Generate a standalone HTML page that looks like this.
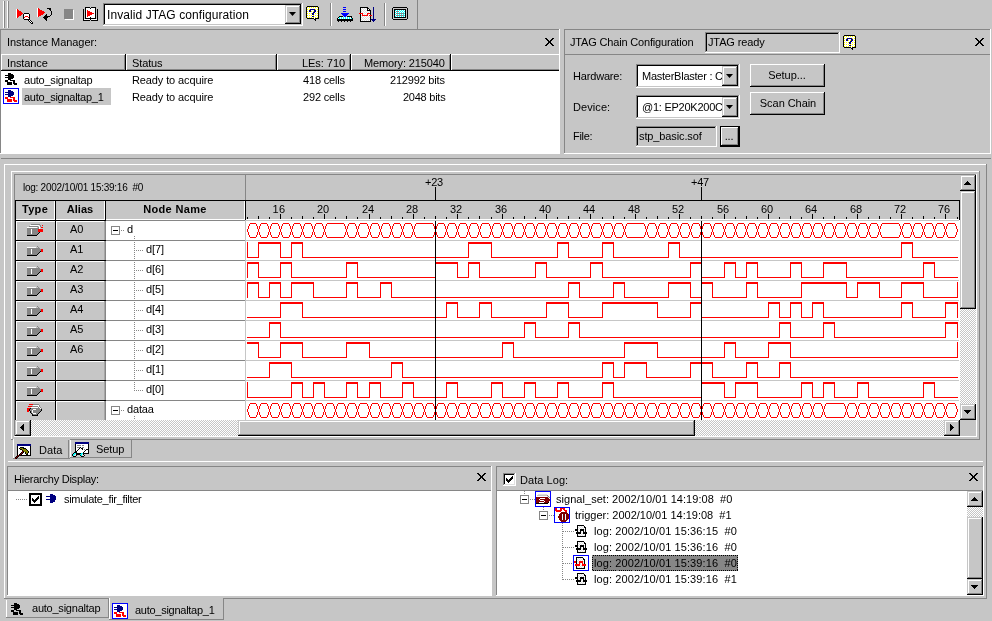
<!DOCTYPE html>
<html><head><meta charset="utf-8"><style>
html,body{margin:0;padding:0}
body{width:992px;height:621px;overflow:hidden;background:#c6c6c6;position:relative;font-family:"Liberation Sans",sans-serif}
div,span,svg{position:absolute}
.t{white-space:pre;line-height:normal;will-change:transform}
</style></head><body>
<div style="left:3px;top:1px;width:1px;height:27px;background:#fff;"></div>
<div style="left:4px;top:1px;width:1px;height:27px;background:#868686;"></div>
<div style="left:7px;top:1px;width:1px;height:27px;background:#fff;"></div>
<div style="left:8px;top:1px;width:1px;height:27px;background:#868686;"></div>
<div style="left:417px;top:0px;width:1px;height:29px;background:#868686;"></div>
<div style="left:103px;top:3px;width:200px;height:23px;background:#fff;"></div>
<div style="left:103px;top:3px;width:200px;height:1px;background:#868686;"></div>
<div style="left:103px;top:3px;width:1px;height:23px;background:#868686;"></div>
<div style="left:103px;top:25px;width:200px;height:1px;background:#fff;"></div>
<div style="left:302px;top:3px;width:1px;height:23px;background:#fff;"></div>
<div style="left:104px;top:4px;width:198px;height:1px;background:#000;"></div>
<div style="left:104px;top:4px;width:1px;height:21px;background:#000;"></div>
<div style="left:104px;top:24px;width:198px;height:1px;background:#c6c6c6;"></div>
<div style="left:301px;top:4px;width:1px;height:21px;background:#c6c6c6;"></div>
<div style="left:285px;top:5px;width:16px;height:19px;background:#c6c6c6;"></div>
<div style="left:285px;top:23px;width:16px;height:1px;background:#000;"></div>
<div style="left:300px;top:5px;width:1px;height:19px;background:#000;"></div>
<div style="left:286px;top:6px;width:14px;height:1px;background:#fff;"></div>
<div style="left:286px;top:6px;width:1px;height:17px;background:#fff;"></div>
<div style="left:286px;top:22px;width:14px;height:1px;background:#868686;"></div>
<div style="left:299px;top:6px;width:1px;height:17px;background:#868686;"></div>
<svg style="left:289px;top:12px" width="7" height="4" viewBox="0 0 7 4" shape-rendering="crispEdges"><polygon points="0,0 7,0 3.5,4" fill="#000" shape-rendering="auto"/></svg>
<span class="t" style="left:107px;top:8px;font-size:12px;font-weight:normal;color:#000;letter-spacing:0.08px;">Invalid JTAG configuration</span>
<div style="left:330px;top:3px;width:1px;height:23px;background:#868686;"></div>
<div style="left:331px;top:3px;width:1px;height:23px;background:#fff;"></div>
<div style="left:384px;top:3px;width:1px;height:23px;background:#868686;"></div>
<div style="left:385px;top:3px;width:1px;height:23px;background:#fff;"></div>
<div style="left:0px;top:29px;width:560px;height:1px;background:#868686;"></div>
<div style="left:0px;top:29px;width:1px;height:125px;background:#868686;"></div>
<div style="left:559px;top:29px;width:1px;height:125px;background:#fff;"></div>
<div style="left:0px;top:153px;width:560px;height:1px;background:#fff;"></div>
<span class="t" style="left:7px;top:36px;font-size:11px;font-weight:normal;color:#000;letter-spacing:-0.062px;">Instance Manager:</span>
<svg style="left:545px;top:38px" width="9" height="8" viewBox="0 0 9 8" shape-rendering="crispEdges"><rect x="0" y="0" width="2" height="1" fill="#000"/><rect x="7" y="0" width="2" height="1" fill="#000"/><rect x="1" y="1" width="2" height="1" fill="#000"/><rect x="6" y="1" width="2" height="1" fill="#000"/><rect x="2" y="2" width="2" height="1" fill="#000"/><rect x="5" y="2" width="2" height="1" fill="#000"/><rect x="3" y="3" width="2" height="1" fill="#000"/><rect x="4" y="3" width="2" height="1" fill="#000"/><rect x="4" y="4" width="2" height="1" fill="#000"/><rect x="3" y="4" width="2" height="1" fill="#000"/><rect x="5" y="5" width="2" height="1" fill="#000"/><rect x="2" y="5" width="2" height="1" fill="#000"/><rect x="6" y="6" width="2" height="1" fill="#000"/><rect x="1" y="6" width="2" height="1" fill="#000"/><rect x="7" y="7" width="2" height="1" fill="#000"/><rect x="0" y="7" width="2" height="1" fill="#000"/></svg>
<div style="left:1px;top:54px;width:558px;height:17px;background:#c6c6c6;"></div>
<div style="left:1px;top:54px;width:558px;height:1px;background:#fff;"></div>
<div style="left:1px;top:69px;width:558px;height:1px;background:#868686;"></div>
<div style="left:1px;top:70px;width:558px;height:1px;background:#000;"></div>
<div style="left:124px;top:55px;width:1px;height:15px;background:#868686;"></div>
<div style="left:125px;top:54px;width:1px;height:17px;background:#000;"></div>
<div style="left:126px;top:55px;width:1px;height:15px;background:#fff;"></div>
<div style="left:275px;top:55px;width:1px;height:15px;background:#868686;"></div>
<div style="left:276px;top:54px;width:1px;height:17px;background:#000;"></div>
<div style="left:277px;top:55px;width:1px;height:15px;background:#fff;"></div>
<div style="left:349px;top:55px;width:1px;height:15px;background:#868686;"></div>
<div style="left:350px;top:54px;width:1px;height:17px;background:#000;"></div>
<div style="left:351px;top:55px;width:1px;height:15px;background:#fff;"></div>
<div style="left:449px;top:55px;width:1px;height:15px;background:#868686;"></div>
<div style="left:450px;top:54px;width:1px;height:17px;background:#000;"></div>
<div style="left:451px;top:55px;width:1px;height:15px;background:#fff;"></div>
<div style="left:1px;top:54px;width:1px;height:16px;background:#fff;"></div>
<span class="t" style="left:7px;top:57px;font-size:11px;font-weight:normal;color:#000;letter-spacing:-0.1px;">Instance</span>
<span class="t" style="left:132px;top:57px;font-size:11px;font-weight:normal;color:#000;letter-spacing:-0.12px;">Status</span>
<span class="t" style="right:647px;top:57px;font-size:11px;font-weight:normal;color:#000;letter-spacing:-0.043px;">LEs: 710</span>
<span class="t" style="right:547px;top:57px;font-size:11px;font-weight:normal;color:#000;letter-spacing:-0.123px;">Memory: 215040</span>
<div style="left:1px;top:71px;width:558px;height:82px;background:#fff;"></div>
<div style="left:22px;top:88px;width:89px;height:17px;background:#c6c6c6;"></div>
<span class="t" style="left:24px;top:74px;font-size:11px;font-weight:normal;color:#000;letter-spacing:-0.231px;">auto_signaltap</span>
<span class="t" style="left:132px;top:74px;font-size:11px;font-weight:normal;color:#000;letter-spacing:-0.12px;">Ready to acquire</span>
<span class="t" style="right:647px;top:74px;font-size:11px;font-weight:normal;color:#000;letter-spacing:-0.162px;">418 cells</span>
<span class="t" style="right:547px;top:74px;font-size:11px;font-weight:normal;color:#000;letter-spacing:-0.2px;">212992 bits</span>
<span class="t" style="left:24px;top:91px;font-size:11px;font-weight:normal;color:#000;letter-spacing:-0.267px;">auto_signaltap_1</span>
<span class="t" style="left:132px;top:91px;font-size:11px;font-weight:normal;color:#000;letter-spacing:-0.12px;">Ready to acquire</span>
<span class="t" style="right:647px;top:91px;font-size:11px;font-weight:normal;color:#000;letter-spacing:-0.16px;">292 cells</span>
<span class="t" style="right:547px;top:91px;font-size:11px;font-weight:normal;color:#000;letter-spacing:-0.25px;">2048 bits</span>
<div style="left:564px;top:29px;width:427px;height:1px;background:#868686;"></div>
<div style="left:564px;top:29px;width:1px;height:125px;background:#868686;"></div>
<div style="left:990px;top:29px;width:1px;height:125px;background:#fff;"></div>
<div style="left:564px;top:153px;width:427px;height:1px;background:#fff;"></div>
<div style="left:565px;top:54px;width:425px;height:1px;background:#868686;"></div>
<span class="t" style="left:570px;top:36px;font-size:11px;font-weight:normal;color:#000;letter-spacing:-0.174px;">JTAG Chain Configuration</span>
<div style="left:705px;top:32px;width:135px;height:21px;background:#c6c6c6;"></div>
<div style="left:705px;top:32px;width:135px;height:1px;background:#868686;"></div>
<div style="left:705px;top:32px;width:1px;height:21px;background:#868686;"></div>
<div style="left:705px;top:52px;width:135px;height:1px;background:#fff;"></div>
<div style="left:839px;top:32px;width:1px;height:21px;background:#fff;"></div>
<div style="left:706px;top:33px;width:133px;height:1px;background:#000;"></div>
<div style="left:706px;top:33px;width:1px;height:19px;background:#000;"></div>
<div style="left:706px;top:51px;width:133px;height:1px;background:#c6c6c6;"></div>
<div style="left:838px;top:33px;width:1px;height:19px;background:#c6c6c6;"></div>
<span class="t" style="left:708px;top:36px;font-size:11px;font-weight:normal;color:#000;letter-spacing:-0.133px;">JTAG ready</span>
<svg style="left:975px;top:38px" width="9" height="8" viewBox="0 0 9 8" shape-rendering="crispEdges"><rect x="0" y="0" width="2" height="1" fill="#000"/><rect x="7" y="0" width="2" height="1" fill="#000"/><rect x="1" y="1" width="2" height="1" fill="#000"/><rect x="6" y="1" width="2" height="1" fill="#000"/><rect x="2" y="2" width="2" height="1" fill="#000"/><rect x="5" y="2" width="2" height="1" fill="#000"/><rect x="3" y="3" width="2" height="1" fill="#000"/><rect x="4" y="3" width="2" height="1" fill="#000"/><rect x="4" y="4" width="2" height="1" fill="#000"/><rect x="3" y="4" width="2" height="1" fill="#000"/><rect x="5" y="5" width="2" height="1" fill="#000"/><rect x="2" y="5" width="2" height="1" fill="#000"/><rect x="6" y="6" width="2" height="1" fill="#000"/><rect x="1" y="6" width="2" height="1" fill="#000"/><rect x="7" y="7" width="2" height="1" fill="#000"/><rect x="0" y="7" width="2" height="1" fill="#000"/></svg>
<span class="t" style="left:573px;top:70px;font-size:11px;font-weight:normal;color:#000;letter-spacing:-0.175px;">Hardware:</span>
<span class="t" style="left:573px;top:101px;font-size:11px;font-weight:normal;color:#000;letter-spacing:0.083px;">Device:</span>
<span class="t" style="left:573px;top:130px;font-size:11px;font-weight:normal;color:#000;letter-spacing:-0.325px;">File:</span>
<div style="left:636px;top:64px;width:104px;height:24px;background:#fff;"></div>
<div style="left:636px;top:64px;width:104px;height:1px;background:#868686;"></div>
<div style="left:636px;top:64px;width:1px;height:24px;background:#868686;"></div>
<div style="left:636px;top:87px;width:104px;height:1px;background:#fff;"></div>
<div style="left:739px;top:64px;width:1px;height:24px;background:#fff;"></div>
<div style="left:637px;top:65px;width:102px;height:1px;background:#000;"></div>
<div style="left:637px;top:65px;width:1px;height:22px;background:#000;"></div>
<div style="left:637px;top:86px;width:102px;height:1px;background:#c6c6c6;"></div>
<div style="left:738px;top:65px;width:1px;height:22px;background:#c6c6c6;"></div>
<div style="left:638px;top:66px;width:84px;height:20px;overflow:hidden">
<span class="t" style="left:3.5px;top:4px;font-size:11px;font-weight:normal;color:#000;letter-spacing:-0.25px;">MasterBlaster : C</span>
</div>
<div style="left:722px;top:66px;width:16px;height:20px;background:#c6c6c6;"></div>
<div style="left:722px;top:85px;width:16px;height:1px;background:#000;"></div>
<div style="left:737px;top:66px;width:1px;height:20px;background:#000;"></div>
<div style="left:723px;top:67px;width:14px;height:1px;background:#fff;"></div>
<div style="left:723px;top:67px;width:1px;height:18px;background:#fff;"></div>
<div style="left:723px;top:84px;width:14px;height:1px;background:#868686;"></div>
<div style="left:736px;top:67px;width:1px;height:18px;background:#868686;"></div>
<svg style="left:726px;top:74px" width="7" height="4" viewBox="0 0 7 4" shape-rendering="crispEdges"><polygon points="0,0 7,0 3.5,4" fill="#000" shape-rendering="auto"/></svg>
<div style="left:636px;top:95px;width:104px;height:24px;background:#fff;"></div>
<div style="left:636px;top:95px;width:104px;height:1px;background:#868686;"></div>
<div style="left:636px;top:95px;width:1px;height:24px;background:#868686;"></div>
<div style="left:636px;top:118px;width:104px;height:1px;background:#fff;"></div>
<div style="left:739px;top:95px;width:1px;height:24px;background:#fff;"></div>
<div style="left:637px;top:96px;width:102px;height:1px;background:#000;"></div>
<div style="left:637px;top:96px;width:1px;height:22px;background:#000;"></div>
<div style="left:637px;top:117px;width:102px;height:1px;background:#c6c6c6;"></div>
<div style="left:738px;top:96px;width:1px;height:22px;background:#c6c6c6;"></div>
<div style="left:638px;top:97px;width:84px;height:20px;overflow:hidden">
<span class="t" style="left:3.5px;top:4px;font-size:11px;font-weight:normal;color:#000;letter-spacing:-0.25px;">@1: EP20K200C</span>
</div>
<div style="left:722px;top:97px;width:16px;height:20px;background:#c6c6c6;"></div>
<div style="left:722px;top:116px;width:16px;height:1px;background:#000;"></div>
<div style="left:737px;top:97px;width:1px;height:20px;background:#000;"></div>
<div style="left:723px;top:98px;width:14px;height:1px;background:#fff;"></div>
<div style="left:723px;top:98px;width:1px;height:18px;background:#fff;"></div>
<div style="left:723px;top:115px;width:14px;height:1px;background:#868686;"></div>
<div style="left:736px;top:98px;width:1px;height:18px;background:#868686;"></div>
<svg style="left:726px;top:105px" width="7" height="4" viewBox="0 0 7 4" shape-rendering="crispEdges"><polygon points="0,0 7,0 3.5,4" fill="#000" shape-rendering="auto"/></svg>
<div style="left:636px;top:126px;width:81px;height:21px;background:#c6c6c6;"></div>
<div style="left:636px;top:126px;width:81px;height:1px;background:#868686;"></div>
<div style="left:636px;top:126px;width:1px;height:21px;background:#868686;"></div>
<div style="left:636px;top:146px;width:81px;height:1px;background:#fff;"></div>
<div style="left:716px;top:126px;width:1px;height:21px;background:#fff;"></div>
<div style="left:637px;top:127px;width:79px;height:1px;background:#000;"></div>
<div style="left:637px;top:127px;width:1px;height:19px;background:#000;"></div>
<div style="left:637px;top:145px;width:79px;height:1px;background:#c6c6c6;"></div>
<div style="left:715px;top:127px;width:1px;height:19px;background:#c6c6c6;"></div>
<span class="t" style="left:639px;top:130px;font-size:11px;font-weight:normal;color:#000;letter-spacing:-0.117px;">stp_basic.sof</span>
<div style="left:720px;top:126px;width:20px;height:21px;background:#000;"></div>
<div style="left:721px;top:127px;width:18px;height:19px;background:#c6c6c6;"></div>
<div style="left:721px;top:127px;width:18px;height:1px;background:#fff;"></div>
<div style="left:721px;top:127px;width:1px;height:19px;background:#fff;"></div>
<div style="left:721px;top:145px;width:18px;height:1px;background:#000;"></div>
<div style="left:738px;top:127px;width:1px;height:19px;background:#000;"></div>
<div style="left:722px;top:144px;width:16px;height:1px;background:#868686;"></div>
<div style="left:737px;top:128px;width:1px;height:17px;background:#868686;"></div>
<span class="t" style="left:629px;width:200px;text-align:center;top:130px;font-size:11px;font-weight:normal;color:#000;letter-spacing:-0.15px;">...</span>
<div style="left:750px;top:64px;width:75px;height:23px;background:#c6c6c6;"></div>
<div style="left:750px;top:64px;width:75px;height:1px;background:#fff;"></div>
<div style="left:750px;top:64px;width:1px;height:23px;background:#fff;"></div>
<div style="left:750px;top:86px;width:75px;height:1px;background:#000;"></div>
<div style="left:824px;top:64px;width:1px;height:23px;background:#000;"></div>
<div style="left:751px;top:85px;width:73px;height:1px;background:#868686;"></div>
<div style="left:823px;top:65px;width:1px;height:21px;background:#868686;"></div>
<span class="t" style="left:687px;width:200px;text-align:center;top:69px;font-size:11px;font-weight:normal;color:#000;letter-spacing:-0.057px;">Setup...</span>
<div style="left:750px;top:92px;width:75px;height:23px;background:#c6c6c6;"></div>
<div style="left:750px;top:92px;width:75px;height:1px;background:#fff;"></div>
<div style="left:750px;top:92px;width:1px;height:23px;background:#fff;"></div>
<div style="left:750px;top:114px;width:75px;height:1px;background:#000;"></div>
<div style="left:824px;top:92px;width:1px;height:23px;background:#000;"></div>
<div style="left:751px;top:113px;width:73px;height:1px;background:#868686;"></div>
<div style="left:823px;top:93px;width:1px;height:21px;background:#868686;"></div>
<span class="t" style="left:688px;width:200px;text-align:center;top:97px;font-size:11px;font-weight:normal;color:#000;letter-spacing:-0.056px;">Scan Chain</span>
<div style="left:1px;top:158px;width:990px;height:1px;background:#868686;"></div>
<div style="left:4px;top:164px;width:983px;height:1px;background:#fff;"></div>
<div style="left:4px;top:164px;width:1px;height:435px;background:#fff;"></div>
<div style="left:4px;top:598px;width:983px;height:1px;background:#868686;"></div>
<div style="left:986px;top:164px;width:1px;height:435px;background:#868686;"></div>
<div style="left:11px;top:171px;width:969px;height:1px;background:#fff;"></div>
<div style="left:11px;top:171px;width:1px;height:269px;background:#fff;"></div>
<div style="left:11px;top:439px;width:969px;height:1px;background:#868686;"></div>
<div style="left:979px;top:171px;width:1px;height:269px;background:#868686;"></div>
<div style="left:14px;top:174px;width:963px;height:263px;background:#c6c6c6;"></div>
<div style="left:14px;top:174px;width:963px;height:1px;background:#868686;"></div>
<div style="left:14px;top:174px;width:1px;height:263px;background:#868686;"></div>
<div style="left:976px;top:174px;width:1px;height:263px;background:#fff;"></div>
<div style="left:14px;top:436px;width:963px;height:1px;background:#fff;"></div>
<div style="left:8px;top:461px;width:975px;height:1px;background:#fff;"></div>
<div style="left:7px;top:466px;width:486px;height:131px;background:#c6c6c6;"></div>
<div style="left:7px;top:466px;width:485px;height:1px;background:#868686;"></div>
<div style="left:7px;top:466px;width:1px;height:130px;background:#868686;"></div>
<div style="left:7px;top:595px;width:485px;height:1px;background:#fff;"></div>
<div style="left:491px;top:466px;width:1px;height:130px;background:#fff;"></div>
<span class="t" style="left:14px;top:473px;font-size:11px;font-weight:normal;color:#000;letter-spacing:-0.241px;">Hierarchy Display:</span>
<svg style="left:477px;top:473px" width="9" height="8" viewBox="0 0 9 8" shape-rendering="crispEdges"><rect x="0" y="0" width="2" height="1" fill="#000"/><rect x="7" y="0" width="2" height="1" fill="#000"/><rect x="1" y="1" width="2" height="1" fill="#000"/><rect x="6" y="1" width="2" height="1" fill="#000"/><rect x="2" y="2" width="2" height="1" fill="#000"/><rect x="5" y="2" width="2" height="1" fill="#000"/><rect x="3" y="3" width="2" height="1" fill="#000"/><rect x="4" y="3" width="2" height="1" fill="#000"/><rect x="4" y="4" width="2" height="1" fill="#000"/><rect x="3" y="4" width="2" height="1" fill="#000"/><rect x="5" y="5" width="2" height="1" fill="#000"/><rect x="2" y="5" width="2" height="1" fill="#000"/><rect x="6" y="6" width="2" height="1" fill="#000"/><rect x="1" y="6" width="2" height="1" fill="#000"/><rect x="7" y="7" width="2" height="1" fill="#000"/><rect x="0" y="7" width="2" height="1" fill="#000"/></svg>
<div style="left:8px;top:490px;width:483px;height:105px;background:#fff;"></div>
<div style="left:8px;top:490px;width:483px;height:1px;background:#868686;"></div>
<span class="t" style="left:64px;top:493px;font-size:11px;font-weight:normal;color:#000;letter-spacing:-0.3px;">simulate_fir_filter</span>
<div style="left:496px;top:466px;width:488px;height:1px;background:#868686;"></div>
<div style="left:496px;top:466px;width:1px;height:130px;background:#868686;"></div>
<div style="left:496px;top:595px;width:488px;height:1px;background:#fff;"></div>
<div style="left:983px;top:466px;width:1px;height:130px;background:#fff;"></div>
<div style="left:497px;top:490px;width:486px;height:105px;background:#fff;"></div>
<div style="left:497px;top:490px;width:486px;height:1px;background:#868686;"></div>
<span class="t" style="left:520px;top:474px;font-size:11px;font-weight:normal;color:#000;letter-spacing:0.05px;">Data Log:</span>
<svg style="left:969px;top:473px" width="9" height="8" viewBox="0 0 9 8" shape-rendering="crispEdges"><rect x="0" y="0" width="2" height="1" fill="#000"/><rect x="7" y="0" width="2" height="1" fill="#000"/><rect x="1" y="1" width="2" height="1" fill="#000"/><rect x="6" y="1" width="2" height="1" fill="#000"/><rect x="2" y="2" width="2" height="1" fill="#000"/><rect x="5" y="2" width="2" height="1" fill="#000"/><rect x="3" y="3" width="2" height="1" fill="#000"/><rect x="4" y="3" width="2" height="1" fill="#000"/><rect x="4" y="4" width="2" height="1" fill="#000"/><rect x="3" y="4" width="2" height="1" fill="#000"/><rect x="5" y="5" width="2" height="1" fill="#000"/><rect x="2" y="5" width="2" height="1" fill="#000"/><rect x="6" y="6" width="2" height="1" fill="#000"/><rect x="1" y="6" width="2" height="1" fill="#000"/><rect x="7" y="7" width="2" height="1" fill="#000"/><rect x="0" y="7" width="2" height="1" fill="#000"/></svg>
<span class="t" style="left:556px;top:493px;font-size:11px;font-weight:normal;color:#000;letter-spacing:0.04px;">signal_set: 2002/10/01 14:19:08&nbsp; #0</span>
<span class="t" style="left:575px;top:509px;font-size:11px;font-weight:normal;color:#000;letter-spacing:0.0px;">trigger: 2002/10/01 14:19:08&nbsp; #1</span>
<span class="t" style="left:594px;top:525px;font-size:11px;font-weight:normal;color:#000;letter-spacing:0.1px;">log: 2002/10/01 15:36:15&nbsp; #0</span>
<span class="t" style="left:594px;top:541px;font-size:11px;font-weight:normal;color:#000;letter-spacing:0.1px;">log: 2002/10/01 15:36:16&nbsp; #0</span>
<div style="left:592px;top:555px;width:146px;height:16px;background:#868686;"></div>
<span class="t" style="left:594px;top:557px;font-size:11px;font-weight:normal;color:#000;letter-spacing:0.1px;">log: 2002/10/01 15:39:16&nbsp; #0</span>
<span class="t" style="left:594px;top:573px;font-size:11px;font-weight:normal;color:#000;letter-spacing:0.1px;">log: 2002/10/01 15:39:16&nbsp; #1</span>
<div style="left:15px;top:175px;width:960px;height:25px;background:#c6c6c6;"></div>
<div style="left:245px;top:175px;width:1px;height:25px;background:#868686;"></div>
<span class="t" style="left:23px;top:182px;font-size:10px;font-weight:normal;color:#000;letter-spacing:-0.259px;">log: 2002/10/01 15:39:16&nbsp; #0</span>
<span class="t" style="left:334px;width:200px;text-align:center;top:176px;font-size:11px;font-weight:normal;color:#000;letter-spacing:-0.3px;">+23</span>
<div style="left:435px;top:187px;width:1px;height:13px;background:#000;"></div>
<span class="t" style="left:600px;width:200px;text-align:center;top:176px;font-size:11px;font-weight:normal;color:#000;letter-spacing:-0.3px;">+47</span>
<div style="left:701px;top:187px;width:1px;height:13px;background:#000;"></div>
<div style="left:15px;top:200px;width:945px;height:1px;background:#000;"></div>
<div style="left:15px;top:200px;width:1px;height:221px;background:#000;"></div>
<div style="left:16px;top:201px;width:39px;height:19px;background:#c6c6c6;"></div>
<div style="left:16px;top:219px;width:39px;height:1px;background:#fff;"></div>
<div style="left:54px;top:201px;width:1px;height:19px;background:#fff;"></div>
<div style="left:55px;top:201px;width:1px;height:19px;background:#000;"></div>
<div style="left:56px;top:201px;width:49px;height:19px;background:#c6c6c6;"></div>
<div style="left:56px;top:219px;width:49px;height:1px;background:#fff;"></div>
<div style="left:104px;top:201px;width:1px;height:19px;background:#fff;"></div>
<div style="left:105px;top:201px;width:1px;height:19px;background:#000;"></div>
<div style="left:106px;top:201px;width:139px;height:19px;background:#c6c6c6;"></div>
<div style="left:106px;top:219px;width:139px;height:1px;background:#fff;"></div>
<div style="left:244px;top:201px;width:1px;height:19px;background:#fff;"></div>
<div style="left:245px;top:201px;width:1px;height:19px;background:#000;"></div>
<span class="t" style="left:-65px;width:200px;text-align:center;top:203px;font-size:11px;font-weight:bold;color:#000;letter-spacing:0.333px;">Type</span>
<span class="t" style="left:-20px;width:200px;text-align:center;top:203px;font-size:11px;font-weight:bold;color:#000;letter-spacing:0.0px;">Alias</span>
<span class="t" style="left:75px;width:200px;text-align:center;top:203px;font-size:11px;font-weight:bold;color:#000;letter-spacing:0.338px;">Node Name</span>
<div style="left:246px;top:201px;width:713px;height:19px;background:#c6c6c6;"></div>
<div style="left:246px;top:219px;width:713px;height:1px;background:#fff;"></div>
<div style="left:959px;top:200px;width:1px;height:20px;background:#000;"></div>
<div style="left:247px;top:217px;width:1px;height:2px;background:#000;"></div>
<div style="left:258px;top:216px;width:1px;height:3px;background:#000;"></div>
<div style="left:269px;top:217px;width:1px;height:2px;background:#000;"></div>
<div style="left:280px;top:214px;width:1px;height:5px;background:#000;"></div>
<span class="t" style="left:179px;width:200px;text-align:center;top:203px;font-size:11px;font-weight:normal;color:#000;letter-spacing:0.5px;">16</span>
<div style="left:291px;top:217px;width:1px;height:2px;background:#000;"></div>
<div style="left:302px;top:216px;width:1px;height:3px;background:#000;"></div>
<div style="left:313px;top:217px;width:1px;height:2px;background:#000;"></div>
<div style="left:324px;top:214px;width:1px;height:5px;background:#000;"></div>
<span class="t" style="left:223px;width:200px;text-align:center;top:203px;font-size:11px;font-weight:normal;color:#000;letter-spacing:0px;">20</span>
<div style="left:335px;top:217px;width:1px;height:2px;background:#000;"></div>
<div style="left:346px;top:216px;width:1px;height:3px;background:#000;"></div>
<div style="left:357px;top:217px;width:1px;height:2px;background:#000;"></div>
<div style="left:369px;top:214px;width:1px;height:5px;background:#000;"></div>
<span class="t" style="left:268px;width:200px;text-align:center;top:203px;font-size:11px;font-weight:normal;color:#000;letter-spacing:0px;">24</span>
<div style="left:380px;top:217px;width:1px;height:2px;background:#000;"></div>
<div style="left:391px;top:216px;width:1px;height:3px;background:#000;"></div>
<div style="left:402px;top:217px;width:1px;height:2px;background:#000;"></div>
<div style="left:413px;top:214px;width:1px;height:5px;background:#000;"></div>
<span class="t" style="left:312px;width:200px;text-align:center;top:203px;font-size:11px;font-weight:normal;color:#000;letter-spacing:0px;">28</span>
<div style="left:424px;top:217px;width:1px;height:2px;background:#000;"></div>
<div style="left:435px;top:216px;width:1px;height:3px;background:#000;"></div>
<div style="left:446px;top:217px;width:1px;height:2px;background:#000;"></div>
<div style="left:457px;top:214px;width:1px;height:5px;background:#000;"></div>
<span class="t" style="left:356px;width:200px;text-align:center;top:203px;font-size:11px;font-weight:normal;color:#000;letter-spacing:0px;">32</span>
<div style="left:468px;top:217px;width:1px;height:2px;background:#000;"></div>
<div style="left:479px;top:216px;width:1px;height:3px;background:#000;"></div>
<div style="left:491px;top:217px;width:1px;height:2px;background:#000;"></div>
<div style="left:502px;top:214px;width:1px;height:5px;background:#000;"></div>
<span class="t" style="left:401px;width:200px;text-align:center;top:203px;font-size:11px;font-weight:normal;color:#000;letter-spacing:0px;">36</span>
<div style="left:513px;top:217px;width:1px;height:2px;background:#000;"></div>
<div style="left:524px;top:216px;width:1px;height:3px;background:#000;"></div>
<div style="left:535px;top:217px;width:1px;height:2px;background:#000;"></div>
<div style="left:546px;top:214px;width:1px;height:5px;background:#000;"></div>
<span class="t" style="left:445px;width:200px;text-align:center;top:203px;font-size:11px;font-weight:normal;color:#000;letter-spacing:0px;">40</span>
<div style="left:557px;top:217px;width:1px;height:2px;background:#000;"></div>
<div style="left:568px;top:216px;width:1px;height:3px;background:#000;"></div>
<div style="left:579px;top:217px;width:1px;height:2px;background:#000;"></div>
<div style="left:590px;top:214px;width:1px;height:5px;background:#000;"></div>
<span class="t" style="left:489px;width:200px;text-align:center;top:203px;font-size:11px;font-weight:normal;color:#000;letter-spacing:0px;">44</span>
<div style="left:602px;top:217px;width:1px;height:2px;background:#000;"></div>
<div style="left:613px;top:216px;width:1px;height:3px;background:#000;"></div>
<div style="left:624px;top:217px;width:1px;height:2px;background:#000;"></div>
<div style="left:635px;top:214px;width:1px;height:5px;background:#000;"></div>
<span class="t" style="left:534px;width:200px;text-align:center;top:203px;font-size:11px;font-weight:normal;color:#000;letter-spacing:0px;">48</span>
<div style="left:646px;top:217px;width:1px;height:2px;background:#000;"></div>
<div style="left:657px;top:216px;width:1px;height:3px;background:#000;"></div>
<div style="left:668px;top:217px;width:1px;height:2px;background:#000;"></div>
<div style="left:679px;top:214px;width:1px;height:5px;background:#000;"></div>
<span class="t" style="left:578px;width:200px;text-align:center;top:203px;font-size:11px;font-weight:normal;color:#000;letter-spacing:0px;">52</span>
<div style="left:690px;top:217px;width:1px;height:2px;background:#000;"></div>
<div style="left:701px;top:216px;width:1px;height:3px;background:#000;"></div>
<div style="left:712px;top:217px;width:1px;height:2px;background:#000;"></div>
<div style="left:724px;top:214px;width:1px;height:5px;background:#000;"></div>
<span class="t" style="left:623px;width:200px;text-align:center;top:203px;font-size:11px;font-weight:normal;color:#000;letter-spacing:0px;">56</span>
<div style="left:735px;top:217px;width:1px;height:2px;background:#000;"></div>
<div style="left:746px;top:216px;width:1px;height:3px;background:#000;"></div>
<div style="left:757px;top:217px;width:1px;height:2px;background:#000;"></div>
<div style="left:768px;top:214px;width:1px;height:5px;background:#000;"></div>
<span class="t" style="left:667px;width:200px;text-align:center;top:203px;font-size:11px;font-weight:normal;color:#000;letter-spacing:0px;">60</span>
<div style="left:779px;top:217px;width:1px;height:2px;background:#000;"></div>
<div style="left:790px;top:216px;width:1px;height:3px;background:#000;"></div>
<div style="left:801px;top:217px;width:1px;height:2px;background:#000;"></div>
<div style="left:812px;top:214px;width:1px;height:5px;background:#000;"></div>
<span class="t" style="left:711px;width:200px;text-align:center;top:203px;font-size:11px;font-weight:normal;color:#000;letter-spacing:0px;">64</span>
<div style="left:823px;top:217px;width:1px;height:2px;background:#000;"></div>
<div style="left:834px;top:216px;width:1px;height:3px;background:#000;"></div>
<div style="left:846px;top:217px;width:1px;height:2px;background:#000;"></div>
<div style="left:857px;top:214px;width:1px;height:5px;background:#000;"></div>
<span class="t" style="left:756px;width:200px;text-align:center;top:203px;font-size:11px;font-weight:normal;color:#000;letter-spacing:0px;">68</span>
<div style="left:868px;top:217px;width:1px;height:2px;background:#000;"></div>
<div style="left:879px;top:216px;width:1px;height:3px;background:#000;"></div>
<div style="left:890px;top:217px;width:1px;height:2px;background:#000;"></div>
<div style="left:901px;top:214px;width:1px;height:5px;background:#000;"></div>
<span class="t" style="left:800px;width:200px;text-align:center;top:203px;font-size:11px;font-weight:normal;color:#000;letter-spacing:0px;">72</span>
<div style="left:912px;top:217px;width:1px;height:2px;background:#000;"></div>
<div style="left:923px;top:216px;width:1px;height:3px;background:#000;"></div>
<div style="left:934px;top:217px;width:1px;height:2px;background:#000;"></div>
<div style="left:945px;top:214px;width:1px;height:5px;background:#000;"></div>
<span class="t" style="left:844px;width:200px;text-align:center;top:203px;font-size:11px;font-weight:normal;color:#000;letter-spacing:0px;">76</span>
<div style="left:957px;top:217px;width:1px;height:2px;background:#000;"></div>
<div style="left:15px;top:220px;width:91px;height:1px;background:#000;"></div>
<div style="left:106px;top:221px;width:853px;height:199px;background:#fff;"></div>
<div style="left:106px;top:220px;width:139px;height:1px;background:#868686;"></div>
<div style="left:246px;top:220px;width:713px;height:1px;background:#c6c6c6;"></div>
<div style="left:16px;top:221px;width:39px;height:19px;background:#c6c6c6;"></div>
<div style="left:16px;top:221px;width:39px;height:1px;background:#fff;"></div>
<div style="left:16px;top:221px;width:1px;height:19px;background:#fff;"></div>
<div style="left:55px;top:221px;width:1px;height:19px;background:#000;"></div>
<div style="left:56px;top:221px;width:48px;height:19px;background:#c6c6c6;"></div>
<div style="left:56px;top:221px;width:48px;height:1px;background:#fff;"></div>
<div style="left:56px;top:221px;width:1px;height:19px;background:#fff;"></div>
<div style="left:104px;top:221px;width:1px;height:19px;background:#a6a6a6;"></div>
<div style="left:105px;top:221px;width:1px;height:19px;background:#868686;"></div>
<div style="left:106px;top:240px;width:139px;height:1px;background:#868686;"></div>
<div style="left:246px;top:240px;width:713px;height:1px;background:#c6c6c6;"></div>
<div style="left:15px;top:240px;width:91px;height:1px;background:#000;"></div>
<div style="left:16px;top:241px;width:39px;height:19px;background:#c6c6c6;"></div>
<div style="left:16px;top:241px;width:39px;height:1px;background:#fff;"></div>
<div style="left:16px;top:241px;width:1px;height:19px;background:#fff;"></div>
<div style="left:55px;top:241px;width:1px;height:19px;background:#000;"></div>
<div style="left:56px;top:241px;width:48px;height:19px;background:#c6c6c6;"></div>
<div style="left:56px;top:241px;width:48px;height:1px;background:#fff;"></div>
<div style="left:56px;top:241px;width:1px;height:19px;background:#fff;"></div>
<div style="left:104px;top:241px;width:1px;height:19px;background:#a6a6a6;"></div>
<div style="left:105px;top:241px;width:1px;height:19px;background:#868686;"></div>
<div style="left:106px;top:260px;width:139px;height:1px;background:#868686;"></div>
<div style="left:246px;top:260px;width:713px;height:1px;background:#c6c6c6;"></div>
<div style="left:15px;top:260px;width:91px;height:1px;background:#000;"></div>
<div style="left:16px;top:261px;width:39px;height:19px;background:#c6c6c6;"></div>
<div style="left:16px;top:261px;width:39px;height:1px;background:#fff;"></div>
<div style="left:16px;top:261px;width:1px;height:19px;background:#fff;"></div>
<div style="left:55px;top:261px;width:1px;height:19px;background:#000;"></div>
<div style="left:56px;top:261px;width:48px;height:19px;background:#c6c6c6;"></div>
<div style="left:56px;top:261px;width:48px;height:1px;background:#fff;"></div>
<div style="left:56px;top:261px;width:1px;height:19px;background:#fff;"></div>
<div style="left:104px;top:261px;width:1px;height:19px;background:#a6a6a6;"></div>
<div style="left:105px;top:261px;width:1px;height:19px;background:#868686;"></div>
<div style="left:106px;top:280px;width:139px;height:1px;background:#868686;"></div>
<div style="left:246px;top:280px;width:713px;height:1px;background:#c6c6c6;"></div>
<div style="left:15px;top:280px;width:91px;height:1px;background:#000;"></div>
<div style="left:16px;top:281px;width:39px;height:19px;background:#c6c6c6;"></div>
<div style="left:16px;top:281px;width:39px;height:1px;background:#fff;"></div>
<div style="left:16px;top:281px;width:1px;height:19px;background:#fff;"></div>
<div style="left:55px;top:281px;width:1px;height:19px;background:#000;"></div>
<div style="left:56px;top:281px;width:48px;height:19px;background:#c6c6c6;"></div>
<div style="left:56px;top:281px;width:48px;height:1px;background:#fff;"></div>
<div style="left:56px;top:281px;width:1px;height:19px;background:#fff;"></div>
<div style="left:104px;top:281px;width:1px;height:19px;background:#a6a6a6;"></div>
<div style="left:105px;top:281px;width:1px;height:19px;background:#868686;"></div>
<div style="left:106px;top:300px;width:139px;height:1px;background:#868686;"></div>
<div style="left:246px;top:300px;width:713px;height:1px;background:#c6c6c6;"></div>
<div style="left:15px;top:300px;width:91px;height:1px;background:#000;"></div>
<div style="left:16px;top:301px;width:39px;height:19px;background:#c6c6c6;"></div>
<div style="left:16px;top:301px;width:39px;height:1px;background:#fff;"></div>
<div style="left:16px;top:301px;width:1px;height:19px;background:#fff;"></div>
<div style="left:55px;top:301px;width:1px;height:19px;background:#000;"></div>
<div style="left:56px;top:301px;width:48px;height:19px;background:#c6c6c6;"></div>
<div style="left:56px;top:301px;width:48px;height:1px;background:#fff;"></div>
<div style="left:56px;top:301px;width:1px;height:19px;background:#fff;"></div>
<div style="left:104px;top:301px;width:1px;height:19px;background:#a6a6a6;"></div>
<div style="left:105px;top:301px;width:1px;height:19px;background:#868686;"></div>
<div style="left:106px;top:320px;width:139px;height:1px;background:#868686;"></div>
<div style="left:246px;top:320px;width:713px;height:1px;background:#c6c6c6;"></div>
<div style="left:15px;top:320px;width:91px;height:1px;background:#000;"></div>
<div style="left:16px;top:321px;width:39px;height:19px;background:#c6c6c6;"></div>
<div style="left:16px;top:321px;width:39px;height:1px;background:#fff;"></div>
<div style="left:16px;top:321px;width:1px;height:19px;background:#fff;"></div>
<div style="left:55px;top:321px;width:1px;height:19px;background:#000;"></div>
<div style="left:56px;top:321px;width:48px;height:19px;background:#c6c6c6;"></div>
<div style="left:56px;top:321px;width:48px;height:1px;background:#fff;"></div>
<div style="left:56px;top:321px;width:1px;height:19px;background:#fff;"></div>
<div style="left:104px;top:321px;width:1px;height:19px;background:#a6a6a6;"></div>
<div style="left:105px;top:321px;width:1px;height:19px;background:#868686;"></div>
<div style="left:106px;top:340px;width:139px;height:1px;background:#868686;"></div>
<div style="left:246px;top:340px;width:713px;height:1px;background:#c6c6c6;"></div>
<div style="left:15px;top:340px;width:91px;height:1px;background:#000;"></div>
<div style="left:16px;top:341px;width:39px;height:19px;background:#c6c6c6;"></div>
<div style="left:16px;top:341px;width:39px;height:1px;background:#fff;"></div>
<div style="left:16px;top:341px;width:1px;height:19px;background:#fff;"></div>
<div style="left:55px;top:341px;width:1px;height:19px;background:#000;"></div>
<div style="left:56px;top:341px;width:48px;height:19px;background:#c6c6c6;"></div>
<div style="left:56px;top:341px;width:48px;height:1px;background:#fff;"></div>
<div style="left:56px;top:341px;width:1px;height:19px;background:#fff;"></div>
<div style="left:104px;top:341px;width:1px;height:19px;background:#a6a6a6;"></div>
<div style="left:105px;top:341px;width:1px;height:19px;background:#868686;"></div>
<div style="left:106px;top:360px;width:139px;height:1px;background:#868686;"></div>
<div style="left:246px;top:360px;width:713px;height:1px;background:#c6c6c6;"></div>
<div style="left:15px;top:360px;width:91px;height:1px;background:#000;"></div>
<div style="left:16px;top:361px;width:39px;height:19px;background:#c6c6c6;"></div>
<div style="left:16px;top:361px;width:39px;height:1px;background:#fff;"></div>
<div style="left:16px;top:361px;width:1px;height:19px;background:#fff;"></div>
<div style="left:55px;top:361px;width:1px;height:19px;background:#000;"></div>
<div style="left:56px;top:361px;width:48px;height:19px;background:#c6c6c6;"></div>
<div style="left:56px;top:361px;width:48px;height:1px;background:#fff;"></div>
<div style="left:56px;top:361px;width:1px;height:19px;background:#fff;"></div>
<div style="left:104px;top:361px;width:1px;height:19px;background:#a6a6a6;"></div>
<div style="left:105px;top:361px;width:1px;height:19px;background:#868686;"></div>
<div style="left:106px;top:380px;width:139px;height:1px;background:#868686;"></div>
<div style="left:246px;top:380px;width:713px;height:1px;background:#c6c6c6;"></div>
<div style="left:15px;top:380px;width:91px;height:1px;background:#000;"></div>
<div style="left:16px;top:381px;width:39px;height:19px;background:#c6c6c6;"></div>
<div style="left:16px;top:381px;width:39px;height:1px;background:#fff;"></div>
<div style="left:16px;top:381px;width:1px;height:19px;background:#fff;"></div>
<div style="left:55px;top:381px;width:1px;height:19px;background:#000;"></div>
<div style="left:56px;top:381px;width:48px;height:19px;background:#c6c6c6;"></div>
<div style="left:56px;top:381px;width:48px;height:1px;background:#fff;"></div>
<div style="left:56px;top:381px;width:1px;height:19px;background:#fff;"></div>
<div style="left:104px;top:381px;width:1px;height:19px;background:#a6a6a6;"></div>
<div style="left:105px;top:381px;width:1px;height:19px;background:#868686;"></div>
<div style="left:106px;top:400px;width:139px;height:1px;background:#868686;"></div>
<div style="left:246px;top:400px;width:713px;height:1px;background:#c6c6c6;"></div>
<div style="left:15px;top:400px;width:91px;height:1px;background:#000;"></div>
<div style="left:16px;top:401px;width:39px;height:19px;background:#c6c6c6;"></div>
<div style="left:16px;top:401px;width:39px;height:1px;background:#fff;"></div>
<div style="left:16px;top:401px;width:1px;height:19px;background:#fff;"></div>
<div style="left:55px;top:401px;width:1px;height:19px;background:#000;"></div>
<div style="left:56px;top:401px;width:48px;height:19px;background:#c6c6c6;"></div>
<div style="left:56px;top:401px;width:48px;height:1px;background:#fff;"></div>
<div style="left:56px;top:401px;width:1px;height:19px;background:#fff;"></div>
<div style="left:104px;top:401px;width:1px;height:19px;background:#a6a6a6;"></div>
<div style="left:105px;top:401px;width:1px;height:19px;background:#868686;"></div>
<div style="left:245px;top:220px;width:1px;height:201px;background:#c6c6c6;"></div>
<div style="left:959px;top:220px;width:1px;height:201px;background:#fff;"></div>
<span class="t" style="left:70px;top:223px;font-size:11px;font-weight:normal;color:#000;letter-spacing:0.0px;">A0</span>
<span class="t" style="left:70px;top:243px;font-size:11px;font-weight:normal;color:#000;letter-spacing:0px;">A1</span>
<span class="t" style="left:70px;top:263px;font-size:11px;font-weight:normal;color:#000;letter-spacing:0px;">A2</span>
<span class="t" style="left:70px;top:283px;font-size:11px;font-weight:normal;color:#000;letter-spacing:0px;">A3</span>
<span class="t" style="left:70px;top:303px;font-size:11px;font-weight:normal;color:#000;letter-spacing:0px;">A4</span>
<span class="t" style="left:70px;top:323px;font-size:11px;font-weight:normal;color:#000;letter-spacing:0px;">A5</span>
<span class="t" style="left:70px;top:343px;font-size:11px;font-weight:normal;color:#000;letter-spacing:0px;">A6</span>
<svg style="left:0px;top:0px" width="992" height="621" viewBox="0 0 992 621" shape-rendering="crispEdges"><path d="M247 257h12v1h-12zM258 242h22v2h-22zM280 257h12v1h-12zM291 242h11v2h-11zM302 257h167v1h-167zM468 242h23v2h-23zM491 257h67v1h-67zM557 242h11v2h-11zM568 257h35v1h-35zM602 242h11v2h-11zM613 257h56v1h-56zM668 242h11v2h-11zM679 257h223v1h-223zM901 242h11v2h-11zM912 257h46v1h-46zM247 242h1v16h-1zM258 242h1v16h-1zM280 242h1v16h-1zM291 242h1v16h-1zM302 242h1v16h-1zM468 242h1v16h-1zM491 242h1v16h-1zM557 242h1v16h-1zM568 242h1v16h-1zM602 242h1v16h-1zM613 242h1v16h-1zM668 242h1v16h-1zM679 242h1v16h-1zM901 242h1v16h-1zM912 242h1v16h-1zM247 262h11v2h-11zM258 277h23v1h-23zM280 262h11v2h-11zM291 277h56v1h-56zM346 262h11v2h-11zM357 277h79v1h-79zM435 262h22v2h-22zM457 277h12v1h-12zM468 262h11v2h-11zM479 277h57v1h-57zM535 262h11v2h-11zM546 277h45v1h-45zM590 262h12v2h-12zM602 277h89v1h-89zM690 262h11v2h-11zM701 277h24v1h-24zM724 262h11v2h-11zM735 277h12v1h-12zM746 262h11v2h-11zM757 277h34v1h-34zM790 262h11v2h-11zM801 277h23v1h-23zM823 262h23v2h-23zM846 277h78v1h-78zM923 262h11v2h-11zM934 277h24v1h-24zM247 262h1v16h-1zM258 262h1v16h-1zM280 262h1v16h-1zM291 262h1v16h-1zM346 262h1v16h-1zM357 262h1v16h-1zM435 262h1v16h-1zM457 262h1v16h-1zM468 262h1v16h-1zM479 262h1v16h-1zM535 262h1v16h-1zM546 262h1v16h-1zM590 262h1v16h-1zM602 262h1v16h-1zM690 262h1v16h-1zM701 262h1v16h-1zM724 262h1v16h-1zM735 262h1v16h-1zM746 262h1v16h-1zM757 262h1v16h-1zM790 262h1v16h-1zM801 262h1v16h-1zM823 262h1v16h-1zM846 262h1v16h-1zM923 262h1v16h-1zM934 262h1v16h-1zM247 282h11v2h-11zM258 297h12v1h-12zM269 282h11v2h-11zM280 297h12v1h-12zM291 282h22v2h-22zM313 297h34v1h-34zM346 282h11v2h-11zM357 297h24v1h-24zM380 282h11v2h-11zM391 297h178v1h-178zM568 282h11v2h-11zM579 297h35v1h-35zM613 282h11v2h-11zM624 297h45v1h-45zM668 282h22v2h-22zM690 297h12v1h-12zM701 282h11v2h-11zM712 297h35v1h-35zM746 282h11v2h-11zM757 297h45v1h-45zM801 282h45v2h-45zM846 297h12v1h-12zM857 282h22v2h-22zM879 297h23v1h-23zM901 282h22v2h-22zM923 297h35v1h-35zM247 282h1v16h-1zM258 282h1v16h-1zM269 282h1v16h-1zM280 282h1v16h-1zM291 282h1v16h-1zM313 282h1v16h-1zM346 282h1v16h-1zM357 282h1v16h-1zM380 282h1v16h-1zM391 282h1v16h-1zM568 282h1v16h-1zM579 282h1v16h-1zM613 282h1v16h-1zM624 282h1v16h-1zM668 282h1v16h-1zM690 282h1v16h-1zM701 282h1v16h-1zM712 282h1v16h-1zM746 282h1v16h-1zM757 282h1v16h-1zM801 282h1v16h-1zM846 282h1v16h-1zM857 282h1v16h-1zM879 282h1v16h-1zM901 282h1v16h-1zM923 282h1v16h-1zM957 282h1v16h-1zM247 317h34v1h-34zM280 302h22v2h-22zM302 317h145v1h-145zM446 302h11v2h-11zM457 317h23v1h-23zM479 302h12v2h-12zM491 317h56v1h-56zM546 302h22v2h-22zM568 317h35v1h-35zM602 302h55v2h-55zM657 317h34v1h-34zM690 302h11v2h-11zM701 317h68v1h-68zM768 302h11v2h-11zM779 317h12v1h-12zM790 302h11v2h-11zM801 317h12v1h-12zM812 302h11v2h-11zM823 317h79v1h-79zM901 302h11v2h-11zM912 317h34v1h-34zM945 302h12v2h-12zM280 302h1v16h-1zM302 302h1v16h-1zM446 302h1v16h-1zM457 302h1v16h-1zM479 302h1v16h-1zM491 302h1v16h-1zM546 302h1v16h-1zM568 302h1v16h-1zM602 302h1v16h-1zM657 302h1v16h-1zM690 302h1v16h-1zM701 302h1v16h-1zM768 302h1v16h-1zM779 302h1v16h-1zM790 302h1v16h-1zM801 302h1v16h-1zM812 302h1v16h-1zM823 302h1v16h-1zM901 302h1v16h-1zM912 302h1v16h-1zM945 302h1v16h-1zM957 302h1v16h-1zM247 337h23v1h-23zM269 322h11v2h-11zM280 337h245v1h-245zM524 322h11v2h-11zM535 337h34v1h-34zM568 322h11v2h-11zM579 337h201v1h-201zM779 322h11v2h-11zM790 337h34v1h-34zM823 322h11v2h-11zM834 337h112v1h-112zM945 322h12v2h-12zM269 322h1v16h-1zM280 322h1v16h-1zM524 322h1v16h-1zM535 322h1v16h-1zM568 322h1v16h-1zM579 322h1v16h-1zM779 322h1v16h-1zM790 322h1v16h-1zM823 322h1v16h-1zM834 322h1v16h-1zM945 322h1v16h-1zM957 322h1v16h-1zM247 342h11v2h-11zM258 357h23v1h-23zM280 342h22v2h-22zM302 357h45v1h-45zM346 342h23v2h-23zM369 357h134v1h-134zM502 342h11v2h-11zM513 357h112v1h-112zM624 342h33v2h-33zM657 357h68v1h-68zM724 342h11v2h-11zM735 357h34v1h-34zM768 342h22v2h-22zM790 357h168v1h-168zM258 342h1v16h-1zM280 342h1v16h-1zM302 342h1v16h-1zM346 342h1v16h-1zM369 342h1v16h-1zM502 342h1v16h-1zM513 342h1v16h-1zM624 342h1v16h-1zM657 342h1v16h-1zM724 342h1v16h-1zM735 342h1v16h-1zM768 342h1v16h-1zM790 342h1v16h-1zM957 342h1v16h-1zM247 377h23v1h-23zM269 362h22v2h-22zM291 377h101v1h-101zM391 362h11v2h-11zM402 377h201v1h-201zM602 362h11v2h-11zM613 377h12v1h-12zM624 362h22v2h-22zM646 377h45v1h-45zM690 362h22v2h-22zM712 377h35v1h-35zM746 362h11v2h-11zM757 377h23v1h-23zM779 362h11v2h-11zM790 377h168v1h-168zM269 362h1v16h-1zM291 362h1v16h-1zM391 362h1v16h-1zM402 362h1v16h-1zM602 362h1v16h-1zM613 362h1v16h-1zM624 362h1v16h-1zM646 362h1v16h-1zM690 362h1v16h-1zM712 362h1v16h-1zM746 362h1v16h-1zM757 362h1v16h-1zM779 362h1v16h-1zM790 362h1v16h-1zM247 397h45v1h-45zM291 382h11v2h-11zM302 397h12v1h-12zM313 382h11v2h-11zM324 397h23v1h-23zM346 382h11v2h-11zM357 397h13v1h-13zM369 382h11v2h-11zM380 397h23v1h-23zM402 382h11v2h-11zM413 397h34v1h-34zM446 382h11v2h-11zM457 397h35v1h-35zM491 382h11v2h-11zM502 397h23v1h-23zM524 382h11v2h-11zM535 397h23v1h-23zM557 382h11v2h-11zM568 397h35v1h-35zM602 382h11v2h-11zM613 397h89v1h-89zM701 382h23v2h-23zM724 397h12v1h-12zM735 382h22v2h-22zM757 397h45v1h-45zM801 382h11v2h-11zM812 397h12v1h-12zM823 382h11v2h-11zM834 397h24v1h-24zM857 382h11v2h-11zM868 397h56v1h-56zM923 382h11v2h-11zM934 397h24v1h-24zM247 382h1v16h-1zM291 382h1v16h-1zM302 382h1v16h-1zM313 382h1v16h-1zM324 382h1v16h-1zM346 382h1v16h-1zM357 382h1v16h-1zM369 382h1v16h-1zM380 382h1v16h-1zM402 382h1v16h-1zM413 382h1v16h-1zM446 382h1v16h-1zM457 382h1v16h-1zM491 382h1v16h-1zM502 382h1v16h-1zM524 382h1v16h-1zM535 382h1v16h-1zM557 382h1v16h-1zM568 382h1v16h-1zM602 382h1v16h-1zM613 382h1v16h-1zM701 382h1v16h-1zM724 382h1v16h-1zM735 382h1v16h-1zM757 382h1v16h-1zM801 382h1v16h-1zM812 382h1v16h-1zM823 382h1v16h-1zM834 382h1v16h-1zM857 382h1v16h-1zM868 382h1v16h-1zM923 382h1v16h-1zM934 382h1v16h-1zM250 223h6v1h-6zM250 237h6v1h-6zM261 223h6v1h-6zM261 237h6v1h-6zM272 223h6v1h-6zM272 237h6v1h-6zM283 223h6v1h-6zM283 237h6v1h-6zM294 223h6v1h-6zM294 237h6v1h-6zM305 223h6v1h-6zM305 237h6v1h-6zM316 223h6v1h-6zM316 237h6v1h-6zM327 223h17v1h-17zM327 237h17v1h-17zM349 223h6v1h-6zM349 237h6v1h-6zM360 223h7v1h-7zM360 237h7v1h-7zM372 223h6v1h-6zM372 237h6v1h-6zM383 223h6v1h-6zM383 237h6v1h-6zM394 223h6v1h-6zM394 237h6v1h-6zM405 223h6v1h-6zM405 237h6v1h-6zM416 223h17v1h-17zM416 237h17v1h-17zM438 223h6v1h-6zM438 237h6v1h-6zM449 223h6v1h-6zM449 237h6v1h-6zM460 223h6v1h-6zM460 237h6v1h-6zM471 223h6v1h-6zM471 237h6v1h-6zM482 223h7v1h-7zM482 237h7v1h-7zM494 223h6v1h-6zM494 237h6v1h-6zM505 223h6v1h-6zM505 237h6v1h-6zM516 223h6v1h-6zM516 237h6v1h-6zM527 223h6v1h-6zM527 237h6v1h-6zM538 223h6v1h-6zM538 237h6v1h-6zM549 223h6v1h-6zM549 237h6v1h-6zM560 223h6v1h-6zM560 237h6v1h-6zM571 223h6v1h-6zM571 237h6v1h-6zM582 223h6v1h-6zM582 237h6v1h-6zM593 223h7v1h-7zM593 237h7v1h-7zM605 223h6v1h-6zM605 237h6v1h-6zM616 223h6v1h-6zM616 237h6v1h-6zM627 223h17v1h-17zM627 237h17v1h-17zM649 223h6v1h-6zM649 237h6v1h-6zM660 223h6v1h-6zM660 237h6v1h-6zM671 223h6v1h-6zM671 237h6v1h-6zM682 223h6v1h-6zM682 237h6v1h-6zM693 223h6v1h-6zM693 237h6v1h-6zM704 223h6v1h-6zM704 237h6v1h-6zM715 223h7v1h-7zM715 237h7v1h-7zM727 223h6v1h-6zM727 237h6v1h-6zM738 223h6v1h-6zM738 237h6v1h-6zM749 223h6v1h-6zM749 237h6v1h-6zM760 223h6v1h-6zM760 237h6v1h-6zM771 223h6v1h-6zM771 237h6v1h-6zM782 223h6v1h-6zM782 237h6v1h-6zM793 223h6v1h-6zM793 237h6v1h-6zM804 223h6v1h-6zM804 237h6v1h-6zM815 223h6v1h-6zM815 237h6v1h-6zM826 223h6v1h-6zM826 237h6v1h-6zM837 223h7v1h-7zM837 237h7v1h-7zM849 223h6v1h-6zM849 237h6v1h-6zM860 223h6v1h-6zM860 237h6v1h-6zM871 223h6v1h-6zM871 237h6v1h-6zM882 223h17v1h-17zM882 237h17v1h-17zM904 223h6v1h-6zM904 237h6v1h-6zM915 223h6v1h-6zM915 237h6v1h-6zM926 223h6v1h-6zM926 237h6v1h-6zM937 223h6v1h-6zM937 237h6v1h-6zM948 223h7v1h-7zM948 237h7v1h-7zM247 229h1v3h-1zM248 226h1v3h-1zM248 232h1v3h-1zM249 224h1v2h-1zM249 235h1v2h-1zM258 229h1v3h-1zM259 226h1v3h-1zM259 232h1v3h-1zM257 226h1v3h-1zM257 232h1v3h-1zM260 224h1v2h-1zM260 235h1v2h-1zM256 224h1v2h-1zM256 235h1v2h-1zM269 229h1v3h-1zM270 226h1v3h-1zM270 232h1v3h-1zM268 226h1v3h-1zM268 232h1v3h-1zM271 224h1v2h-1zM271 235h1v2h-1zM267 224h1v2h-1zM267 235h1v2h-1zM280 229h1v3h-1zM281 226h1v3h-1zM281 232h1v3h-1zM279 226h1v3h-1zM279 232h1v3h-1zM282 224h1v2h-1zM282 235h1v2h-1zM278 224h1v2h-1zM278 235h1v2h-1zM291 229h1v3h-1zM292 226h1v3h-1zM292 232h1v3h-1zM290 226h1v3h-1zM290 232h1v3h-1zM293 224h1v2h-1zM293 235h1v2h-1zM289 224h1v2h-1zM289 235h1v2h-1zM302 229h1v3h-1zM303 226h1v3h-1zM303 232h1v3h-1zM301 226h1v3h-1zM301 232h1v3h-1zM304 224h1v2h-1zM304 235h1v2h-1zM300 224h1v2h-1zM300 235h1v2h-1zM313 229h1v3h-1zM314 226h1v3h-1zM314 232h1v3h-1zM312 226h1v3h-1zM312 232h1v3h-1zM315 224h1v2h-1zM315 235h1v2h-1zM311 224h1v2h-1zM311 235h1v2h-1zM324 229h1v3h-1zM325 226h1v3h-1zM325 232h1v3h-1zM323 226h1v3h-1zM323 232h1v3h-1zM326 224h1v2h-1zM326 235h1v2h-1zM322 224h1v2h-1zM322 235h1v2h-1zM346 229h1v3h-1zM347 226h1v3h-1zM347 232h1v3h-1zM345 226h1v3h-1zM345 232h1v3h-1zM348 224h1v2h-1zM348 235h1v2h-1zM344 224h1v2h-1zM344 235h1v2h-1zM357 229h1v3h-1zM358 226h1v3h-1zM358 232h1v3h-1zM356 226h1v3h-1zM356 232h1v3h-1zM359 224h1v2h-1zM359 235h1v2h-1zM355 224h1v2h-1zM355 235h1v2h-1zM369 229h1v3h-1zM370 226h1v3h-1zM370 232h1v3h-1zM368 226h1v3h-1zM368 232h1v3h-1zM371 224h1v2h-1zM371 235h1v2h-1zM367 224h1v2h-1zM367 235h1v2h-1zM380 229h1v3h-1zM381 226h1v3h-1zM381 232h1v3h-1zM379 226h1v3h-1zM379 232h1v3h-1zM382 224h1v2h-1zM382 235h1v2h-1zM378 224h1v2h-1zM378 235h1v2h-1zM391 229h1v3h-1zM392 226h1v3h-1zM392 232h1v3h-1zM390 226h1v3h-1zM390 232h1v3h-1zM393 224h1v2h-1zM393 235h1v2h-1zM389 224h1v2h-1zM389 235h1v2h-1zM402 229h1v3h-1zM403 226h1v3h-1zM403 232h1v3h-1zM401 226h1v3h-1zM401 232h1v3h-1zM404 224h1v2h-1zM404 235h1v2h-1zM400 224h1v2h-1zM400 235h1v2h-1zM413 229h1v3h-1zM414 226h1v3h-1zM414 232h1v3h-1zM412 226h1v3h-1zM412 232h1v3h-1zM415 224h1v2h-1zM415 235h1v2h-1zM411 224h1v2h-1zM411 235h1v2h-1zM435 229h1v3h-1zM436 226h1v3h-1zM436 232h1v3h-1zM434 226h1v3h-1zM434 232h1v3h-1zM437 224h1v2h-1zM437 235h1v2h-1zM433 224h1v2h-1zM433 235h1v2h-1zM446 229h1v3h-1zM447 226h1v3h-1zM447 232h1v3h-1zM445 226h1v3h-1zM445 232h1v3h-1zM448 224h1v2h-1zM448 235h1v2h-1zM444 224h1v2h-1zM444 235h1v2h-1zM457 229h1v3h-1zM458 226h1v3h-1zM458 232h1v3h-1zM456 226h1v3h-1zM456 232h1v3h-1zM459 224h1v2h-1zM459 235h1v2h-1zM455 224h1v2h-1zM455 235h1v2h-1zM468 229h1v3h-1zM469 226h1v3h-1zM469 232h1v3h-1zM467 226h1v3h-1zM467 232h1v3h-1zM470 224h1v2h-1zM470 235h1v2h-1zM466 224h1v2h-1zM466 235h1v2h-1zM479 229h1v3h-1zM480 226h1v3h-1zM480 232h1v3h-1zM478 226h1v3h-1zM478 232h1v3h-1zM481 224h1v2h-1zM481 235h1v2h-1zM477 224h1v2h-1zM477 235h1v2h-1zM491 229h1v3h-1zM492 226h1v3h-1zM492 232h1v3h-1zM490 226h1v3h-1zM490 232h1v3h-1zM493 224h1v2h-1zM493 235h1v2h-1zM489 224h1v2h-1zM489 235h1v2h-1zM502 229h1v3h-1zM503 226h1v3h-1zM503 232h1v3h-1zM501 226h1v3h-1zM501 232h1v3h-1zM504 224h1v2h-1zM504 235h1v2h-1zM500 224h1v2h-1zM500 235h1v2h-1zM513 229h1v3h-1zM514 226h1v3h-1zM514 232h1v3h-1zM512 226h1v3h-1zM512 232h1v3h-1zM515 224h1v2h-1zM515 235h1v2h-1zM511 224h1v2h-1zM511 235h1v2h-1zM524 229h1v3h-1zM525 226h1v3h-1zM525 232h1v3h-1zM523 226h1v3h-1zM523 232h1v3h-1zM526 224h1v2h-1zM526 235h1v2h-1zM522 224h1v2h-1zM522 235h1v2h-1zM535 229h1v3h-1zM536 226h1v3h-1zM536 232h1v3h-1zM534 226h1v3h-1zM534 232h1v3h-1zM537 224h1v2h-1zM537 235h1v2h-1zM533 224h1v2h-1zM533 235h1v2h-1zM546 229h1v3h-1zM547 226h1v3h-1zM547 232h1v3h-1zM545 226h1v3h-1zM545 232h1v3h-1zM548 224h1v2h-1zM548 235h1v2h-1zM544 224h1v2h-1zM544 235h1v2h-1zM557 229h1v3h-1zM558 226h1v3h-1zM558 232h1v3h-1zM556 226h1v3h-1zM556 232h1v3h-1zM559 224h1v2h-1zM559 235h1v2h-1zM555 224h1v2h-1zM555 235h1v2h-1zM568 229h1v3h-1zM569 226h1v3h-1zM569 232h1v3h-1zM567 226h1v3h-1zM567 232h1v3h-1zM570 224h1v2h-1zM570 235h1v2h-1zM566 224h1v2h-1zM566 235h1v2h-1zM579 229h1v3h-1zM580 226h1v3h-1zM580 232h1v3h-1zM578 226h1v3h-1zM578 232h1v3h-1zM581 224h1v2h-1zM581 235h1v2h-1zM577 224h1v2h-1zM577 235h1v2h-1zM590 229h1v3h-1zM591 226h1v3h-1zM591 232h1v3h-1zM589 226h1v3h-1zM589 232h1v3h-1zM592 224h1v2h-1zM592 235h1v2h-1zM588 224h1v2h-1zM588 235h1v2h-1zM602 229h1v3h-1zM603 226h1v3h-1zM603 232h1v3h-1zM601 226h1v3h-1zM601 232h1v3h-1zM604 224h1v2h-1zM604 235h1v2h-1zM600 224h1v2h-1zM600 235h1v2h-1zM613 229h1v3h-1zM614 226h1v3h-1zM614 232h1v3h-1zM612 226h1v3h-1zM612 232h1v3h-1zM615 224h1v2h-1zM615 235h1v2h-1zM611 224h1v2h-1zM611 235h1v2h-1zM624 229h1v3h-1zM625 226h1v3h-1zM625 232h1v3h-1zM623 226h1v3h-1zM623 232h1v3h-1zM626 224h1v2h-1zM626 235h1v2h-1zM622 224h1v2h-1zM622 235h1v2h-1zM646 229h1v3h-1zM647 226h1v3h-1zM647 232h1v3h-1zM645 226h1v3h-1zM645 232h1v3h-1zM648 224h1v2h-1zM648 235h1v2h-1zM644 224h1v2h-1zM644 235h1v2h-1zM657 229h1v3h-1zM658 226h1v3h-1zM658 232h1v3h-1zM656 226h1v3h-1zM656 232h1v3h-1zM659 224h1v2h-1zM659 235h1v2h-1zM655 224h1v2h-1zM655 235h1v2h-1zM668 229h1v3h-1zM669 226h1v3h-1zM669 232h1v3h-1zM667 226h1v3h-1zM667 232h1v3h-1zM670 224h1v2h-1zM670 235h1v2h-1zM666 224h1v2h-1zM666 235h1v2h-1zM679 229h1v3h-1zM680 226h1v3h-1zM680 232h1v3h-1zM678 226h1v3h-1zM678 232h1v3h-1zM681 224h1v2h-1zM681 235h1v2h-1zM677 224h1v2h-1zM677 235h1v2h-1zM690 229h1v3h-1zM691 226h1v3h-1zM691 232h1v3h-1zM689 226h1v3h-1zM689 232h1v3h-1zM692 224h1v2h-1zM692 235h1v2h-1zM688 224h1v2h-1zM688 235h1v2h-1zM701 229h1v3h-1zM702 226h1v3h-1zM702 232h1v3h-1zM700 226h1v3h-1zM700 232h1v3h-1zM703 224h1v2h-1zM703 235h1v2h-1zM699 224h1v2h-1zM699 235h1v2h-1zM712 229h1v3h-1zM713 226h1v3h-1zM713 232h1v3h-1zM711 226h1v3h-1zM711 232h1v3h-1zM714 224h1v2h-1zM714 235h1v2h-1zM710 224h1v2h-1zM710 235h1v2h-1zM724 229h1v3h-1zM725 226h1v3h-1zM725 232h1v3h-1zM723 226h1v3h-1zM723 232h1v3h-1zM726 224h1v2h-1zM726 235h1v2h-1zM722 224h1v2h-1zM722 235h1v2h-1zM735 229h1v3h-1zM736 226h1v3h-1zM736 232h1v3h-1zM734 226h1v3h-1zM734 232h1v3h-1zM737 224h1v2h-1zM737 235h1v2h-1zM733 224h1v2h-1zM733 235h1v2h-1zM746 229h1v3h-1zM747 226h1v3h-1zM747 232h1v3h-1zM745 226h1v3h-1zM745 232h1v3h-1zM748 224h1v2h-1zM748 235h1v2h-1zM744 224h1v2h-1zM744 235h1v2h-1zM757 229h1v3h-1zM758 226h1v3h-1zM758 232h1v3h-1zM756 226h1v3h-1zM756 232h1v3h-1zM759 224h1v2h-1zM759 235h1v2h-1zM755 224h1v2h-1zM755 235h1v2h-1zM768 229h1v3h-1zM769 226h1v3h-1zM769 232h1v3h-1zM767 226h1v3h-1zM767 232h1v3h-1zM770 224h1v2h-1zM770 235h1v2h-1zM766 224h1v2h-1zM766 235h1v2h-1zM779 229h1v3h-1zM780 226h1v3h-1zM780 232h1v3h-1zM778 226h1v3h-1zM778 232h1v3h-1zM781 224h1v2h-1zM781 235h1v2h-1zM777 224h1v2h-1zM777 235h1v2h-1zM790 229h1v3h-1zM791 226h1v3h-1zM791 232h1v3h-1zM789 226h1v3h-1zM789 232h1v3h-1zM792 224h1v2h-1zM792 235h1v2h-1zM788 224h1v2h-1zM788 235h1v2h-1zM801 229h1v3h-1zM802 226h1v3h-1zM802 232h1v3h-1zM800 226h1v3h-1zM800 232h1v3h-1zM803 224h1v2h-1zM803 235h1v2h-1zM799 224h1v2h-1zM799 235h1v2h-1zM812 229h1v3h-1zM813 226h1v3h-1zM813 232h1v3h-1zM811 226h1v3h-1zM811 232h1v3h-1zM814 224h1v2h-1zM814 235h1v2h-1zM810 224h1v2h-1zM810 235h1v2h-1zM823 229h1v3h-1zM824 226h1v3h-1zM824 232h1v3h-1zM822 226h1v3h-1zM822 232h1v3h-1zM825 224h1v2h-1zM825 235h1v2h-1zM821 224h1v2h-1zM821 235h1v2h-1zM834 229h1v3h-1zM835 226h1v3h-1zM835 232h1v3h-1zM833 226h1v3h-1zM833 232h1v3h-1zM836 224h1v2h-1zM836 235h1v2h-1zM832 224h1v2h-1zM832 235h1v2h-1zM846 229h1v3h-1zM847 226h1v3h-1zM847 232h1v3h-1zM845 226h1v3h-1zM845 232h1v3h-1zM848 224h1v2h-1zM848 235h1v2h-1zM844 224h1v2h-1zM844 235h1v2h-1zM857 229h1v3h-1zM858 226h1v3h-1zM858 232h1v3h-1zM856 226h1v3h-1zM856 232h1v3h-1zM859 224h1v2h-1zM859 235h1v2h-1zM855 224h1v2h-1zM855 235h1v2h-1zM868 229h1v3h-1zM869 226h1v3h-1zM869 232h1v3h-1zM867 226h1v3h-1zM867 232h1v3h-1zM870 224h1v2h-1zM870 235h1v2h-1zM866 224h1v2h-1zM866 235h1v2h-1zM879 229h1v3h-1zM880 226h1v3h-1zM880 232h1v3h-1zM878 226h1v3h-1zM878 232h1v3h-1zM881 224h1v2h-1zM881 235h1v2h-1zM877 224h1v2h-1zM877 235h1v2h-1zM901 229h1v3h-1zM902 226h1v3h-1zM902 232h1v3h-1zM900 226h1v3h-1zM900 232h1v3h-1zM903 224h1v2h-1zM903 235h1v2h-1zM899 224h1v2h-1zM899 235h1v2h-1zM912 229h1v3h-1zM913 226h1v3h-1zM913 232h1v3h-1zM911 226h1v3h-1zM911 232h1v3h-1zM914 224h1v2h-1zM914 235h1v2h-1zM910 224h1v2h-1zM910 235h1v2h-1zM923 229h1v3h-1zM924 226h1v3h-1zM924 232h1v3h-1zM922 226h1v3h-1zM922 232h1v3h-1zM925 224h1v2h-1zM925 235h1v2h-1zM921 224h1v2h-1zM921 235h1v2h-1zM934 229h1v3h-1zM935 226h1v3h-1zM935 232h1v3h-1zM933 226h1v3h-1zM933 232h1v3h-1zM936 224h1v2h-1zM936 235h1v2h-1zM932 224h1v2h-1zM932 235h1v2h-1zM945 229h1v3h-1zM946 226h1v3h-1zM946 232h1v3h-1zM944 226h1v3h-1zM944 232h1v3h-1zM947 224h1v2h-1zM947 235h1v2h-1zM943 224h1v2h-1zM943 235h1v2h-1zM957 229h1v3h-1zM956 226h1v3h-1zM956 232h1v3h-1zM955 224h1v2h-1zM955 235h1v2h-1zM250 403h6v1h-6zM250 417h6v1h-6zM261 403h6v1h-6zM261 417h6v1h-6zM272 403h6v1h-6zM272 417h6v1h-6zM283 403h6v1h-6zM283 417h6v1h-6zM294 403h6v1h-6zM294 417h6v1h-6zM305 403h6v1h-6zM305 417h6v1h-6zM316 403h6v1h-6zM316 417h6v1h-6zM327 403h6v1h-6zM327 417h6v1h-6zM338 403h6v1h-6zM338 417h6v1h-6zM349 403h6v1h-6zM349 417h6v1h-6zM360 403h7v1h-7zM360 417h7v1h-7zM372 403h6v1h-6zM372 417h6v1h-6zM383 403h6v1h-6zM383 417h6v1h-6zM394 403h6v1h-6zM394 417h6v1h-6zM405 403h6v1h-6zM405 417h6v1h-6zM416 403h6v1h-6zM416 417h6v1h-6zM427 403h6v1h-6zM427 417h6v1h-6zM438 403h6v1h-6zM438 417h6v1h-6zM449 403h6v1h-6zM449 417h6v1h-6zM460 403h6v1h-6zM460 417h6v1h-6zM471 403h6v1h-6zM471 417h6v1h-6zM482 403h7v1h-7zM482 417h7v1h-7zM494 403h6v1h-6zM494 417h6v1h-6zM505 403h6v1h-6zM505 417h6v1h-6zM516 403h6v1h-6zM516 417h6v1h-6zM527 403h6v1h-6zM527 417h6v1h-6zM538 403h6v1h-6zM538 417h6v1h-6zM549 403h6v1h-6zM549 417h6v1h-6zM560 403h6v1h-6zM560 417h6v1h-6zM571 403h6v1h-6zM571 417h6v1h-6zM582 403h6v1h-6zM582 417h6v1h-6zM593 403h7v1h-7zM593 417h7v1h-7zM605 403h6v1h-6zM605 417h6v1h-6zM616 403h6v1h-6zM616 417h6v1h-6zM627 403h6v1h-6zM627 417h6v1h-6zM638 403h6v1h-6zM638 417h6v1h-6zM649 403h6v1h-6zM649 417h6v1h-6zM660 403h6v1h-6zM660 417h6v1h-6zM671 403h6v1h-6zM671 417h6v1h-6zM682 403h6v1h-6zM682 417h6v1h-6zM693 403h6v1h-6zM693 417h6v1h-6zM704 403h6v1h-6zM704 417h6v1h-6zM715 403h7v1h-7zM715 417h7v1h-7zM727 403h6v1h-6zM727 417h6v1h-6zM738 403h6v1h-6zM738 417h6v1h-6zM749 403h6v1h-6zM749 417h6v1h-6zM760 403h6v1h-6zM760 417h6v1h-6zM771 403h6v1h-6zM771 417h6v1h-6zM782 403h6v1h-6zM782 417h6v1h-6zM793 403h6v1h-6zM793 417h6v1h-6zM804 403h6v1h-6zM804 417h6v1h-6zM815 403h6v1h-6zM815 417h6v1h-6zM826 403h18v1h-18zM826 417h18v1h-18zM849 403h6v1h-6zM849 417h6v1h-6zM860 403h6v1h-6zM860 417h6v1h-6zM871 403h6v1h-6zM871 417h6v1h-6zM882 403h6v1h-6zM882 417h6v1h-6zM893 403h6v1h-6zM893 417h6v1h-6zM904 403h6v1h-6zM904 417h6v1h-6zM915 403h6v1h-6zM915 417h6v1h-6zM926 403h6v1h-6zM926 417h6v1h-6zM937 403h6v1h-6zM937 417h6v1h-6zM948 403h7v1h-7zM948 417h7v1h-7zM247 409h1v3h-1zM248 406h1v3h-1zM248 412h1v3h-1zM249 404h1v2h-1zM249 415h1v2h-1zM258 409h1v3h-1zM259 406h1v3h-1zM259 412h1v3h-1zM257 406h1v3h-1zM257 412h1v3h-1zM260 404h1v2h-1zM260 415h1v2h-1zM256 404h1v2h-1zM256 415h1v2h-1zM269 409h1v3h-1zM270 406h1v3h-1zM270 412h1v3h-1zM268 406h1v3h-1zM268 412h1v3h-1zM271 404h1v2h-1zM271 415h1v2h-1zM267 404h1v2h-1zM267 415h1v2h-1zM280 409h1v3h-1zM281 406h1v3h-1zM281 412h1v3h-1zM279 406h1v3h-1zM279 412h1v3h-1zM282 404h1v2h-1zM282 415h1v2h-1zM278 404h1v2h-1zM278 415h1v2h-1zM291 409h1v3h-1zM292 406h1v3h-1zM292 412h1v3h-1zM290 406h1v3h-1zM290 412h1v3h-1zM293 404h1v2h-1zM293 415h1v2h-1zM289 404h1v2h-1zM289 415h1v2h-1zM302 409h1v3h-1zM303 406h1v3h-1zM303 412h1v3h-1zM301 406h1v3h-1zM301 412h1v3h-1zM304 404h1v2h-1zM304 415h1v2h-1zM300 404h1v2h-1zM300 415h1v2h-1zM313 409h1v3h-1zM314 406h1v3h-1zM314 412h1v3h-1zM312 406h1v3h-1zM312 412h1v3h-1zM315 404h1v2h-1zM315 415h1v2h-1zM311 404h1v2h-1zM311 415h1v2h-1zM324 409h1v3h-1zM325 406h1v3h-1zM325 412h1v3h-1zM323 406h1v3h-1zM323 412h1v3h-1zM326 404h1v2h-1zM326 415h1v2h-1zM322 404h1v2h-1zM322 415h1v2h-1zM335 409h1v3h-1zM336 406h1v3h-1zM336 412h1v3h-1zM334 406h1v3h-1zM334 412h1v3h-1zM337 404h1v2h-1zM337 415h1v2h-1zM333 404h1v2h-1zM333 415h1v2h-1zM346 409h1v3h-1zM347 406h1v3h-1zM347 412h1v3h-1zM345 406h1v3h-1zM345 412h1v3h-1zM348 404h1v2h-1zM348 415h1v2h-1zM344 404h1v2h-1zM344 415h1v2h-1zM357 409h1v3h-1zM358 406h1v3h-1zM358 412h1v3h-1zM356 406h1v3h-1zM356 412h1v3h-1zM359 404h1v2h-1zM359 415h1v2h-1zM355 404h1v2h-1zM355 415h1v2h-1zM369 409h1v3h-1zM370 406h1v3h-1zM370 412h1v3h-1zM368 406h1v3h-1zM368 412h1v3h-1zM371 404h1v2h-1zM371 415h1v2h-1zM367 404h1v2h-1zM367 415h1v2h-1zM380 409h1v3h-1zM381 406h1v3h-1zM381 412h1v3h-1zM379 406h1v3h-1zM379 412h1v3h-1zM382 404h1v2h-1zM382 415h1v2h-1zM378 404h1v2h-1zM378 415h1v2h-1zM391 409h1v3h-1zM392 406h1v3h-1zM392 412h1v3h-1zM390 406h1v3h-1zM390 412h1v3h-1zM393 404h1v2h-1zM393 415h1v2h-1zM389 404h1v2h-1zM389 415h1v2h-1zM402 409h1v3h-1zM403 406h1v3h-1zM403 412h1v3h-1zM401 406h1v3h-1zM401 412h1v3h-1zM404 404h1v2h-1zM404 415h1v2h-1zM400 404h1v2h-1zM400 415h1v2h-1zM413 409h1v3h-1zM414 406h1v3h-1zM414 412h1v3h-1zM412 406h1v3h-1zM412 412h1v3h-1zM415 404h1v2h-1zM415 415h1v2h-1zM411 404h1v2h-1zM411 415h1v2h-1zM424 409h1v3h-1zM425 406h1v3h-1zM425 412h1v3h-1zM423 406h1v3h-1zM423 412h1v3h-1zM426 404h1v2h-1zM426 415h1v2h-1zM422 404h1v2h-1zM422 415h1v2h-1zM435 409h1v3h-1zM436 406h1v3h-1zM436 412h1v3h-1zM434 406h1v3h-1zM434 412h1v3h-1zM437 404h1v2h-1zM437 415h1v2h-1zM433 404h1v2h-1zM433 415h1v2h-1zM446 409h1v3h-1zM447 406h1v3h-1zM447 412h1v3h-1zM445 406h1v3h-1zM445 412h1v3h-1zM448 404h1v2h-1zM448 415h1v2h-1zM444 404h1v2h-1zM444 415h1v2h-1zM457 409h1v3h-1zM458 406h1v3h-1zM458 412h1v3h-1zM456 406h1v3h-1zM456 412h1v3h-1zM459 404h1v2h-1zM459 415h1v2h-1zM455 404h1v2h-1zM455 415h1v2h-1zM468 409h1v3h-1zM469 406h1v3h-1zM469 412h1v3h-1zM467 406h1v3h-1zM467 412h1v3h-1zM470 404h1v2h-1zM470 415h1v2h-1zM466 404h1v2h-1zM466 415h1v2h-1zM479 409h1v3h-1zM480 406h1v3h-1zM480 412h1v3h-1zM478 406h1v3h-1zM478 412h1v3h-1zM481 404h1v2h-1zM481 415h1v2h-1zM477 404h1v2h-1zM477 415h1v2h-1zM491 409h1v3h-1zM492 406h1v3h-1zM492 412h1v3h-1zM490 406h1v3h-1zM490 412h1v3h-1zM493 404h1v2h-1zM493 415h1v2h-1zM489 404h1v2h-1zM489 415h1v2h-1zM502 409h1v3h-1zM503 406h1v3h-1zM503 412h1v3h-1zM501 406h1v3h-1zM501 412h1v3h-1zM504 404h1v2h-1zM504 415h1v2h-1zM500 404h1v2h-1zM500 415h1v2h-1zM513 409h1v3h-1zM514 406h1v3h-1zM514 412h1v3h-1zM512 406h1v3h-1zM512 412h1v3h-1zM515 404h1v2h-1zM515 415h1v2h-1zM511 404h1v2h-1zM511 415h1v2h-1zM524 409h1v3h-1zM525 406h1v3h-1zM525 412h1v3h-1zM523 406h1v3h-1zM523 412h1v3h-1zM526 404h1v2h-1zM526 415h1v2h-1zM522 404h1v2h-1zM522 415h1v2h-1zM535 409h1v3h-1zM536 406h1v3h-1zM536 412h1v3h-1zM534 406h1v3h-1zM534 412h1v3h-1zM537 404h1v2h-1zM537 415h1v2h-1zM533 404h1v2h-1zM533 415h1v2h-1zM546 409h1v3h-1zM547 406h1v3h-1zM547 412h1v3h-1zM545 406h1v3h-1zM545 412h1v3h-1zM548 404h1v2h-1zM548 415h1v2h-1zM544 404h1v2h-1zM544 415h1v2h-1zM557 409h1v3h-1zM558 406h1v3h-1zM558 412h1v3h-1zM556 406h1v3h-1zM556 412h1v3h-1zM559 404h1v2h-1zM559 415h1v2h-1zM555 404h1v2h-1zM555 415h1v2h-1zM568 409h1v3h-1zM569 406h1v3h-1zM569 412h1v3h-1zM567 406h1v3h-1zM567 412h1v3h-1zM570 404h1v2h-1zM570 415h1v2h-1zM566 404h1v2h-1zM566 415h1v2h-1zM579 409h1v3h-1zM580 406h1v3h-1zM580 412h1v3h-1zM578 406h1v3h-1zM578 412h1v3h-1zM581 404h1v2h-1zM581 415h1v2h-1zM577 404h1v2h-1zM577 415h1v2h-1zM590 409h1v3h-1zM591 406h1v3h-1zM591 412h1v3h-1zM589 406h1v3h-1zM589 412h1v3h-1zM592 404h1v2h-1zM592 415h1v2h-1zM588 404h1v2h-1zM588 415h1v2h-1zM602 409h1v3h-1zM603 406h1v3h-1zM603 412h1v3h-1zM601 406h1v3h-1zM601 412h1v3h-1zM604 404h1v2h-1zM604 415h1v2h-1zM600 404h1v2h-1zM600 415h1v2h-1zM613 409h1v3h-1zM614 406h1v3h-1zM614 412h1v3h-1zM612 406h1v3h-1zM612 412h1v3h-1zM615 404h1v2h-1zM615 415h1v2h-1zM611 404h1v2h-1zM611 415h1v2h-1zM624 409h1v3h-1zM625 406h1v3h-1zM625 412h1v3h-1zM623 406h1v3h-1zM623 412h1v3h-1zM626 404h1v2h-1zM626 415h1v2h-1zM622 404h1v2h-1zM622 415h1v2h-1zM635 409h1v3h-1zM636 406h1v3h-1zM636 412h1v3h-1zM634 406h1v3h-1zM634 412h1v3h-1zM637 404h1v2h-1zM637 415h1v2h-1zM633 404h1v2h-1zM633 415h1v2h-1zM646 409h1v3h-1zM647 406h1v3h-1zM647 412h1v3h-1zM645 406h1v3h-1zM645 412h1v3h-1zM648 404h1v2h-1zM648 415h1v2h-1zM644 404h1v2h-1zM644 415h1v2h-1zM657 409h1v3h-1zM658 406h1v3h-1zM658 412h1v3h-1zM656 406h1v3h-1zM656 412h1v3h-1zM659 404h1v2h-1zM659 415h1v2h-1zM655 404h1v2h-1zM655 415h1v2h-1zM668 409h1v3h-1zM669 406h1v3h-1zM669 412h1v3h-1zM667 406h1v3h-1zM667 412h1v3h-1zM670 404h1v2h-1zM670 415h1v2h-1zM666 404h1v2h-1zM666 415h1v2h-1zM679 409h1v3h-1zM680 406h1v3h-1zM680 412h1v3h-1zM678 406h1v3h-1zM678 412h1v3h-1zM681 404h1v2h-1zM681 415h1v2h-1zM677 404h1v2h-1zM677 415h1v2h-1zM690 409h1v3h-1zM691 406h1v3h-1zM691 412h1v3h-1zM689 406h1v3h-1zM689 412h1v3h-1zM692 404h1v2h-1zM692 415h1v2h-1zM688 404h1v2h-1zM688 415h1v2h-1zM701 409h1v3h-1zM702 406h1v3h-1zM702 412h1v3h-1zM700 406h1v3h-1zM700 412h1v3h-1zM703 404h1v2h-1zM703 415h1v2h-1zM699 404h1v2h-1zM699 415h1v2h-1zM712 409h1v3h-1zM713 406h1v3h-1zM713 412h1v3h-1zM711 406h1v3h-1zM711 412h1v3h-1zM714 404h1v2h-1zM714 415h1v2h-1zM710 404h1v2h-1zM710 415h1v2h-1zM724 409h1v3h-1zM725 406h1v3h-1zM725 412h1v3h-1zM723 406h1v3h-1zM723 412h1v3h-1zM726 404h1v2h-1zM726 415h1v2h-1zM722 404h1v2h-1zM722 415h1v2h-1zM735 409h1v3h-1zM736 406h1v3h-1zM736 412h1v3h-1zM734 406h1v3h-1zM734 412h1v3h-1zM737 404h1v2h-1zM737 415h1v2h-1zM733 404h1v2h-1zM733 415h1v2h-1zM746 409h1v3h-1zM747 406h1v3h-1zM747 412h1v3h-1zM745 406h1v3h-1zM745 412h1v3h-1zM748 404h1v2h-1zM748 415h1v2h-1zM744 404h1v2h-1zM744 415h1v2h-1zM757 409h1v3h-1zM758 406h1v3h-1zM758 412h1v3h-1zM756 406h1v3h-1zM756 412h1v3h-1zM759 404h1v2h-1zM759 415h1v2h-1zM755 404h1v2h-1zM755 415h1v2h-1zM768 409h1v3h-1zM769 406h1v3h-1zM769 412h1v3h-1zM767 406h1v3h-1zM767 412h1v3h-1zM770 404h1v2h-1zM770 415h1v2h-1zM766 404h1v2h-1zM766 415h1v2h-1zM779 409h1v3h-1zM780 406h1v3h-1zM780 412h1v3h-1zM778 406h1v3h-1zM778 412h1v3h-1zM781 404h1v2h-1zM781 415h1v2h-1zM777 404h1v2h-1zM777 415h1v2h-1zM790 409h1v3h-1zM791 406h1v3h-1zM791 412h1v3h-1zM789 406h1v3h-1zM789 412h1v3h-1zM792 404h1v2h-1zM792 415h1v2h-1zM788 404h1v2h-1zM788 415h1v2h-1zM801 409h1v3h-1zM802 406h1v3h-1zM802 412h1v3h-1zM800 406h1v3h-1zM800 412h1v3h-1zM803 404h1v2h-1zM803 415h1v2h-1zM799 404h1v2h-1zM799 415h1v2h-1zM812 409h1v3h-1zM813 406h1v3h-1zM813 412h1v3h-1zM811 406h1v3h-1zM811 412h1v3h-1zM814 404h1v2h-1zM814 415h1v2h-1zM810 404h1v2h-1zM810 415h1v2h-1zM823 409h1v3h-1zM824 406h1v3h-1zM824 412h1v3h-1zM822 406h1v3h-1zM822 412h1v3h-1zM825 404h1v2h-1zM825 415h1v2h-1zM821 404h1v2h-1zM821 415h1v2h-1zM846 409h1v3h-1zM847 406h1v3h-1zM847 412h1v3h-1zM845 406h1v3h-1zM845 412h1v3h-1zM848 404h1v2h-1zM848 415h1v2h-1zM844 404h1v2h-1zM844 415h1v2h-1zM857 409h1v3h-1zM858 406h1v3h-1zM858 412h1v3h-1zM856 406h1v3h-1zM856 412h1v3h-1zM859 404h1v2h-1zM859 415h1v2h-1zM855 404h1v2h-1zM855 415h1v2h-1zM868 409h1v3h-1zM869 406h1v3h-1zM869 412h1v3h-1zM867 406h1v3h-1zM867 412h1v3h-1zM870 404h1v2h-1zM870 415h1v2h-1zM866 404h1v2h-1zM866 415h1v2h-1zM879 409h1v3h-1zM880 406h1v3h-1zM880 412h1v3h-1zM878 406h1v3h-1zM878 412h1v3h-1zM881 404h1v2h-1zM881 415h1v2h-1zM877 404h1v2h-1zM877 415h1v2h-1zM890 409h1v3h-1zM891 406h1v3h-1zM891 412h1v3h-1zM889 406h1v3h-1zM889 412h1v3h-1zM892 404h1v2h-1zM892 415h1v2h-1zM888 404h1v2h-1zM888 415h1v2h-1zM901 409h1v3h-1zM902 406h1v3h-1zM902 412h1v3h-1zM900 406h1v3h-1zM900 412h1v3h-1zM903 404h1v2h-1zM903 415h1v2h-1zM899 404h1v2h-1zM899 415h1v2h-1zM912 409h1v3h-1zM913 406h1v3h-1zM913 412h1v3h-1zM911 406h1v3h-1zM911 412h1v3h-1zM914 404h1v2h-1zM914 415h1v2h-1zM910 404h1v2h-1zM910 415h1v2h-1zM923 409h1v3h-1zM924 406h1v3h-1zM924 412h1v3h-1zM922 406h1v3h-1zM922 412h1v3h-1zM925 404h1v2h-1zM925 415h1v2h-1zM921 404h1v2h-1zM921 415h1v2h-1zM934 409h1v3h-1zM935 406h1v3h-1zM935 412h1v3h-1zM933 406h1v3h-1zM933 412h1v3h-1zM936 404h1v2h-1zM936 415h1v2h-1zM932 404h1v2h-1zM932 415h1v2h-1zM945 409h1v3h-1zM946 406h1v3h-1zM946 412h1v3h-1zM944 406h1v3h-1zM944 412h1v3h-1zM947 404h1v2h-1zM947 415h1v2h-1zM943 404h1v2h-1zM943 415h1v2h-1zM957 409h1v3h-1zM956 406h1v3h-1zM956 412h1v3h-1zM955 404h1v2h-1zM955 415h1v2h-1z" fill="#f00"/></svg>
<div style="left:435px;top:221px;width:1px;height:199px;background:#000;"></div>
<div style="left:701px;top:221px;width:1px;height:199px;background:#000;"></div>
<div style="left:960px;top:175px;width:16px;height:16px;background:#c6c6c6;"></div>
<div style="left:960px;top:190px;width:16px;height:1px;background:#000;"></div>
<div style="left:975px;top:175px;width:1px;height:16px;background:#000;"></div>
<div style="left:961px;top:176px;width:14px;height:1px;background:#fff;"></div>
<div style="left:961px;top:176px;width:1px;height:14px;background:#fff;"></div>
<div style="left:961px;top:189px;width:14px;height:1px;background:#868686;"></div>
<div style="left:974px;top:176px;width:1px;height:14px;background:#868686;"></div>
<svg style="left:964px;top:181px" width="7" height="4" viewBox="0 0 7 4" shape-rendering="crispEdges"><g fill="#000"><rect x="3" y="0" width="1" height="1"/><rect x="2" y="1" width="3" height="1"/><rect x="1" y="2" width="5" height="1"/><rect x="0" y="3" width="7" height="1"/></g></svg>
<div style="left:960px;top:191px;width:16px;height:118px;background:#c6c6c6;"></div>
<div style="left:960px;top:308px;width:16px;height:1px;background:#000;"></div>
<div style="left:975px;top:191px;width:1px;height:118px;background:#000;"></div>
<div style="left:961px;top:192px;width:14px;height:1px;background:#fff;"></div>
<div style="left:961px;top:192px;width:1px;height:116px;background:#fff;"></div>
<div style="left:961px;top:307px;width:14px;height:1px;background:#868686;"></div>
<div style="left:974px;top:192px;width:1px;height:116px;background:#868686;"></div>
<svg style="left:960px;top:309px" width="16" height="95" viewBox="0 0 16 95" shape-rendering="crispEdges"><defs><pattern id="p960_309" width="2" height="2" patternUnits="userSpaceOnUse" x="1"><rect width="2" height="2" fill="#c6c6c6"/><rect width="1" height="1" fill="#fff"/><rect x="1" y="1" width="1" height="1" fill="#fff"/></pattern></defs><rect width="16" height="95" fill="url(#p960_309)"/></svg>
<div style="left:960px;top:404px;width:16px;height:16px;background:#c6c6c6;"></div>
<div style="left:960px;top:419px;width:16px;height:1px;background:#000;"></div>
<div style="left:975px;top:404px;width:1px;height:16px;background:#000;"></div>
<div style="left:961px;top:405px;width:14px;height:1px;background:#fff;"></div>
<div style="left:961px;top:405px;width:1px;height:14px;background:#fff;"></div>
<div style="left:961px;top:418px;width:14px;height:1px;background:#868686;"></div>
<div style="left:974px;top:405px;width:1px;height:14px;background:#868686;"></div>
<svg style="left:964px;top:410px" width="7" height="4" viewBox="0 0 7 4" shape-rendering="crispEdges"><g fill="#000"><rect x="0" y="0" width="7" height="1"/><rect x="1" y="1" width="5" height="1"/><rect x="2" y="2" width="3" height="1"/><rect x="3" y="3" width="1" height="1"/></g></svg>
<div style="left:15px;top:420px;width:16px;height:16px;background:#c6c6c6;"></div>
<div style="left:15px;top:435px;width:16px;height:1px;background:#000;"></div>
<div style="left:30px;top:420px;width:1px;height:16px;background:#000;"></div>
<div style="left:16px;top:421px;width:14px;height:1px;background:#fff;"></div>
<div style="left:16px;top:421px;width:1px;height:14px;background:#fff;"></div>
<div style="left:16px;top:434px;width:14px;height:1px;background:#868686;"></div>
<div style="left:29px;top:421px;width:1px;height:14px;background:#868686;"></div>
<svg style="left:20px;top:424px" width="4" height="7" viewBox="0 0 4 7" shape-rendering="crispEdges"><g fill="#000"><rect x="0" y="3" width="1" height="1"/><rect x="1" y="2" width="1" height="3"/><rect x="2" y="1" width="1" height="5"/><rect x="3" y="0" width="1" height="7"/></g></svg>
<svg style="left:31px;top:420px" width="207" height="16" viewBox="0 0 207 16" shape-rendering="crispEdges"><defs><pattern id="p31_420" width="2" height="2" patternUnits="userSpaceOnUse" x="1"><rect width="2" height="2" fill="#c6c6c6"/><rect width="1" height="1" fill="#fff"/><rect x="1" y="1" width="1" height="1" fill="#fff"/></pattern></defs><rect width="207" height="16" fill="url(#p31_420)"/></svg>
<div style="left:238px;top:420px;width:457px;height:16px;background:#c6c6c6;"></div>
<div style="left:238px;top:435px;width:457px;height:1px;background:#000;"></div>
<div style="left:694px;top:420px;width:1px;height:16px;background:#000;"></div>
<div style="left:239px;top:421px;width:455px;height:1px;background:#fff;"></div>
<div style="left:239px;top:421px;width:1px;height:14px;background:#fff;"></div>
<div style="left:239px;top:434px;width:455px;height:1px;background:#868686;"></div>
<div style="left:693px;top:421px;width:1px;height:14px;background:#868686;"></div>
<svg style="left:695px;top:420px" width="249" height="16" viewBox="0 0 249 16" shape-rendering="crispEdges"><defs><pattern id="p695_420" width="2" height="2" patternUnits="userSpaceOnUse" x="1"><rect width="2" height="2" fill="#c6c6c6"/><rect width="1" height="1" fill="#fff"/><rect x="1" y="1" width="1" height="1" fill="#fff"/></pattern></defs><rect width="249" height="16" fill="url(#p695_420)"/></svg>
<div style="left:944px;top:420px;width:16px;height:16px;background:#c6c6c6;"></div>
<div style="left:944px;top:435px;width:16px;height:1px;background:#000;"></div>
<div style="left:959px;top:420px;width:1px;height:16px;background:#000;"></div>
<div style="left:945px;top:421px;width:14px;height:1px;background:#fff;"></div>
<div style="left:945px;top:421px;width:1px;height:14px;background:#fff;"></div>
<div style="left:945px;top:434px;width:14px;height:1px;background:#868686;"></div>
<div style="left:958px;top:421px;width:1px;height:14px;background:#868686;"></div>
<svg style="left:950px;top:424px" width="4" height="7" viewBox="0 0 4 7" shape-rendering="crispEdges"><g fill="#000"><rect x="0" y="0" width="1" height="7"/><rect x="1" y="1" width="1" height="5"/><rect x="2" y="2" width="1" height="3"/><rect x="3" y="3" width="1" height="1"/></g></svg>
<div style="left:960px;top:420px;width:16px;height:16px;background:#c6c6c6;"></div>
<div style="left:111px;top:226px;width:9px;height:9px;background:#fff;"></div>
<div style="left:111px;top:226px;width:9px;height:1px;background:#868686;"></div>
<div style="left:111px;top:226px;width:1px;height:9px;background:#868686;"></div>
<div style="left:111px;top:234px;width:9px;height:1px;background:#868686;"></div>
<div style="left:119px;top:226px;width:1px;height:9px;background:#868686;"></div>
<div style="left:113px;top:230px;width:5px;height:1px;background:#000;"></div>
<div style="left:121px;top:230px;width:1px;height:1px;background:#868686;"></div>
<div style="left:123px;top:230px;width:1px;height:1px;background:#868686;"></div>
<span class="t" style="left:127px;top:223px;font-size:11px;font-weight:normal;color:#000;letter-spacing:-0.12px;">d</span>
<div style="left:134px;top:236px;width:1px;height:1px;background:#868686;"></div>
<div style="left:134px;top:238px;width:1px;height:1px;background:#868686;"></div>
<div style="left:134px;top:240px;width:1px;height:1px;background:#868686;"></div>
<div style="left:134px;top:242px;width:1px;height:1px;background:#868686;"></div>
<div style="left:134px;top:244px;width:1px;height:1px;background:#868686;"></div>
<div style="left:134px;top:246px;width:1px;height:1px;background:#868686;"></div>
<div style="left:134px;top:248px;width:1px;height:1px;background:#868686;"></div>
<div style="left:134px;top:250px;width:1px;height:1px;background:#868686;"></div>
<div style="left:134px;top:252px;width:1px;height:1px;background:#868686;"></div>
<div style="left:134px;top:254px;width:1px;height:1px;background:#868686;"></div>
<div style="left:134px;top:256px;width:1px;height:1px;background:#868686;"></div>
<div style="left:134px;top:258px;width:1px;height:1px;background:#868686;"></div>
<div style="left:134px;top:260px;width:1px;height:1px;background:#868686;"></div>
<div style="left:134px;top:262px;width:1px;height:1px;background:#868686;"></div>
<div style="left:134px;top:264px;width:1px;height:1px;background:#868686;"></div>
<div style="left:134px;top:266px;width:1px;height:1px;background:#868686;"></div>
<div style="left:134px;top:268px;width:1px;height:1px;background:#868686;"></div>
<div style="left:134px;top:270px;width:1px;height:1px;background:#868686;"></div>
<div style="left:134px;top:272px;width:1px;height:1px;background:#868686;"></div>
<div style="left:134px;top:274px;width:1px;height:1px;background:#868686;"></div>
<div style="left:134px;top:276px;width:1px;height:1px;background:#868686;"></div>
<div style="left:134px;top:278px;width:1px;height:1px;background:#868686;"></div>
<div style="left:134px;top:280px;width:1px;height:1px;background:#868686;"></div>
<div style="left:134px;top:282px;width:1px;height:1px;background:#868686;"></div>
<div style="left:134px;top:284px;width:1px;height:1px;background:#868686;"></div>
<div style="left:134px;top:286px;width:1px;height:1px;background:#868686;"></div>
<div style="left:134px;top:288px;width:1px;height:1px;background:#868686;"></div>
<div style="left:134px;top:290px;width:1px;height:1px;background:#868686;"></div>
<div style="left:134px;top:292px;width:1px;height:1px;background:#868686;"></div>
<div style="left:134px;top:294px;width:1px;height:1px;background:#868686;"></div>
<div style="left:134px;top:296px;width:1px;height:1px;background:#868686;"></div>
<div style="left:134px;top:298px;width:1px;height:1px;background:#868686;"></div>
<div style="left:134px;top:300px;width:1px;height:1px;background:#868686;"></div>
<div style="left:134px;top:302px;width:1px;height:1px;background:#868686;"></div>
<div style="left:134px;top:304px;width:1px;height:1px;background:#868686;"></div>
<div style="left:134px;top:306px;width:1px;height:1px;background:#868686;"></div>
<div style="left:134px;top:308px;width:1px;height:1px;background:#868686;"></div>
<div style="left:134px;top:310px;width:1px;height:1px;background:#868686;"></div>
<div style="left:134px;top:312px;width:1px;height:1px;background:#868686;"></div>
<div style="left:134px;top:314px;width:1px;height:1px;background:#868686;"></div>
<div style="left:134px;top:316px;width:1px;height:1px;background:#868686;"></div>
<div style="left:134px;top:318px;width:1px;height:1px;background:#868686;"></div>
<div style="left:134px;top:320px;width:1px;height:1px;background:#868686;"></div>
<div style="left:134px;top:322px;width:1px;height:1px;background:#868686;"></div>
<div style="left:134px;top:324px;width:1px;height:1px;background:#868686;"></div>
<div style="left:134px;top:326px;width:1px;height:1px;background:#868686;"></div>
<div style="left:134px;top:328px;width:1px;height:1px;background:#868686;"></div>
<div style="left:134px;top:330px;width:1px;height:1px;background:#868686;"></div>
<div style="left:134px;top:332px;width:1px;height:1px;background:#868686;"></div>
<div style="left:134px;top:334px;width:1px;height:1px;background:#868686;"></div>
<div style="left:134px;top:336px;width:1px;height:1px;background:#868686;"></div>
<div style="left:134px;top:338px;width:1px;height:1px;background:#868686;"></div>
<div style="left:134px;top:340px;width:1px;height:1px;background:#868686;"></div>
<div style="left:134px;top:342px;width:1px;height:1px;background:#868686;"></div>
<div style="left:134px;top:344px;width:1px;height:1px;background:#868686;"></div>
<div style="left:134px;top:346px;width:1px;height:1px;background:#868686;"></div>
<div style="left:134px;top:348px;width:1px;height:1px;background:#868686;"></div>
<div style="left:134px;top:350px;width:1px;height:1px;background:#868686;"></div>
<div style="left:134px;top:352px;width:1px;height:1px;background:#868686;"></div>
<div style="left:134px;top:354px;width:1px;height:1px;background:#868686;"></div>
<div style="left:134px;top:356px;width:1px;height:1px;background:#868686;"></div>
<div style="left:134px;top:358px;width:1px;height:1px;background:#868686;"></div>
<div style="left:134px;top:360px;width:1px;height:1px;background:#868686;"></div>
<div style="left:134px;top:362px;width:1px;height:1px;background:#868686;"></div>
<div style="left:134px;top:364px;width:1px;height:1px;background:#868686;"></div>
<div style="left:134px;top:366px;width:1px;height:1px;background:#868686;"></div>
<div style="left:134px;top:368px;width:1px;height:1px;background:#868686;"></div>
<div style="left:134px;top:370px;width:1px;height:1px;background:#868686;"></div>
<div style="left:134px;top:372px;width:1px;height:1px;background:#868686;"></div>
<div style="left:134px;top:374px;width:1px;height:1px;background:#868686;"></div>
<div style="left:134px;top:376px;width:1px;height:1px;background:#868686;"></div>
<div style="left:134px;top:378px;width:1px;height:1px;background:#868686;"></div>
<div style="left:134px;top:380px;width:1px;height:1px;background:#868686;"></div>
<div style="left:134px;top:382px;width:1px;height:1px;background:#868686;"></div>
<div style="left:134px;top:384px;width:1px;height:1px;background:#868686;"></div>
<div style="left:134px;top:386px;width:1px;height:1px;background:#868686;"></div>
<div style="left:134px;top:388px;width:1px;height:1px;background:#868686;"></div>
<div style="left:134px;top:390px;width:1px;height:1px;background:#868686;"></div>
<div style="left:136px;top:250px;width:1px;height:1px;background:#868686;"></div>
<div style="left:138px;top:250px;width:1px;height:1px;background:#868686;"></div>
<div style="left:140px;top:250px;width:1px;height:1px;background:#868686;"></div>
<div style="left:142px;top:250px;width:1px;height:1px;background:#868686;"></div>
<span class="t" style="left:146px;top:243px;font-size:11px;font-weight:normal;color:#000;letter-spacing:-0.12px;">d[7]</span>
<div style="left:136px;top:270px;width:1px;height:1px;background:#868686;"></div>
<div style="left:138px;top:270px;width:1px;height:1px;background:#868686;"></div>
<div style="left:140px;top:270px;width:1px;height:1px;background:#868686;"></div>
<div style="left:142px;top:270px;width:1px;height:1px;background:#868686;"></div>
<span class="t" style="left:146px;top:263px;font-size:11px;font-weight:normal;color:#000;letter-spacing:-0.12px;">d[6]</span>
<div style="left:136px;top:290px;width:1px;height:1px;background:#868686;"></div>
<div style="left:138px;top:290px;width:1px;height:1px;background:#868686;"></div>
<div style="left:140px;top:290px;width:1px;height:1px;background:#868686;"></div>
<div style="left:142px;top:290px;width:1px;height:1px;background:#868686;"></div>
<span class="t" style="left:146px;top:283px;font-size:11px;font-weight:normal;color:#000;letter-spacing:-0.12px;">d[5]</span>
<div style="left:136px;top:310px;width:1px;height:1px;background:#868686;"></div>
<div style="left:138px;top:310px;width:1px;height:1px;background:#868686;"></div>
<div style="left:140px;top:310px;width:1px;height:1px;background:#868686;"></div>
<div style="left:142px;top:310px;width:1px;height:1px;background:#868686;"></div>
<span class="t" style="left:146px;top:303px;font-size:11px;font-weight:normal;color:#000;letter-spacing:-0.12px;">d[4]</span>
<div style="left:136px;top:330px;width:1px;height:1px;background:#868686;"></div>
<div style="left:138px;top:330px;width:1px;height:1px;background:#868686;"></div>
<div style="left:140px;top:330px;width:1px;height:1px;background:#868686;"></div>
<div style="left:142px;top:330px;width:1px;height:1px;background:#868686;"></div>
<span class="t" style="left:146px;top:323px;font-size:11px;font-weight:normal;color:#000;letter-spacing:-0.12px;">d[3]</span>
<div style="left:136px;top:350px;width:1px;height:1px;background:#868686;"></div>
<div style="left:138px;top:350px;width:1px;height:1px;background:#868686;"></div>
<div style="left:140px;top:350px;width:1px;height:1px;background:#868686;"></div>
<div style="left:142px;top:350px;width:1px;height:1px;background:#868686;"></div>
<span class="t" style="left:146px;top:343px;font-size:11px;font-weight:normal;color:#000;letter-spacing:-0.12px;">d[2]</span>
<div style="left:136px;top:370px;width:1px;height:1px;background:#868686;"></div>
<div style="left:138px;top:370px;width:1px;height:1px;background:#868686;"></div>
<div style="left:140px;top:370px;width:1px;height:1px;background:#868686;"></div>
<div style="left:142px;top:370px;width:1px;height:1px;background:#868686;"></div>
<span class="t" style="left:146px;top:363px;font-size:11px;font-weight:normal;color:#000;letter-spacing:-0.12px;">d[1]</span>
<div style="left:136px;top:390px;width:1px;height:1px;background:#868686;"></div>
<div style="left:138px;top:390px;width:1px;height:1px;background:#868686;"></div>
<div style="left:140px;top:390px;width:1px;height:1px;background:#868686;"></div>
<div style="left:142px;top:390px;width:1px;height:1px;background:#868686;"></div>
<span class="t" style="left:146px;top:383px;font-size:11px;font-weight:normal;color:#000;letter-spacing:-0.12px;">d[0]</span>
<div style="left:111px;top:406px;width:9px;height:9px;background:#fff;"></div>
<div style="left:111px;top:406px;width:9px;height:1px;background:#868686;"></div>
<div style="left:111px;top:406px;width:1px;height:9px;background:#868686;"></div>
<div style="left:111px;top:414px;width:9px;height:1px;background:#868686;"></div>
<div style="left:119px;top:406px;width:1px;height:9px;background:#868686;"></div>
<div style="left:113px;top:410px;width:5px;height:1px;background:#000;"></div>
<div style="left:121px;top:410px;width:1px;height:1px;background:#868686;"></div>
<div style="left:123px;top:410px;width:1px;height:1px;background:#868686;"></div>
<span class="t" style="left:127px;top:403px;font-size:11px;font-weight:normal;color:#000;letter-spacing:-0.15px;">dataa</span>
<div style="left:134px;top:416px;width:1px;height:1px;background:#868686;"></div>
<div style="left:134px;top:418px;width:1px;height:1px;background:#868686;"></div>
<svg style="left:83px;top:7px" width="15" height="14" viewBox="0 0 15 14" shape-rendering="crispEdges"><rect x="2" y="0" width="5" height="1" fill="#000"/><rect x="8" y="0" width="5" height="1" fill="#000"/><rect x="2" y="1" width="1" height="1" fill="#000"/><rect x="3" y="1" width="4" height="1" fill="#fff"/><rect x="7" y="1" width="1" height="1" fill="#000"/><rect x="8" y="1" width="4" height="1" fill="#fff"/><rect x="12" y="1" width="1" height="1" fill="#000"/><rect x="0" y="2" width="1" height="1" fill="#000"/><rect x="2" y="2" width="1" height="1" fill="#000"/><rect x="3" y="2" width="9" height="1" fill="#fff"/><rect x="12" y="2" width="1" height="1" fill="#000"/><rect x="14" y="2" width="1" height="1" fill="#000"/><rect x="0" y="3" width="1" height="1" fill="#000"/><rect x="2" y="3" width="1" height="1" fill="#000"/><rect x="3" y="3" width="1" height="1" fill="#fff"/><rect x="4" y="3" width="1" height="1" fill="#f00"/><rect x="5" y="3" width="7" height="1" fill="#fff"/><rect x="12" y="3" width="1" height="1" fill="#000"/><rect x="14" y="3" width="1" height="1" fill="#000"/><rect x="0" y="4" width="1" height="1" fill="#000"/><rect x="2" y="4" width="1" height="1" fill="#000"/><rect x="3" y="4" width="1" height="1" fill="#fff"/><rect x="4" y="4" width="3" height="1" fill="#f00"/><rect x="7" y="4" width="5" height="1" fill="#fff"/><rect x="12" y="4" width="1" height="1" fill="#000"/><rect x="14" y="4" width="1" height="1" fill="#000"/><rect x="0" y="5" width="1" height="1" fill="#000"/><rect x="2" y="5" width="1" height="1" fill="#000"/><rect x="3" y="5" width="1" height="1" fill="#fff"/><rect x="4" y="5" width="5" height="1" fill="#f00"/><rect x="9" y="5" width="3" height="1" fill="#fff"/><rect x="12" y="5" width="1" height="1" fill="#000"/><rect x="14" y="5" width="1" height="1" fill="#000"/><rect x="0" y="6" width="1" height="1" fill="#000"/><rect x="2" y="6" width="1" height="1" fill="#000"/><rect x="3" y="6" width="1" height="1" fill="#fff"/><rect x="4" y="6" width="7" height="1" fill="#f00"/><rect x="11" y="6" width="1" height="1" fill="#fff"/><rect x="12" y="6" width="1" height="1" fill="#000"/><rect x="14" y="6" width="1" height="1" fill="#000"/><rect x="0" y="7" width="1" height="1" fill="#000"/><rect x="2" y="7" width="1" height="1" fill="#000"/><rect x="3" y="7" width="1" height="1" fill="#fff"/><rect x="4" y="7" width="5" height="1" fill="#f00"/><rect x="9" y="7" width="3" height="1" fill="#fff"/><rect x="12" y="7" width="1" height="1" fill="#000"/><rect x="14" y="7" width="1" height="1" fill="#000"/><rect x="0" y="8" width="1" height="1" fill="#000"/><rect x="2" y="8" width="1" height="1" fill="#000"/><rect x="3" y="8" width="1" height="1" fill="#fff"/><rect x="4" y="8" width="3" height="1" fill="#f00"/><rect x="7" y="8" width="5" height="1" fill="#fff"/><rect x="12" y="8" width="1" height="1" fill="#000"/><rect x="14" y="8" width="1" height="1" fill="#000"/><rect x="0" y="9" width="1" height="1" fill="#000"/><rect x="2" y="9" width="1" height="1" fill="#000"/><rect x="3" y="9" width="1" height="1" fill="#fff"/><rect x="4" y="9" width="1" height="1" fill="#f00"/><rect x="5" y="9" width="7" height="1" fill="#fff"/><rect x="12" y="9" width="1" height="1" fill="#000"/><rect x="14" y="9" width="1" height="1" fill="#000"/><rect x="0" y="10" width="1" height="1" fill="#000"/><rect x="2" y="10" width="1" height="1" fill="#000"/><rect x="3" y="10" width="4" height="1" fill="#fff"/><rect x="7" y="10" width="1" height="1" fill="#000"/><rect x="8" y="10" width="4" height="1" fill="#fff"/><rect x="12" y="10" width="1" height="1" fill="#000"/><rect x="14" y="10" width="1" height="1" fill="#000"/><rect x="0" y="11" width="1" height="1" fill="#000"/><rect x="2" y="11" width="11" height="1" fill="#000"/><rect x="14" y="11" width="1" height="1" fill="#000"/><rect x="0" y="12" width="1" height="1" fill="#000"/><rect x="1" y="12" width="6" height="1" fill="#fff"/><rect x="7" y="12" width="1" height="1" fill="#000"/><rect x="8" y="12" width="6" height="1" fill="#fff"/><rect x="14" y="12" width="1" height="1" fill="#000"/><rect x="0" y="13" width="7" height="1" fill="#000"/><rect x="8" y="13" width="7" height="1" fill="#000"/></svg>
<svg style="left:27px;top:246px" width="16" height="10" viewBox="0 0 16 10" shape-rendering="crispEdges"><rect x="10" y="0" width="1" height="1" fill="#868686"/><rect x="0" y="1" width="9" height="1" fill="#fff"/><rect x="11" y="1" width="1" height="1" fill="#868686"/><rect x="0" y="2" width="13" height="1" fill="#868686"/><rect x="0" y="3" width="4" height="1" fill="#868686"/><rect x="4" y="3" width="1" height="1" fill="#fff"/><rect x="5" y="3" width="9" height="1" fill="#868686"/><rect x="14" y="3" width="2" height="1" fill="#f00"/><rect x="0" y="4" width="4" height="1" fill="#868686"/><rect x="4" y="4" width="1" height="1" fill="#fff"/><rect x="5" y="4" width="9" height="1" fill="#868686"/><rect x="14" y="4" width="2" height="1" fill="#f00"/><rect x="0" y="5" width="4" height="1" fill="#868686"/><rect x="4" y="5" width="1" height="1" fill="#fff"/><rect x="5" y="5" width="8" height="1" fill="#868686"/><rect x="13" y="5" width="1" height="1" fill="#000"/><rect x="14" y="5" width="2" height="1" fill="#f00"/><rect x="0" y="6" width="4" height="1" fill="#868686"/><rect x="4" y="6" width="1" height="1" fill="#fff"/><rect x="5" y="6" width="7" height="1" fill="#868686"/><rect x="12" y="6" width="1" height="1" fill="#000"/><rect x="0" y="7" width="4" height="1" fill="#868686"/><rect x="4" y="7" width="1" height="1" fill="#fff"/><rect x="5" y="7" width="6" height="1" fill="#868686"/><rect x="11" y="7" width="1" height="1" fill="#000"/><rect x="0" y="8" width="10" height="1" fill="#868686"/><rect x="10" y="8" width="1" height="1" fill="#000"/><rect x="0" y="9" width="10" height="1" fill="#000"/></svg>
<svg style="left:27px;top:266px" width="16" height="10" viewBox="0 0 16 10" shape-rendering="crispEdges"><rect x="10" y="0" width="1" height="1" fill="#868686"/><rect x="0" y="1" width="9" height="1" fill="#fff"/><rect x="11" y="1" width="1" height="1" fill="#868686"/><rect x="0" y="2" width="13" height="1" fill="#868686"/><rect x="0" y="3" width="4" height="1" fill="#868686"/><rect x="4" y="3" width="1" height="1" fill="#fff"/><rect x="5" y="3" width="9" height="1" fill="#868686"/><rect x="14" y="3" width="2" height="1" fill="#f00"/><rect x="0" y="4" width="4" height="1" fill="#868686"/><rect x="4" y="4" width="1" height="1" fill="#fff"/><rect x="5" y="4" width="9" height="1" fill="#868686"/><rect x="14" y="4" width="2" height="1" fill="#f00"/><rect x="0" y="5" width="4" height="1" fill="#868686"/><rect x="4" y="5" width="1" height="1" fill="#fff"/><rect x="5" y="5" width="8" height="1" fill="#868686"/><rect x="13" y="5" width="1" height="1" fill="#000"/><rect x="14" y="5" width="2" height="1" fill="#f00"/><rect x="0" y="6" width="4" height="1" fill="#868686"/><rect x="4" y="6" width="1" height="1" fill="#fff"/><rect x="5" y="6" width="7" height="1" fill="#868686"/><rect x="12" y="6" width="1" height="1" fill="#000"/><rect x="0" y="7" width="4" height="1" fill="#868686"/><rect x="4" y="7" width="1" height="1" fill="#fff"/><rect x="5" y="7" width="6" height="1" fill="#868686"/><rect x="11" y="7" width="1" height="1" fill="#000"/><rect x="0" y="8" width="10" height="1" fill="#868686"/><rect x="10" y="8" width="1" height="1" fill="#000"/><rect x="0" y="9" width="10" height="1" fill="#000"/></svg>
<svg style="left:27px;top:286px" width="16" height="10" viewBox="0 0 16 10" shape-rendering="crispEdges"><rect x="10" y="0" width="1" height="1" fill="#868686"/><rect x="0" y="1" width="9" height="1" fill="#fff"/><rect x="11" y="1" width="1" height="1" fill="#868686"/><rect x="0" y="2" width="13" height="1" fill="#868686"/><rect x="0" y="3" width="4" height="1" fill="#868686"/><rect x="4" y="3" width="1" height="1" fill="#fff"/><rect x="5" y="3" width="9" height="1" fill="#868686"/><rect x="14" y="3" width="2" height="1" fill="#f00"/><rect x="0" y="4" width="4" height="1" fill="#868686"/><rect x="4" y="4" width="1" height="1" fill="#fff"/><rect x="5" y="4" width="9" height="1" fill="#868686"/><rect x="14" y="4" width="2" height="1" fill="#f00"/><rect x="0" y="5" width="4" height="1" fill="#868686"/><rect x="4" y="5" width="1" height="1" fill="#fff"/><rect x="5" y="5" width="8" height="1" fill="#868686"/><rect x="13" y="5" width="1" height="1" fill="#000"/><rect x="14" y="5" width="2" height="1" fill="#f00"/><rect x="0" y="6" width="4" height="1" fill="#868686"/><rect x="4" y="6" width="1" height="1" fill="#fff"/><rect x="5" y="6" width="7" height="1" fill="#868686"/><rect x="12" y="6" width="1" height="1" fill="#000"/><rect x="0" y="7" width="4" height="1" fill="#868686"/><rect x="4" y="7" width="1" height="1" fill="#fff"/><rect x="5" y="7" width="6" height="1" fill="#868686"/><rect x="11" y="7" width="1" height="1" fill="#000"/><rect x="0" y="8" width="10" height="1" fill="#868686"/><rect x="10" y="8" width="1" height="1" fill="#000"/><rect x="0" y="9" width="10" height="1" fill="#000"/></svg>
<svg style="left:27px;top:306px" width="16" height="10" viewBox="0 0 16 10" shape-rendering="crispEdges"><rect x="10" y="0" width="1" height="1" fill="#868686"/><rect x="0" y="1" width="9" height="1" fill="#fff"/><rect x="11" y="1" width="1" height="1" fill="#868686"/><rect x="0" y="2" width="13" height="1" fill="#868686"/><rect x="0" y="3" width="4" height="1" fill="#868686"/><rect x="4" y="3" width="1" height="1" fill="#fff"/><rect x="5" y="3" width="9" height="1" fill="#868686"/><rect x="14" y="3" width="2" height="1" fill="#f00"/><rect x="0" y="4" width="4" height="1" fill="#868686"/><rect x="4" y="4" width="1" height="1" fill="#fff"/><rect x="5" y="4" width="9" height="1" fill="#868686"/><rect x="14" y="4" width="2" height="1" fill="#f00"/><rect x="0" y="5" width="4" height="1" fill="#868686"/><rect x="4" y="5" width="1" height="1" fill="#fff"/><rect x="5" y="5" width="8" height="1" fill="#868686"/><rect x="13" y="5" width="1" height="1" fill="#000"/><rect x="14" y="5" width="2" height="1" fill="#f00"/><rect x="0" y="6" width="4" height="1" fill="#868686"/><rect x="4" y="6" width="1" height="1" fill="#fff"/><rect x="5" y="6" width="7" height="1" fill="#868686"/><rect x="12" y="6" width="1" height="1" fill="#000"/><rect x="0" y="7" width="4" height="1" fill="#868686"/><rect x="4" y="7" width="1" height="1" fill="#fff"/><rect x="5" y="7" width="6" height="1" fill="#868686"/><rect x="11" y="7" width="1" height="1" fill="#000"/><rect x="0" y="8" width="10" height="1" fill="#868686"/><rect x="10" y="8" width="1" height="1" fill="#000"/><rect x="0" y="9" width="10" height="1" fill="#000"/></svg>
<svg style="left:27px;top:326px" width="16" height="10" viewBox="0 0 16 10" shape-rendering="crispEdges"><rect x="10" y="0" width="1" height="1" fill="#868686"/><rect x="0" y="1" width="9" height="1" fill="#fff"/><rect x="11" y="1" width="1" height="1" fill="#868686"/><rect x="0" y="2" width="13" height="1" fill="#868686"/><rect x="0" y="3" width="4" height="1" fill="#868686"/><rect x="4" y="3" width="1" height="1" fill="#fff"/><rect x="5" y="3" width="9" height="1" fill="#868686"/><rect x="14" y="3" width="2" height="1" fill="#f00"/><rect x="0" y="4" width="4" height="1" fill="#868686"/><rect x="4" y="4" width="1" height="1" fill="#fff"/><rect x="5" y="4" width="9" height="1" fill="#868686"/><rect x="14" y="4" width="2" height="1" fill="#f00"/><rect x="0" y="5" width="4" height="1" fill="#868686"/><rect x="4" y="5" width="1" height="1" fill="#fff"/><rect x="5" y="5" width="8" height="1" fill="#868686"/><rect x="13" y="5" width="1" height="1" fill="#000"/><rect x="14" y="5" width="2" height="1" fill="#f00"/><rect x="0" y="6" width="4" height="1" fill="#868686"/><rect x="4" y="6" width="1" height="1" fill="#fff"/><rect x="5" y="6" width="7" height="1" fill="#868686"/><rect x="12" y="6" width="1" height="1" fill="#000"/><rect x="0" y="7" width="4" height="1" fill="#868686"/><rect x="4" y="7" width="1" height="1" fill="#fff"/><rect x="5" y="7" width="6" height="1" fill="#868686"/><rect x="11" y="7" width="1" height="1" fill="#000"/><rect x="0" y="8" width="10" height="1" fill="#868686"/><rect x="10" y="8" width="1" height="1" fill="#000"/><rect x="0" y="9" width="10" height="1" fill="#000"/></svg>
<svg style="left:27px;top:346px" width="16" height="10" viewBox="0 0 16 10" shape-rendering="crispEdges"><rect x="10" y="0" width="1" height="1" fill="#868686"/><rect x="0" y="1" width="9" height="1" fill="#fff"/><rect x="11" y="1" width="1" height="1" fill="#868686"/><rect x="0" y="2" width="13" height="1" fill="#868686"/><rect x="0" y="3" width="4" height="1" fill="#868686"/><rect x="4" y="3" width="1" height="1" fill="#fff"/><rect x="5" y="3" width="9" height="1" fill="#868686"/><rect x="14" y="3" width="2" height="1" fill="#f00"/><rect x="0" y="4" width="4" height="1" fill="#868686"/><rect x="4" y="4" width="1" height="1" fill="#fff"/><rect x="5" y="4" width="9" height="1" fill="#868686"/><rect x="14" y="4" width="2" height="1" fill="#f00"/><rect x="0" y="5" width="4" height="1" fill="#868686"/><rect x="4" y="5" width="1" height="1" fill="#fff"/><rect x="5" y="5" width="8" height="1" fill="#868686"/><rect x="13" y="5" width="1" height="1" fill="#000"/><rect x="14" y="5" width="2" height="1" fill="#f00"/><rect x="0" y="6" width="4" height="1" fill="#868686"/><rect x="4" y="6" width="1" height="1" fill="#fff"/><rect x="5" y="6" width="7" height="1" fill="#868686"/><rect x="12" y="6" width="1" height="1" fill="#000"/><rect x="0" y="7" width="4" height="1" fill="#868686"/><rect x="4" y="7" width="1" height="1" fill="#fff"/><rect x="5" y="7" width="6" height="1" fill="#868686"/><rect x="11" y="7" width="1" height="1" fill="#000"/><rect x="0" y="8" width="10" height="1" fill="#868686"/><rect x="10" y="8" width="1" height="1" fill="#000"/><rect x="0" y="9" width="10" height="1" fill="#000"/></svg>
<svg style="left:27px;top:366px" width="16" height="10" viewBox="0 0 16 10" shape-rendering="crispEdges"><rect x="10" y="0" width="1" height="1" fill="#868686"/><rect x="0" y="1" width="9" height="1" fill="#fff"/><rect x="11" y="1" width="1" height="1" fill="#868686"/><rect x="0" y="2" width="13" height="1" fill="#868686"/><rect x="0" y="3" width="4" height="1" fill="#868686"/><rect x="4" y="3" width="1" height="1" fill="#fff"/><rect x="5" y="3" width="9" height="1" fill="#868686"/><rect x="14" y="3" width="2" height="1" fill="#f00"/><rect x="0" y="4" width="4" height="1" fill="#868686"/><rect x="4" y="4" width="1" height="1" fill="#fff"/><rect x="5" y="4" width="9" height="1" fill="#868686"/><rect x="14" y="4" width="2" height="1" fill="#f00"/><rect x="0" y="5" width="4" height="1" fill="#868686"/><rect x="4" y="5" width="1" height="1" fill="#fff"/><rect x="5" y="5" width="8" height="1" fill="#868686"/><rect x="13" y="5" width="1" height="1" fill="#000"/><rect x="14" y="5" width="2" height="1" fill="#f00"/><rect x="0" y="6" width="4" height="1" fill="#868686"/><rect x="4" y="6" width="1" height="1" fill="#fff"/><rect x="5" y="6" width="7" height="1" fill="#868686"/><rect x="12" y="6" width="1" height="1" fill="#000"/><rect x="0" y="7" width="4" height="1" fill="#868686"/><rect x="4" y="7" width="1" height="1" fill="#fff"/><rect x="5" y="7" width="6" height="1" fill="#868686"/><rect x="11" y="7" width="1" height="1" fill="#000"/><rect x="0" y="8" width="10" height="1" fill="#868686"/><rect x="10" y="8" width="1" height="1" fill="#000"/><rect x="0" y="9" width="10" height="1" fill="#000"/></svg>
<svg style="left:27px;top:386px" width="16" height="10" viewBox="0 0 16 10" shape-rendering="crispEdges"><rect x="10" y="0" width="1" height="1" fill="#868686"/><rect x="0" y="1" width="9" height="1" fill="#fff"/><rect x="11" y="1" width="1" height="1" fill="#868686"/><rect x="0" y="2" width="13" height="1" fill="#868686"/><rect x="0" y="3" width="4" height="1" fill="#868686"/><rect x="4" y="3" width="1" height="1" fill="#fff"/><rect x="5" y="3" width="9" height="1" fill="#868686"/><rect x="14" y="3" width="2" height="1" fill="#f00"/><rect x="0" y="4" width="4" height="1" fill="#868686"/><rect x="4" y="4" width="1" height="1" fill="#fff"/><rect x="5" y="4" width="9" height="1" fill="#868686"/><rect x="14" y="4" width="2" height="1" fill="#f00"/><rect x="0" y="5" width="4" height="1" fill="#868686"/><rect x="4" y="5" width="1" height="1" fill="#fff"/><rect x="5" y="5" width="8" height="1" fill="#868686"/><rect x="13" y="5" width="1" height="1" fill="#000"/><rect x="14" y="5" width="2" height="1" fill="#f00"/><rect x="0" y="6" width="4" height="1" fill="#868686"/><rect x="4" y="6" width="1" height="1" fill="#fff"/><rect x="5" y="6" width="7" height="1" fill="#868686"/><rect x="12" y="6" width="1" height="1" fill="#000"/><rect x="0" y="7" width="4" height="1" fill="#868686"/><rect x="4" y="7" width="1" height="1" fill="#fff"/><rect x="5" y="7" width="6" height="1" fill="#868686"/><rect x="11" y="7" width="1" height="1" fill="#000"/><rect x="0" y="8" width="10" height="1" fill="#868686"/><rect x="10" y="8" width="1" height="1" fill="#000"/><rect x="0" y="9" width="10" height="1" fill="#000"/></svg>
<svg style="left:27px;top:224px" width="16" height="12" viewBox="0 0 16 12" shape-rendering="crispEdges"><rect x="4" y="0" width="9" height="1" fill="#868686"/><rect x="3" y="1" width="9" height="1" fill="#fff"/><rect x="13" y="1" width="1" height="1" fill="#868686"/><rect x="15" y="1" width="1" height="1" fill="#f00"/><rect x="2" y="2" width="9" height="1" fill="#868686"/><rect x="12" y="2" width="1" height="1" fill="#fff"/><rect x="13" y="2" width="1" height="1" fill="#868686"/><rect x="0" y="3" width="10" height="1" fill="#fff"/><rect x="11" y="3" width="1" height="1" fill="#868686"/><rect x="12" y="3" width="1" height="1" fill="#fff"/><rect x="14" y="3" width="2" height="1" fill="#f00"/><rect x="0" y="4" width="12" height="1" fill="#868686"/><rect x="12" y="4" width="1" height="1" fill="#fff"/><rect x="0" y="5" width="4" height="1" fill="#868686"/><rect x="4" y="5" width="1" height="1" fill="#fff"/><rect x="5" y="5" width="6" height="1" fill="#868686"/><rect x="11" y="5" width="5" height="1" fill="#f00"/><rect x="0" y="6" width="4" height="1" fill="#868686"/><rect x="4" y="6" width="1" height="1" fill="#fff"/><rect x="5" y="6" width="6" height="1" fill="#868686"/><rect x="11" y="6" width="5" height="1" fill="#f00"/><rect x="0" y="7" width="4" height="1" fill="#868686"/><rect x="4" y="7" width="1" height="1" fill="#fff"/><rect x="5" y="7" width="6" height="1" fill="#868686"/><rect x="11" y="7" width="5" height="1" fill="#f00"/><rect x="0" y="8" width="4" height="1" fill="#868686"/><rect x="4" y="8" width="1" height="1" fill="#fff"/><rect x="5" y="8" width="7" height="1" fill="#868686"/><rect x="12" y="8" width="1" height="1" fill="#000"/><rect x="0" y="9" width="4" height="1" fill="#868686"/><rect x="4" y="9" width="1" height="1" fill="#fff"/><rect x="5" y="9" width="6" height="1" fill="#868686"/><rect x="11" y="9" width="1" height="1" fill="#000"/><rect x="0" y="10" width="10" height="1" fill="#868686"/><rect x="10" y="10" width="1" height="1" fill="#000"/><rect x="0" y="11" width="10" height="1" fill="#000"/></svg>
<svg style="left:27px;top:404px" width="16" height="12" viewBox="0 0 16 12" shape-rendering="crispEdges"><rect x="2" y="0" width="4" height="1" fill="#f00"/><rect x="6" y="0" width="6" height="1" fill="#868686"/><rect x="6" y="1" width="6" height="1" fill="#fff"/><rect x="12" y="1" width="1" height="1" fill="#868686"/><rect x="1" y="2" width="4" height="1" fill="#f00"/><rect x="5" y="2" width="6" height="1" fill="#868686"/><rect x="11" y="2" width="1" height="1" fill="#fff"/><rect x="12" y="2" width="1" height="1" fill="#868686"/><rect x="4" y="3" width="7" height="1" fill="#fff"/><rect x="11" y="3" width="1" height="1" fill="#868686"/><rect x="12" y="3" width="1" height="1" fill="#fff"/><rect x="13" y="3" width="1" height="1" fill="#868686"/><rect x="0" y="4" width="3" height="1" fill="#f00"/><rect x="3" y="4" width="1" height="1" fill="#000"/><rect x="4" y="4" width="9" height="1" fill="#868686"/><rect x="13" y="4" width="1" height="1" fill="#fff"/><rect x="14" y="4" width="1" height="1" fill="#868686"/><rect x="0" y="5" width="2" height="1" fill="#f00"/><rect x="2" y="5" width="1" height="1" fill="#000"/><rect x="3" y="5" width="3" height="1" fill="#868686"/><rect x="6" y="5" width="3" height="1" fill="#fff"/><rect x="9" y="5" width="5" height="1" fill="#868686"/><rect x="14" y="5" width="1" height="1" fill="#000"/><rect x="0" y="6" width="2" height="1" fill="#f00"/><rect x="2" y="6" width="1" height="1" fill="#000"/><rect x="3" y="6" width="2" height="1" fill="#868686"/><rect x="5" y="6" width="1" height="1" fill="#fff"/><rect x="6" y="6" width="8" height="1" fill="#868686"/><rect x="14" y="6" width="1" height="1" fill="#000"/><rect x="0" y="7" width="2" height="1" fill="#f00"/><rect x="3" y="7" width="1" height="1" fill="#000"/><rect x="4" y="7" width="1" height="1" fill="#868686"/><rect x="5" y="7" width="1" height="1" fill="#fff"/><rect x="6" y="7" width="7" height="1" fill="#868686"/><rect x="13" y="7" width="1" height="1" fill="#000"/><rect x="3" y="8" width="1" height="1" fill="#000"/><rect x="4" y="8" width="1" height="1" fill="#868686"/><rect x="5" y="8" width="1" height="1" fill="#fff"/><rect x="6" y="8" width="6" height="1" fill="#868686"/><rect x="12" y="8" width="1" height="1" fill="#000"/><rect x="4" y="9" width="1" height="1" fill="#000"/><rect x="5" y="9" width="1" height="1" fill="#868686"/><rect x="6" y="9" width="3" height="1" fill="#fff"/><rect x="9" y="9" width="2" height="1" fill="#868686"/><rect x="11" y="9" width="1" height="1" fill="#000"/><rect x="5" y="10" width="1" height="1" fill="#000"/><rect x="6" y="10" width="4" height="1" fill="#868686"/><rect x="10" y="10" width="1" height="1" fill="#000"/><rect x="5" y="11" width="6" height="1" fill="#000"/></svg>
<div style="left:13px;top:438px;width:57px;height:21px;background:#c6c6c6;"></div>
<div style="left:13px;top:439px;width:1px;height:20px;background:#fff;"></div>
<div style="left:13px;top:458px;width:57px;height:1px;background:#868686;"></div>
<div style="left:68px;top:440px;width:1px;height:19px;background:#868686;"></div>
<div style="left:70px;top:440px;width:1px;height:18px;background:#fff;"></div>
<div style="left:70px;top:457px;width:62px;height:1px;background:#868686;"></div>
<div style="left:131px;top:440px;width:1px;height:18px;background:#868686;"></div>
<span class="t" style="left:39px;top:444px;font-size:11px;font-weight:normal;color:#000;letter-spacing:0.067px;">Data</span>
<span class="t" style="left:96px;top:443px;font-size:11px;font-weight:normal;color:#000;letter-spacing:-0.125px;">Setup</span>
<svg style="left:16px;top:9px" width="17" height="15" viewBox="0 0 17 15" shape-rendering="crispEdges"><rect x="0" y="0" width="1" height="1" fill="#fff"/><rect x="1" y="0" width="1" height="1" fill="#f00"/><rect x="0" y="1" width="1" height="1" fill="#fff"/><rect x="1" y="1" width="2" height="1" fill="#f00"/><rect x="0" y="2" width="1" height="1" fill="#fff"/><rect x="1" y="2" width="4" height="1" fill="#f00"/><rect x="0" y="3" width="1" height="1" fill="#fff"/><rect x="1" y="3" width="5" height="1" fill="#f00"/><rect x="0" y="4" width="1" height="1" fill="#fff"/><rect x="1" y="4" width="6" height="1" fill="#f00"/><rect x="8" y="4" width="5" height="1" fill="#000"/><rect x="0" y="5" width="1" height="1" fill="#fff"/><rect x="1" y="5" width="5" height="1" fill="#f00"/><rect x="7" y="5" width="1" height="1" fill="#000"/><rect x="8" y="5" width="5" height="1" fill="#fff"/><rect x="13" y="5" width="1" height="1" fill="#000"/><rect x="0" y="6" width="1" height="1" fill="#fff"/><rect x="1" y="6" width="4" height="1" fill="#f00"/><rect x="7" y="6" width="1" height="1" fill="#000"/><rect x="8" y="6" width="5" height="1" fill="#fff"/><rect x="13" y="6" width="1" height="1" fill="#000"/><rect x="0" y="7" width="1" height="1" fill="#fff"/><rect x="1" y="7" width="2" height="1" fill="#f00"/><rect x="7" y="7" width="1" height="1" fill="#000"/><rect x="8" y="7" width="1" height="1" fill="#fff"/><rect x="9" y="7" width="3" height="1" fill="#f00"/><rect x="12" y="7" width="1" height="1" fill="#fff"/><rect x="13" y="7" width="1" height="1" fill="#000"/><rect x="0" y="8" width="1" height="1" fill="#fff"/><rect x="1" y="8" width="1" height="1" fill="#f00"/><rect x="7" y="8" width="1" height="1" fill="#000"/><rect x="8" y="8" width="1" height="1" fill="#f00"/><rect x="9" y="8" width="3" height="1" fill="#fff"/><rect x="12" y="8" width="1" height="1" fill="#f00"/><rect x="13" y="8" width="1" height="1" fill="#000"/><rect x="7" y="9" width="1" height="1" fill="#000"/><rect x="8" y="9" width="5" height="1" fill="#fff"/><rect x="13" y="9" width="1" height="1" fill="#000"/><rect x="8" y="10" width="6" height="1" fill="#000"/><rect x="12" y="11" width="1" height="1" fill="#000"/><rect x="13" y="11" width="1" height="1" fill="#fff"/><rect x="14" y="11" width="1" height="1" fill="#000"/><rect x="13" y="12" width="1" height="1" fill="#000"/><rect x="14" y="12" width="1" height="1" fill="#fff"/><rect x="15" y="12" width="1" height="1" fill="#000"/><rect x="14" y="13" width="1" height="1" fill="#000"/><rect x="15" y="13" width="1" height="1" fill="#fff"/><rect x="16" y="13" width="1" height="1" fill="#000"/><rect x="15" y="14" width="2" height="1" fill="#000"/></svg>
<svg style="left:37px;top:8px" width="17" height="13" viewBox="0 0 17 13" shape-rendering="crispEdges"><rect x="0" y="0" width="1" height="1" fill="#fff"/><rect x="1" y="0" width="1" height="1" fill="#f00"/><rect x="10" y="0" width="4" height="1" fill="#000"/><rect x="0" y="1" width="1" height="1" fill="#fff"/><rect x="1" y="1" width="2" height="1" fill="#f00"/><rect x="12" y="1" width="2" height="1" fill="#000"/><rect x="0" y="2" width="1" height="1" fill="#fff"/><rect x="1" y="2" width="4" height="1" fill="#f00"/><rect x="13" y="2" width="1" height="1" fill="#000"/><rect x="0" y="3" width="1" height="1" fill="#fff"/><rect x="1" y="3" width="6" height="1" fill="#f00"/><rect x="14" y="3" width="1" height="1" fill="#000"/><rect x="0" y="4" width="1" height="1" fill="#fff"/><rect x="1" y="4" width="7" height="1" fill="#f00"/><rect x="14" y="4" width="1" height="1" fill="#000"/><rect x="0" y="5" width="1" height="1" fill="#fff"/><rect x="1" y="5" width="6" height="1" fill="#f00"/><rect x="14" y="5" width="1" height="1" fill="#000"/><rect x="0" y="6" width="1" height="1" fill="#fff"/><rect x="1" y="6" width="5" height="1" fill="#f00"/><rect x="9" y="6" width="1" height="1" fill="#000"/><rect x="14" y="6" width="1" height="1" fill="#000"/><rect x="0" y="7" width="1" height="1" fill="#fff"/><rect x="1" y="7" width="3" height="1" fill="#f00"/><rect x="8" y="7" width="2" height="1" fill="#000"/><rect x="13" y="7" width="1" height="1" fill="#000"/><rect x="0" y="8" width="1" height="1" fill="#fff"/><rect x="1" y="8" width="1" height="1" fill="#f00"/><rect x="7" y="8" width="6" height="1" fill="#000"/><rect x="6" y="9" width="5" height="1" fill="#000"/><rect x="7" y="10" width="3" height="1" fill="#000"/><rect x="8" y="11" width="2" height="1" fill="#000"/><rect x="9" y="12" width="1" height="1" fill="#000"/></svg>
<div style="left:64px;top:9px;width:9px;height:10px;background:#868686;"></div>
<div style="left:73px;top:10px;width:1px;height:10px;background:#fff;"></div>
<div style="left:65px;top:19px;width:9px;height:1px;background:#fff;"></div>
<svg style="left:306px;top:6px" width="14" height="15" viewBox="0 0 14 15" shape-rendering="crispEdges"><rect x="1" y="0" width="11" height="1" fill="#000"/><rect x="0" y="1" width="1" height="1" fill="#000"/><rect x="1" y="1" width="1" height="1" fill="#ffff00"/><rect x="2" y="1" width="1" height="1" fill="#fff"/><rect x="3" y="1" width="1" height="1" fill="#ffff00"/><rect x="4" y="1" width="1" height="1" fill="#fff"/><rect x="5" y="1" width="1" height="1" fill="#ffff00"/><rect x="6" y="1" width="1" height="1" fill="#fff"/><rect x="7" y="1" width="1" height="1" fill="#ffff00"/><rect x="8" y="1" width="1" height="1" fill="#fff"/><rect x="9" y="1" width="1" height="1" fill="#ffff00"/><rect x="10" y="1" width="1" height="1" fill="#fff"/><rect x="11" y="1" width="1" height="1" fill="#ffff00"/><rect x="12" y="1" width="1" height="1" fill="#000"/><rect x="0" y="2" width="1" height="1" fill="#000"/><rect x="1" y="2" width="11" height="1" fill="#fff"/><rect x="12" y="2" width="1" height="1" fill="#000"/><rect x="0" y="3" width="1" height="1" fill="#000"/><rect x="1" y="3" width="1" height="1" fill="#ffff00"/><rect x="2" y="3" width="1" height="1" fill="#fff"/><rect x="3" y="3" width="1" height="1" fill="#ffff00"/><rect x="4" y="3" width="5" height="1" fill="#000080"/><rect x="9" y="3" width="1" height="1" fill="#ffff00"/><rect x="10" y="3" width="1" height="1" fill="#fff"/><rect x="11" y="3" width="1" height="1" fill="#ffff00"/><rect x="12" y="3" width="1" height="1" fill="#000"/><rect x="0" y="4" width="1" height="1" fill="#000"/><rect x="1" y="4" width="2" height="1" fill="#fff"/><rect x="3" y="4" width="2" height="1" fill="#000080"/><rect x="5" y="4" width="3" height="1" fill="#fff"/><rect x="8" y="4" width="2" height="1" fill="#000080"/><rect x="10" y="4" width="2" height="1" fill="#fff"/><rect x="12" y="4" width="1" height="1" fill="#000"/><rect x="0" y="5" width="1" height="1" fill="#000"/><rect x="1" y="5" width="1" height="1" fill="#ffff00"/><rect x="2" y="5" width="1" height="1" fill="#fff"/><rect x="3" y="5" width="2" height="1" fill="#000080"/><rect x="5" y="5" width="1" height="1" fill="#ffff00"/><rect x="6" y="5" width="1" height="1" fill="#fff"/><rect x="7" y="5" width="1" height="1" fill="#ffff00"/><rect x="8" y="5" width="2" height="1" fill="#000080"/><rect x="10" y="5" width="1" height="1" fill="#fff"/><rect x="11" y="5" width="1" height="1" fill="#ffff00"/><rect x="12" y="5" width="1" height="1" fill="#000"/><rect x="0" y="6" width="1" height="1" fill="#000"/><rect x="1" y="6" width="6" height="1" fill="#fff"/><rect x="7" y="6" width="2" height="1" fill="#000080"/><rect x="9" y="6" width="3" height="1" fill="#fff"/><rect x="12" y="6" width="1" height="1" fill="#000"/><rect x="0" y="7" width="1" height="1" fill="#000"/><rect x="1" y="7" width="1" height="1" fill="#ffff00"/><rect x="2" y="7" width="1" height="1" fill="#fff"/><rect x="3" y="7" width="1" height="1" fill="#ffff00"/><rect x="4" y="7" width="1" height="1" fill="#fff"/><rect x="5" y="7" width="1" height="1" fill="#ffff00"/><rect x="6" y="7" width="2" height="1" fill="#000080"/><rect x="8" y="7" width="1" height="1" fill="#fff"/><rect x="9" y="7" width="1" height="1" fill="#ffff00"/><rect x="10" y="7" width="1" height="1" fill="#fff"/><rect x="11" y="7" width="1" height="1" fill="#ffff00"/><rect x="12" y="7" width="1" height="1" fill="#000"/><rect x="0" y="8" width="1" height="1" fill="#000"/><rect x="1" y="8" width="5" height="1" fill="#fff"/><rect x="6" y="8" width="2" height="1" fill="#000080"/><rect x="8" y="8" width="4" height="1" fill="#fff"/><rect x="12" y="8" width="1" height="1" fill="#000"/><rect x="0" y="9" width="1" height="1" fill="#000"/><rect x="1" y="9" width="1" height="1" fill="#ffff00"/><rect x="2" y="9" width="1" height="1" fill="#fff"/><rect x="3" y="9" width="1" height="1" fill="#ffff00"/><rect x="4" y="9" width="1" height="1" fill="#fff"/><rect x="5" y="9" width="1" height="1" fill="#ffff00"/><rect x="6" y="9" width="1" height="1" fill="#fff"/><rect x="7" y="9" width="1" height="1" fill="#ffff00"/><rect x="8" y="9" width="1" height="1" fill="#fff"/><rect x="9" y="9" width="1" height="1" fill="#ffff00"/><rect x="10" y="9" width="1" height="1" fill="#fff"/><rect x="11" y="9" width="1" height="1" fill="#ffff00"/><rect x="12" y="9" width="1" height="1" fill="#000"/><rect x="0" y="10" width="1" height="1" fill="#000"/><rect x="1" y="10" width="5" height="1" fill="#fff"/><rect x="6" y="10" width="2" height="1" fill="#000080"/><rect x="8" y="10" width="4" height="1" fill="#fff"/><rect x="12" y="10" width="1" height="1" fill="#000"/><rect x="0" y="11" width="1" height="1" fill="#000"/><rect x="1" y="11" width="1" height="1" fill="#ffff00"/><rect x="2" y="11" width="1" height="1" fill="#fff"/><rect x="3" y="11" width="1" height="1" fill="#ffff00"/><rect x="4" y="11" width="1" height="1" fill="#fff"/><rect x="5" y="11" width="1" height="1" fill="#ffff00"/><rect x="6" y="11" width="1" height="1" fill="#fff"/><rect x="7" y="11" width="1" height="1" fill="#ffff00"/><rect x="8" y="11" width="1" height="1" fill="#fff"/><rect x="9" y="11" width="1" height="1" fill="#ffff00"/><rect x="10" y="11" width="1" height="1" fill="#fff"/><rect x="11" y="11" width="1" height="1" fill="#ffff00"/><rect x="12" y="11" width="1" height="1" fill="#000"/><rect x="1" y="12" width="7" height="1" fill="#000"/><rect x="8" y="12" width="1" height="1" fill="#fff"/><rect x="9" y="12" width="4" height="1" fill="#000"/><rect x="8" y="13" width="2" height="1" fill="#000"/><rect x="9" y="14" width="1" height="1" fill="#000"/></svg>
<svg style="left:337px;top:7px" width="16" height="15" viewBox="0 0 16 15" shape-rendering="crispEdges"><rect x="6" y="0" width="3" height="1" fill="#00f"/><rect x="6" y="2" width="3" height="1" fill="#00f"/><rect x="6" y="4" width="3" height="1" fill="#00f"/><rect x="4" y="6" width="8" height="1" fill="#00f"/><rect x="5" y="7" width="6" height="1" fill="#00f"/><rect x="6" y="8" width="4" height="1" fill="#00f"/><rect x="2" y="9" width="4" height="1" fill="#000"/><rect x="7" y="9" width="2" height="1" fill="#00f"/><rect x="10" y="9" width="5" height="1" fill="#000"/><rect x="1" y="10" width="1" height="1" fill="#000"/><rect x="2" y="10" width="1" height="1" fill="#00ffff"/><rect x="3" y="10" width="1" height="1" fill="#fff"/><rect x="4" y="10" width="1" height="1" fill="#00ffff"/><rect x="5" y="10" width="1" height="1" fill="#fff"/><rect x="6" y="10" width="1" height="1" fill="#00ffff"/><rect x="7" y="10" width="1" height="1" fill="#fff"/><rect x="8" y="10" width="1" height="1" fill="#00ffff"/><rect x="9" y="10" width="1" height="1" fill="#fff"/><rect x="10" y="10" width="1" height="1" fill="#00ffff"/><rect x="11" y="10" width="1" height="1" fill="#fff"/><rect x="12" y="10" width="1" height="1" fill="#00ffff"/><rect x="13" y="10" width="1" height="1" fill="#fff"/><rect x="14" y="10" width="1" height="1" fill="#000"/><rect x="0" y="11" width="1" height="1" fill="#000"/><rect x="1" y="11" width="1" height="1" fill="#fff"/><rect x="2" y="11" width="1" height="1" fill="#00ffff"/><rect x="3" y="11" width="1" height="1" fill="#fff"/><rect x="4" y="11" width="1" height="1" fill="#00ffff"/><rect x="5" y="11" width="1" height="1" fill="#fff"/><rect x="6" y="11" width="1" height="1" fill="#00ffff"/><rect x="7" y="11" width="1" height="1" fill="#fff"/><rect x="8" y="11" width="1" height="1" fill="#00ffff"/><rect x="9" y="11" width="1" height="1" fill="#fff"/><rect x="10" y="11" width="1" height="1" fill="#00ffff"/><rect x="11" y="11" width="1" height="1" fill="#fff"/><rect x="12" y="11" width="1" height="1" fill="#00ffff"/><rect x="13" y="11" width="1" height="1" fill="#fff"/><rect x="14" y="11" width="1" height="1" fill="#00ffff"/><rect x="15" y="11" width="1" height="1" fill="#000"/><rect x="0" y="12" width="16" height="1" fill="#000"/><rect x="0" y="13" width="16" height="1" fill="#000"/><rect x="1" y="14" width="1" height="1" fill="#000"/><rect x="4" y="14" width="1" height="1" fill="#000"/><rect x="7" y="14" width="1" height="1" fill="#000"/><rect x="10" y="14" width="1" height="1" fill="#000"/><rect x="13" y="14" width="1" height="1" fill="#000"/></svg>
<svg style="left:359px;top:7px" width="18" height="15" viewBox="0 0 18 15" shape-rendering="crispEdges"><rect x="1" y="0" width="8" height="1" fill="#000"/><rect x="14" y="0" width="1" height="1" fill="#000080"/><rect x="1" y="1" width="1" height="1" fill="#000"/><rect x="2" y="1" width="1" height="1" fill="#fff"/><rect x="3" y="1" width="1" height="1" fill="#e0e0e0"/><rect x="4" y="1" width="1" height="1" fill="#fff"/><rect x="5" y="1" width="1" height="1" fill="#e0e0e0"/><rect x="6" y="1" width="1" height="1" fill="#fff"/><rect x="7" y="1" width="1" height="1" fill="#e0e0e0"/><rect x="8" y="1" width="2" height="1" fill="#000"/><rect x="14" y="1" width="1" height="1" fill="#000080"/><rect x="1" y="2" width="1" height="1" fill="#000"/><rect x="2" y="2" width="1" height="1" fill="#e0e0e0"/><rect x="3" y="2" width="1" height="1" fill="#fff"/><rect x="4" y="2" width="1" height="1" fill="#e0e0e0"/><rect x="5" y="2" width="1" height="1" fill="#fff"/><rect x="6" y="2" width="1" height="1" fill="#e0e0e0"/><rect x="7" y="2" width="1" height="1" fill="#fff"/><rect x="8" y="2" width="1" height="1" fill="#000"/><rect x="9" y="2" width="1" height="1" fill="#fff"/><rect x="10" y="2" width="1" height="1" fill="#000"/><rect x="14" y="2" width="1" height="1" fill="#000080"/><rect x="1" y="3" width="1" height="1" fill="#000"/><rect x="2" y="3" width="1" height="1" fill="#fff"/><rect x="3" y="3" width="1" height="1" fill="#e0e0e0"/><rect x="4" y="3" width="1" height="1" fill="#fff"/><rect x="5" y="3" width="1" height="1" fill="#e0e0e0"/><rect x="6" y="3" width="1" height="1" fill="#fff"/><rect x="7" y="3" width="1" height="1" fill="#e0e0e0"/><rect x="8" y="3" width="4" height="1" fill="#000"/><rect x="14" y="3" width="1" height="1" fill="#000080"/><rect x="1" y="4" width="1" height="1" fill="#000"/><rect x="2" y="4" width="1" height="1" fill="#e0e0e0"/><rect x="3" y="4" width="1" height="1" fill="#fff"/><rect x="4" y="4" width="1" height="1" fill="#e0e0e0"/><rect x="5" y="4" width="1" height="1" fill="#fff"/><rect x="6" y="4" width="1" height="1" fill="#e0e0e0"/><rect x="7" y="4" width="1" height="1" fill="#fff"/><rect x="8" y="4" width="1" height="1" fill="#e0e0e0"/><rect x="9" y="4" width="1" height="1" fill="#fff"/><rect x="10" y="4" width="1" height="1" fill="#e0e0e0"/><rect x="11" y="4" width="1" height="1" fill="#000"/><rect x="14" y="4" width="1" height="1" fill="#000080"/><rect x="1" y="5" width="1" height="1" fill="#000"/><rect x="2" y="5" width="1" height="1" fill="#fff"/><rect x="3" y="5" width="1" height="1" fill="#e0e0e0"/><rect x="4" y="5" width="1" height="1" fill="#fff"/><rect x="5" y="5" width="1" height="1" fill="#e0e0e0"/><rect x="6" y="5" width="1" height="1" fill="#fff"/><rect x="7" y="5" width="1" height="1" fill="#e0e0e0"/><rect x="8" y="5" width="1" height="1" fill="#fff"/><rect x="9" y="5" width="1" height="1" fill="#e0e0e0"/><rect x="10" y="5" width="1" height="1" fill="#fff"/><rect x="11" y="5" width="1" height="1" fill="#000"/><rect x="14" y="5" width="1" height="1" fill="#000080"/><rect x="0" y="6" width="4" height="1" fill="#f00"/><rect x="4" y="6" width="1" height="1" fill="#e0e0e0"/><rect x="5" y="6" width="1" height="1" fill="#fff"/><rect x="6" y="6" width="1" height="1" fill="#e0e0e0"/><rect x="7" y="6" width="1" height="1" fill="#fff"/><rect x="8" y="6" width="3" height="1" fill="#f00"/><rect x="11" y="6" width="1" height="1" fill="#000"/><rect x="14" y="6" width="1" height="1" fill="#000080"/><rect x="1" y="7" width="1" height="1" fill="#000"/><rect x="2" y="7" width="1" height="1" fill="#fff"/><rect x="3" y="7" width="1" height="1" fill="#f00"/><rect x="4" y="7" width="1" height="1" fill="#fff"/><rect x="5" y="7" width="1" height="1" fill="#e0e0e0"/><rect x="6" y="7" width="1" height="1" fill="#fff"/><rect x="7" y="7" width="1" height="1" fill="#e0e0e0"/><rect x="8" y="7" width="1" height="1" fill="#f00"/><rect x="9" y="7" width="1" height="1" fill="#e0e0e0"/><rect x="10" y="7" width="1" height="1" fill="#fff"/><rect x="11" y="7" width="1" height="1" fill="#000"/><rect x="14" y="7" width="1" height="1" fill="#000080"/><rect x="1" y="8" width="1" height="1" fill="#000"/><rect x="2" y="8" width="1" height="1" fill="#e0e0e0"/><rect x="3" y="8" width="6" height="1" fill="#f00"/><rect x="9" y="8" width="1" height="1" fill="#fff"/><rect x="10" y="8" width="3" height="1" fill="#f00"/><rect x="14" y="8" width="1" height="1" fill="#000080"/><rect x="1" y="9" width="1" height="1" fill="#000"/><rect x="2" y="9" width="1" height="1" fill="#fff"/><rect x="3" y="9" width="1" height="1" fill="#e0e0e0"/><rect x="4" y="9" width="1" height="1" fill="#fff"/><rect x="5" y="9" width="1" height="1" fill="#e0e0e0"/><rect x="6" y="9" width="1" height="1" fill="#fff"/><rect x="7" y="9" width="1" height="1" fill="#e0e0e0"/><rect x="8" y="9" width="1" height="1" fill="#fff"/><rect x="9" y="9" width="1" height="1" fill="#e0e0e0"/><rect x="10" y="9" width="1" height="1" fill="#fff"/><rect x="11" y="9" width="1" height="1" fill="#000"/><rect x="14" y="9" width="1" height="1" fill="#000080"/><rect x="1" y="10" width="1" height="1" fill="#000"/><rect x="2" y="10" width="1" height="1" fill="#e0e0e0"/><rect x="3" y="10" width="1" height="1" fill="#fff"/><rect x="4" y="10" width="1" height="1" fill="#e0e0e0"/><rect x="5" y="10" width="1" height="1" fill="#fff"/><rect x="6" y="10" width="1" height="1" fill="#e0e0e0"/><rect x="7" y="10" width="1" height="1" fill="#fff"/><rect x="8" y="10" width="1" height="1" fill="#e0e0e0"/><rect x="9" y="10" width="1" height="1" fill="#fff"/><rect x="10" y="10" width="1" height="1" fill="#e0e0e0"/><rect x="11" y="10" width="1" height="1" fill="#000"/><rect x="14" y="10" width="1" height="1" fill="#000080"/><rect x="1" y="11" width="1" height="1" fill="#000"/><rect x="2" y="11" width="1" height="1" fill="#fff"/><rect x="3" y="11" width="1" height="1" fill="#e0e0e0"/><rect x="4" y="11" width="1" height="1" fill="#fff"/><rect x="5" y="11" width="1" height="1" fill="#e0e0e0"/><rect x="6" y="11" width="1" height="1" fill="#fff"/><rect x="7" y="11" width="1" height="1" fill="#e0e0e0"/><rect x="8" y="11" width="1" height="1" fill="#fff"/><rect x="9" y="11" width="1" height="1" fill="#e0e0e0"/><rect x="10" y="11" width="1" height="1" fill="#fff"/><rect x="11" y="11" width="1" height="1" fill="#000"/><rect x="14" y="11" width="1" height="1" fill="#000080"/><rect x="1" y="12" width="1" height="1" fill="#000"/><rect x="2" y="12" width="1" height="1" fill="#e0e0e0"/><rect x="3" y="12" width="1" height="1" fill="#fff"/><rect x="4" y="12" width="1" height="1" fill="#e0e0e0"/><rect x="5" y="12" width="1" height="1" fill="#fff"/><rect x="6" y="12" width="1" height="1" fill="#e0e0e0"/><rect x="7" y="12" width="1" height="1" fill="#fff"/><rect x="8" y="12" width="1" height="1" fill="#e0e0e0"/><rect x="9" y="12" width="1" height="1" fill="#fff"/><rect x="10" y="12" width="1" height="1" fill="#e0e0e0"/><rect x="11" y="12" width="1" height="1" fill="#000"/><rect x="12" y="12" width="5" height="1" fill="#000080"/><rect x="1" y="13" width="1" height="1" fill="#000"/><rect x="2" y="13" width="1" height="1" fill="#fff"/><rect x="3" y="13" width="1" height="1" fill="#e0e0e0"/><rect x="4" y="13" width="1" height="1" fill="#fff"/><rect x="5" y="13" width="1" height="1" fill="#e0e0e0"/><rect x="6" y="13" width="1" height="1" fill="#fff"/><rect x="7" y="13" width="1" height="1" fill="#e0e0e0"/><rect x="8" y="13" width="1" height="1" fill="#fff"/><rect x="9" y="13" width="1" height="1" fill="#e0e0e0"/><rect x="10" y="13" width="1" height="1" fill="#fff"/><rect x="11" y="13" width="1" height="1" fill="#000"/><rect x="13" y="13" width="3" height="1" fill="#000080"/><rect x="1" y="14" width="11" height="1" fill="#000"/><rect x="14" y="14" width="1" height="1" fill="#000080"/></svg>
<svg style="left:392px;top:7px" width="16" height="13" viewBox="0 0 16 13" shape-rendering="crispEdges"><rect x="1" y="0" width="14" height="1" fill="#000"/><rect x="0" y="1" width="1" height="1" fill="#000"/><rect x="1" y="1" width="14" height="1" fill="#c6c6c6"/><rect x="15" y="1" width="1" height="1" fill="#000"/><rect x="0" y="2" width="1" height="1" fill="#000"/><rect x="1" y="2" width="1" height="1" fill="#c6c6c6"/><rect x="2" y="2" width="12" height="1" fill="#000"/><rect x="14" y="2" width="1" height="1" fill="#c6c6c6"/><rect x="15" y="2" width="1" height="1" fill="#000"/><rect x="0" y="3" width="1" height="1" fill="#000"/><rect x="1" y="3" width="1" height="1" fill="#c6c6c6"/><rect x="2" y="3" width="1" height="1" fill="#000"/><rect x="3" y="3" width="1" height="1" fill="#00ffff"/><rect x="4" y="3" width="1" height="1" fill="#fff"/><rect x="5" y="3" width="1" height="1" fill="#00ffff"/><rect x="6" y="3" width="1" height="1" fill="#fff"/><rect x="7" y="3" width="1" height="1" fill="#00ffff"/><rect x="8" y="3" width="1" height="1" fill="#fff"/><rect x="9" y="3" width="1" height="1" fill="#00ffff"/><rect x="10" y="3" width="1" height="1" fill="#fff"/><rect x="11" y="3" width="1" height="1" fill="#00ffff"/><rect x="12" y="3" width="1" height="1" fill="#fff"/><rect x="13" y="3" width="1" height="1" fill="#000"/><rect x="14" y="3" width="1" height="1" fill="#c6c6c6"/><rect x="15" y="3" width="1" height="1" fill="#000"/><rect x="0" y="4" width="1" height="1" fill="#000"/><rect x="1" y="4" width="1" height="1" fill="#c6c6c6"/><rect x="2" y="4" width="1" height="1" fill="#000"/><rect x="3" y="4" width="1" height="1" fill="#fff"/><rect x="4" y="4" width="3" height="1" fill="#868686"/><rect x="7" y="4" width="1" height="1" fill="#fff"/><rect x="8" y="4" width="1" height="1" fill="#00ffff"/><rect x="9" y="4" width="1" height="1" fill="#fff"/><rect x="10" y="4" width="1" height="1" fill="#00ffff"/><rect x="11" y="4" width="1" height="1" fill="#fff"/><rect x="12" y="4" width="1" height="1" fill="#00ffff"/><rect x="13" y="4" width="1" height="1" fill="#000"/><rect x="14" y="4" width="1" height="1" fill="#c6c6c6"/><rect x="15" y="4" width="1" height="1" fill="#000"/><rect x="0" y="5" width="1" height="1" fill="#000"/><rect x="1" y="5" width="1" height="1" fill="#c6c6c6"/><rect x="2" y="5" width="1" height="1" fill="#000"/><rect x="3" y="5" width="1" height="1" fill="#00ffff"/><rect x="4" y="5" width="1" height="1" fill="#fff"/><rect x="5" y="5" width="1" height="1" fill="#00ffff"/><rect x="6" y="5" width="1" height="1" fill="#fff"/><rect x="7" y="5" width="1" height="1" fill="#00ffff"/><rect x="8" y="5" width="1" height="1" fill="#fff"/><rect x="9" y="5" width="1" height="1" fill="#00ffff"/><rect x="10" y="5" width="1" height="1" fill="#fff"/><rect x="11" y="5" width="1" height="1" fill="#00ffff"/><rect x="12" y="5" width="1" height="1" fill="#fff"/><rect x="13" y="5" width="1" height="1" fill="#000"/><rect x="14" y="5" width="1" height="1" fill="#c6c6c6"/><rect x="15" y="5" width="1" height="1" fill="#000"/><rect x="0" y="6" width="1" height="1" fill="#000"/><rect x="1" y="6" width="1" height="1" fill="#c6c6c6"/><rect x="2" y="6" width="1" height="1" fill="#000"/><rect x="3" y="6" width="1" height="1" fill="#fff"/><rect x="4" y="6" width="8" height="1" fill="#868686"/><rect x="12" y="6" width="1" height="1" fill="#00ffff"/><rect x="13" y="6" width="1" height="1" fill="#000"/><rect x="14" y="6" width="1" height="1" fill="#c6c6c6"/><rect x="15" y="6" width="1" height="1" fill="#000"/><rect x="0" y="7" width="1" height="1" fill="#000"/><rect x="1" y="7" width="1" height="1" fill="#c6c6c6"/><rect x="2" y="7" width="1" height="1" fill="#000"/><rect x="3" y="7" width="1" height="1" fill="#00ffff"/><rect x="4" y="7" width="1" height="1" fill="#fff"/><rect x="5" y="7" width="1" height="1" fill="#00ffff"/><rect x="6" y="7" width="1" height="1" fill="#fff"/><rect x="7" y="7" width="1" height="1" fill="#00ffff"/><rect x="8" y="7" width="1" height="1" fill="#fff"/><rect x="9" y="7" width="1" height="1" fill="#00ffff"/><rect x="10" y="7" width="1" height="1" fill="#fff"/><rect x="11" y="7" width="1" height="1" fill="#00ffff"/><rect x="12" y="7" width="1" height="1" fill="#fff"/><rect x="13" y="7" width="1" height="1" fill="#000"/><rect x="14" y="7" width="1" height="1" fill="#c6c6c6"/><rect x="15" y="7" width="1" height="1" fill="#000"/><rect x="0" y="8" width="1" height="1" fill="#000"/><rect x="1" y="8" width="1" height="1" fill="#c6c6c6"/><rect x="2" y="8" width="1" height="1" fill="#000"/><rect x="3" y="8" width="1" height="1" fill="#fff"/><rect x="4" y="8" width="8" height="1" fill="#868686"/><rect x="12" y="8" width="1" height="1" fill="#00ffff"/><rect x="13" y="8" width="1" height="1" fill="#000"/><rect x="14" y="8" width="1" height="1" fill="#c6c6c6"/><rect x="15" y="8" width="1" height="1" fill="#000"/><rect x="0" y="9" width="1" height="1" fill="#000"/><rect x="1" y="9" width="1" height="1" fill="#c6c6c6"/><rect x="2" y="9" width="1" height="1" fill="#000"/><rect x="3" y="9" width="1" height="1" fill="#00ffff"/><rect x="4" y="9" width="1" height="1" fill="#fff"/><rect x="5" y="9" width="1" height="1" fill="#00ffff"/><rect x="6" y="9" width="1" height="1" fill="#fff"/><rect x="7" y="9" width="1" height="1" fill="#00ffff"/><rect x="8" y="9" width="1" height="1" fill="#fff"/><rect x="9" y="9" width="1" height="1" fill="#00ffff"/><rect x="10" y="9" width="1" height="1" fill="#fff"/><rect x="11" y="9" width="1" height="1" fill="#00ffff"/><rect x="12" y="9" width="1" height="1" fill="#fff"/><rect x="13" y="9" width="1" height="1" fill="#000"/><rect x="14" y="9" width="1" height="1" fill="#c6c6c6"/><rect x="15" y="9" width="1" height="1" fill="#000"/><rect x="0" y="10" width="1" height="1" fill="#000"/><rect x="1" y="10" width="1" height="1" fill="#c6c6c6"/><rect x="2" y="10" width="12" height="1" fill="#000"/><rect x="14" y="10" width="1" height="1" fill="#c6c6c6"/><rect x="15" y="10" width="1" height="1" fill="#000"/><rect x="0" y="11" width="1" height="1" fill="#000"/><rect x="1" y="11" width="14" height="1" fill="#c6c6c6"/><rect x="15" y="11" width="1" height="1" fill="#000"/><rect x="1" y="12" width="14" height="1" fill="#000"/></svg>
<svg style="left:843px;top:35px" width="14" height="15" viewBox="0 0 14 15" shape-rendering="crispEdges"><rect x="1" y="0" width="11" height="1" fill="#000"/><rect x="0" y="1" width="1" height="1" fill="#000"/><rect x="1" y="1" width="1" height="1" fill="#ffff00"/><rect x="2" y="1" width="1" height="1" fill="#fff"/><rect x="3" y="1" width="1" height="1" fill="#ffff00"/><rect x="4" y="1" width="1" height="1" fill="#fff"/><rect x="5" y="1" width="1" height="1" fill="#ffff00"/><rect x="6" y="1" width="1" height="1" fill="#fff"/><rect x="7" y="1" width="1" height="1" fill="#ffff00"/><rect x="8" y="1" width="1" height="1" fill="#fff"/><rect x="9" y="1" width="1" height="1" fill="#ffff00"/><rect x="10" y="1" width="1" height="1" fill="#fff"/><rect x="11" y="1" width="1" height="1" fill="#ffff00"/><rect x="12" y="1" width="1" height="1" fill="#000"/><rect x="0" y="2" width="1" height="1" fill="#000"/><rect x="1" y="2" width="11" height="1" fill="#fff"/><rect x="12" y="2" width="1" height="1" fill="#000"/><rect x="0" y="3" width="1" height="1" fill="#000"/><rect x="1" y="3" width="1" height="1" fill="#ffff00"/><rect x="2" y="3" width="1" height="1" fill="#fff"/><rect x="3" y="3" width="1" height="1" fill="#ffff00"/><rect x="4" y="3" width="5" height="1" fill="#000080"/><rect x="9" y="3" width="1" height="1" fill="#ffff00"/><rect x="10" y="3" width="1" height="1" fill="#fff"/><rect x="11" y="3" width="1" height="1" fill="#ffff00"/><rect x="12" y="3" width="1" height="1" fill="#000"/><rect x="0" y="4" width="1" height="1" fill="#000"/><rect x="1" y="4" width="2" height="1" fill="#fff"/><rect x="3" y="4" width="2" height="1" fill="#000080"/><rect x="5" y="4" width="3" height="1" fill="#fff"/><rect x="8" y="4" width="2" height="1" fill="#000080"/><rect x="10" y="4" width="2" height="1" fill="#fff"/><rect x="12" y="4" width="1" height="1" fill="#000"/><rect x="0" y="5" width="1" height="1" fill="#000"/><rect x="1" y="5" width="1" height="1" fill="#ffff00"/><rect x="2" y="5" width="1" height="1" fill="#fff"/><rect x="3" y="5" width="2" height="1" fill="#000080"/><rect x="5" y="5" width="1" height="1" fill="#ffff00"/><rect x="6" y="5" width="1" height="1" fill="#fff"/><rect x="7" y="5" width="1" height="1" fill="#ffff00"/><rect x="8" y="5" width="2" height="1" fill="#000080"/><rect x="10" y="5" width="1" height="1" fill="#fff"/><rect x="11" y="5" width="1" height="1" fill="#ffff00"/><rect x="12" y="5" width="1" height="1" fill="#000"/><rect x="0" y="6" width="1" height="1" fill="#000"/><rect x="1" y="6" width="6" height="1" fill="#fff"/><rect x="7" y="6" width="2" height="1" fill="#000080"/><rect x="9" y="6" width="3" height="1" fill="#fff"/><rect x="12" y="6" width="1" height="1" fill="#000"/><rect x="0" y="7" width="1" height="1" fill="#000"/><rect x="1" y="7" width="1" height="1" fill="#ffff00"/><rect x="2" y="7" width="1" height="1" fill="#fff"/><rect x="3" y="7" width="1" height="1" fill="#ffff00"/><rect x="4" y="7" width="1" height="1" fill="#fff"/><rect x="5" y="7" width="1" height="1" fill="#ffff00"/><rect x="6" y="7" width="2" height="1" fill="#000080"/><rect x="8" y="7" width="1" height="1" fill="#fff"/><rect x="9" y="7" width="1" height="1" fill="#ffff00"/><rect x="10" y="7" width="1" height="1" fill="#fff"/><rect x="11" y="7" width="1" height="1" fill="#ffff00"/><rect x="12" y="7" width="1" height="1" fill="#000"/><rect x="0" y="8" width="1" height="1" fill="#000"/><rect x="1" y="8" width="5" height="1" fill="#fff"/><rect x="6" y="8" width="2" height="1" fill="#000080"/><rect x="8" y="8" width="4" height="1" fill="#fff"/><rect x="12" y="8" width="1" height="1" fill="#000"/><rect x="0" y="9" width="1" height="1" fill="#000"/><rect x="1" y="9" width="1" height="1" fill="#ffff00"/><rect x="2" y="9" width="1" height="1" fill="#fff"/><rect x="3" y="9" width="1" height="1" fill="#ffff00"/><rect x="4" y="9" width="1" height="1" fill="#fff"/><rect x="5" y="9" width="1" height="1" fill="#ffff00"/><rect x="6" y="9" width="1" height="1" fill="#fff"/><rect x="7" y="9" width="1" height="1" fill="#ffff00"/><rect x="8" y="9" width="1" height="1" fill="#fff"/><rect x="9" y="9" width="1" height="1" fill="#ffff00"/><rect x="10" y="9" width="1" height="1" fill="#fff"/><rect x="11" y="9" width="1" height="1" fill="#ffff00"/><rect x="12" y="9" width="1" height="1" fill="#000"/><rect x="0" y="10" width="1" height="1" fill="#000"/><rect x="1" y="10" width="5" height="1" fill="#fff"/><rect x="6" y="10" width="2" height="1" fill="#000080"/><rect x="8" y="10" width="4" height="1" fill="#fff"/><rect x="12" y="10" width="1" height="1" fill="#000"/><rect x="0" y="11" width="1" height="1" fill="#000"/><rect x="1" y="11" width="1" height="1" fill="#ffff00"/><rect x="2" y="11" width="1" height="1" fill="#fff"/><rect x="3" y="11" width="1" height="1" fill="#ffff00"/><rect x="4" y="11" width="1" height="1" fill="#fff"/><rect x="5" y="11" width="1" height="1" fill="#ffff00"/><rect x="6" y="11" width="1" height="1" fill="#fff"/><rect x="7" y="11" width="1" height="1" fill="#ffff00"/><rect x="8" y="11" width="1" height="1" fill="#fff"/><rect x="9" y="11" width="1" height="1" fill="#ffff00"/><rect x="10" y="11" width="1" height="1" fill="#fff"/><rect x="11" y="11" width="1" height="1" fill="#ffff00"/><rect x="12" y="11" width="1" height="1" fill="#000"/><rect x="1" y="12" width="7" height="1" fill="#000"/><rect x="8" y="12" width="1" height="1" fill="#fff"/><rect x="9" y="12" width="4" height="1" fill="#000"/><rect x="8" y="13" width="2" height="1" fill="#000"/><rect x="9" y="14" width="1" height="1" fill="#000"/></svg>
<svg style="left:5px;top:73px" width="12" height="12" viewBox="0 0 12 12" shape-rendering="crispEdges"><rect x="3" y="0" width="3" height="1" fill="#000"/><rect x="3" y="1" width="5" height="1" fill="#000"/><rect x="0" y="2" width="9" height="1" fill="#000"/><rect x="3" y="3" width="6" height="1" fill="#000"/><rect x="0" y="4" width="9" height="1" fill="#000"/><rect x="3" y="5" width="5" height="1" fill="#000"/><rect x="3" y="6" width="3" height="1" fill="#000"/><rect x="0" y="7" width="3" height="1" fill="#000"/><rect x="5" y="7" width="5" height="1" fill="#000"/><rect x="0" y="8" width="3" height="1" fill="#000"/><rect x="8" y="8" width="2" height="1" fill="#000"/><rect x="2" y="9" width="5" height="1" fill="#000"/><rect x="8" y="9" width="2" height="1" fill="#000"/><rect x="2" y="10" width="5" height="1" fill="#000"/><rect x="8" y="10" width="4" height="1" fill="#000"/><rect x="2" y="11" width="5" height="1" fill="#000"/><rect x="9" y="11" width="3" height="1" fill="#000"/></svg>
<svg style="left:3px;top:88px" width="16" height="16" viewBox="0 0 16 16" shape-rendering="crispEdges"><rect x="0" y="0" width="16" height="1" fill="#00f"/><rect x="0" y="1" width="1" height="1" fill="#00f"/><rect x="1" y="1" width="14" height="1" fill="#fff"/><rect x="15" y="1" width="1" height="1" fill="#00f"/><rect x="0" y="2" width="1" height="1" fill="#00f"/><rect x="1" y="2" width="4" height="1" fill="#fff"/><rect x="5" y="2" width="3" height="1" fill="#000080"/><rect x="8" y="2" width="7" height="1" fill="#fff"/><rect x="15" y="2" width="1" height="1" fill="#00f"/><rect x="0" y="3" width="1" height="1" fill="#00f"/><rect x="1" y="3" width="4" height="1" fill="#fff"/><rect x="5" y="3" width="5" height="1" fill="#000080"/><rect x="10" y="3" width="5" height="1" fill="#fff"/><rect x="15" y="3" width="1" height="1" fill="#00f"/><rect x="0" y="4" width="1" height="1" fill="#00f"/><rect x="1" y="4" width="1" height="1" fill="#fff"/><rect x="2" y="4" width="9" height="1" fill="#000080"/><rect x="11" y="4" width="4" height="1" fill="#fff"/><rect x="15" y="4" width="1" height="1" fill="#00f"/><rect x="0" y="5" width="1" height="1" fill="#00f"/><rect x="1" y="5" width="4" height="1" fill="#fff"/><rect x="5" y="5" width="6" height="1" fill="#000080"/><rect x="11" y="5" width="4" height="1" fill="#fff"/><rect x="15" y="5" width="1" height="1" fill="#00f"/><rect x="0" y="6" width="1" height="1" fill="#00f"/><rect x="1" y="6" width="1" height="1" fill="#fff"/><rect x="2" y="6" width="9" height="1" fill="#000080"/><rect x="11" y="6" width="4" height="1" fill="#fff"/><rect x="15" y="6" width="1" height="1" fill="#00f"/><rect x="0" y="7" width="1" height="1" fill="#00f"/><rect x="1" y="7" width="4" height="1" fill="#fff"/><rect x="5" y="7" width="5" height="1" fill="#000080"/><rect x="10" y="7" width="5" height="1" fill="#fff"/><rect x="15" y="7" width="1" height="1" fill="#00f"/><rect x="0" y="8" width="1" height="1" fill="#00f"/><rect x="1" y="8" width="4" height="1" fill="#fff"/><rect x="5" y="8" width="3" height="1" fill="#000080"/><rect x="8" y="8" width="7" height="1" fill="#fff"/><rect x="15" y="8" width="1" height="1" fill="#00f"/><rect x="0" y="9" width="1" height="1" fill="#00f"/><rect x="1" y="9" width="1" height="1" fill="#fff"/><rect x="2" y="9" width="3" height="1" fill="#f00"/><rect x="5" y="9" width="2" height="1" fill="#fff"/><rect x="7" y="9" width="5" height="1" fill="#f00"/><rect x="12" y="9" width="3" height="1" fill="#fff"/><rect x="15" y="9" width="1" height="1" fill="#00f"/><rect x="0" y="10" width="1" height="1" fill="#00f"/><rect x="1" y="10" width="1" height="1" fill="#fff"/><rect x="2" y="10" width="3" height="1" fill="#f00"/><rect x="5" y="10" width="5" height="1" fill="#fff"/><rect x="10" y="10" width="2" height="1" fill="#f00"/><rect x="12" y="10" width="3" height="1" fill="#fff"/><rect x="15" y="10" width="1" height="1" fill="#00f"/><rect x="0" y="11" width="1" height="1" fill="#00f"/><rect x="1" y="11" width="3" height="1" fill="#fff"/><rect x="4" y="11" width="5" height="1" fill="#f00"/><rect x="9" y="11" width="1" height="1" fill="#fff"/><rect x="10" y="11" width="2" height="1" fill="#f00"/><rect x="12" y="11" width="3" height="1" fill="#fff"/><rect x="15" y="11" width="1" height="1" fill="#00f"/><rect x="0" y="12" width="1" height="1" fill="#00f"/><rect x="1" y="12" width="3" height="1" fill="#fff"/><rect x="4" y="12" width="5" height="1" fill="#f00"/><rect x="9" y="12" width="1" height="1" fill="#fff"/><rect x="10" y="12" width="4" height="1" fill="#f00"/><rect x="14" y="12" width="1" height="1" fill="#fff"/><rect x="15" y="12" width="1" height="1" fill="#00f"/><rect x="0" y="13" width="1" height="1" fill="#00f"/><rect x="1" y="13" width="3" height="1" fill="#fff"/><rect x="4" y="13" width="5" height="1" fill="#f00"/><rect x="9" y="13" width="2" height="1" fill="#fff"/><rect x="11" y="13" width="3" height="1" fill="#f00"/><rect x="14" y="13" width="1" height="1" fill="#fff"/><rect x="15" y="13" width="1" height="1" fill="#00f"/><rect x="0" y="14" width="1" height="1" fill="#00f"/><rect x="1" y="14" width="14" height="1" fill="#fff"/><rect x="15" y="14" width="1" height="1" fill="#00f"/><rect x="0" y="15" width="16" height="1" fill="#00f"/></svg>
<svg style="left:11px;top:603px" width="12" height="12" viewBox="0 0 12 12" shape-rendering="crispEdges"><rect x="3" y="0" width="3" height="1" fill="#000"/><rect x="3" y="1" width="5" height="1" fill="#000"/><rect x="0" y="2" width="9" height="1" fill="#000"/><rect x="3" y="3" width="6" height="1" fill="#000"/><rect x="0" y="4" width="9" height="1" fill="#000"/><rect x="3" y="5" width="5" height="1" fill="#000"/><rect x="3" y="6" width="3" height="1" fill="#000"/><rect x="0" y="7" width="3" height="1" fill="#000"/><rect x="5" y="7" width="5" height="1" fill="#000"/><rect x="0" y="8" width="3" height="1" fill="#000"/><rect x="8" y="8" width="2" height="1" fill="#000"/><rect x="2" y="9" width="5" height="1" fill="#000"/><rect x="8" y="9" width="2" height="1" fill="#000"/><rect x="2" y="10" width="5" height="1" fill="#000"/><rect x="8" y="10" width="4" height="1" fill="#000"/><rect x="2" y="11" width="5" height="1" fill="#000"/><rect x="9" y="11" width="3" height="1" fill="#000"/></svg>
<div style="left:16px;top:499px;width:1px;height:1px;background:#868686;"></div>
<div style="left:18px;top:499px;width:1px;height:1px;background:#868686;"></div>
<div style="left:20px;top:499px;width:1px;height:1px;background:#868686;"></div>
<div style="left:22px;top:499px;width:1px;height:1px;background:#868686;"></div>
<div style="left:24px;top:499px;width:1px;height:1px;background:#868686;"></div>
<div style="left:26px;top:499px;width:1px;height:1px;background:#868686;"></div>
<svg style="left:29px;top:493px" width="13" height="13" viewBox="0 0 13 13" shape-rendering="crispEdges"><rect x="0" y="0" width="13" height="1" fill="#000"/><rect x="0" y="1" width="13" height="1" fill="#000"/><rect x="0" y="2" width="2" height="1" fill="#000"/><rect x="2" y="2" width="9" height="1" fill="#fff"/><rect x="11" y="2" width="2" height="1" fill="#000"/><rect x="0" y="3" width="2" height="1" fill="#000"/><rect x="2" y="3" width="7" height="1" fill="#fff"/><rect x="9" y="3" width="1" height="1" fill="#000"/><rect x="10" y="3" width="1" height="1" fill="#fff"/><rect x="11" y="3" width="2" height="1" fill="#000"/><rect x="0" y="4" width="2" height="1" fill="#000"/><rect x="2" y="4" width="6" height="1" fill="#fff"/><rect x="8" y="4" width="2" height="1" fill="#000"/><rect x="10" y="4" width="1" height="1" fill="#fff"/><rect x="11" y="4" width="2" height="1" fill="#000"/><rect x="0" y="5" width="2" height="1" fill="#000"/><rect x="2" y="5" width="1" height="1" fill="#fff"/><rect x="3" y="5" width="1" height="1" fill="#000"/><rect x="4" y="5" width="3" height="1" fill="#fff"/><rect x="7" y="5" width="3" height="1" fill="#000"/><rect x="10" y="5" width="1" height="1" fill="#fff"/><rect x="11" y="5" width="2" height="1" fill="#000"/><rect x="0" y="6" width="2" height="1" fill="#000"/><rect x="2" y="6" width="1" height="1" fill="#fff"/><rect x="3" y="6" width="2" height="1" fill="#000"/><rect x="5" y="6" width="1" height="1" fill="#fff"/><rect x="6" y="6" width="3" height="1" fill="#000"/><rect x="9" y="6" width="2" height="1" fill="#fff"/><rect x="11" y="6" width="2" height="1" fill="#000"/><rect x="0" y="7" width="2" height="1" fill="#000"/><rect x="2" y="7" width="1" height="1" fill="#fff"/><rect x="3" y="7" width="5" height="1" fill="#000"/><rect x="8" y="7" width="3" height="1" fill="#fff"/><rect x="11" y="7" width="2" height="1" fill="#000"/><rect x="0" y="8" width="2" height="1" fill="#000"/><rect x="2" y="8" width="2" height="1" fill="#fff"/><rect x="4" y="8" width="3" height="1" fill="#000"/><rect x="7" y="8" width="4" height="1" fill="#fff"/><rect x="11" y="8" width="2" height="1" fill="#000"/><rect x="0" y="9" width="2" height="1" fill="#000"/><rect x="2" y="9" width="3" height="1" fill="#fff"/><rect x="5" y="9" width="1" height="1" fill="#000"/><rect x="6" y="9" width="5" height="1" fill="#fff"/><rect x="11" y="9" width="2" height="1" fill="#000"/><rect x="0" y="10" width="2" height="1" fill="#000"/><rect x="2" y="10" width="9" height="1" fill="#fff"/><rect x="11" y="10" width="2" height="1" fill="#000"/><rect x="0" y="11" width="13" height="1" fill="#000"/><rect x="0" y="12" width="13" height="1" fill="#000"/></svg>
<svg style="left:46px;top:494px" width="11" height="10" viewBox="0 0 11 10" shape-rendering="crispEdges"><g fill="#000080"><rect x="4" y="0" width="3" height="1"/><rect x="4" y="1" width="5" height="7"/><rect x="9" y="2" width="1" height="4"/><rect x="4" y="8" width="3" height="1"/><rect x="0" y="2" width="4" height="1"/><rect x="0" y="5" width="4" height="1"/></g></svg>
<svg style="left:503px;top:473px" width="13" height="13" viewBox="0 0 13 13" shape-rendering="crispEdges"><rect x="0" y="0" width="12" height="1" fill="#868686"/><rect x="12" y="0" width="1" height="1" fill="#fff"/><rect x="0" y="1" width="1" height="1" fill="#868686"/><rect x="1" y="1" width="10" height="1" fill="#000"/><rect x="11" y="1" width="1" height="1" fill="#e0e0e0"/><rect x="12" y="1" width="1" height="1" fill="#fff"/><rect x="0" y="2" width="1" height="1" fill="#868686"/><rect x="1" y="2" width="1" height="1" fill="#000"/><rect x="2" y="2" width="9" height="1" fill="#fff"/><rect x="11" y="2" width="1" height="1" fill="#e0e0e0"/><rect x="12" y="2" width="1" height="1" fill="#fff"/><rect x="0" y="3" width="1" height="1" fill="#868686"/><rect x="1" y="3" width="1" height="1" fill="#000"/><rect x="2" y="3" width="7" height="1" fill="#fff"/><rect x="9" y="3" width="1" height="1" fill="#000"/><rect x="10" y="3" width="1" height="1" fill="#fff"/><rect x="11" y="3" width="1" height="1" fill="#e0e0e0"/><rect x="12" y="3" width="1" height="1" fill="#fff"/><rect x="0" y="4" width="1" height="1" fill="#868686"/><rect x="1" y="4" width="1" height="1" fill="#000"/><rect x="2" y="4" width="6" height="1" fill="#fff"/><rect x="8" y="4" width="2" height="1" fill="#000"/><rect x="10" y="4" width="1" height="1" fill="#fff"/><rect x="11" y="4" width="1" height="1" fill="#e0e0e0"/><rect x="12" y="4" width="1" height="1" fill="#fff"/><rect x="0" y="5" width="1" height="1" fill="#868686"/><rect x="1" y="5" width="1" height="1" fill="#000"/><rect x="2" y="5" width="1" height="1" fill="#fff"/><rect x="3" y="5" width="1" height="1" fill="#000"/><rect x="4" y="5" width="3" height="1" fill="#fff"/><rect x="7" y="5" width="3" height="1" fill="#000"/><rect x="10" y="5" width="1" height="1" fill="#fff"/><rect x="11" y="5" width="1" height="1" fill="#e0e0e0"/><rect x="12" y="5" width="1" height="1" fill="#fff"/><rect x="0" y="6" width="1" height="1" fill="#868686"/><rect x="1" y="6" width="1" height="1" fill="#000"/><rect x="2" y="6" width="1" height="1" fill="#fff"/><rect x="3" y="6" width="2" height="1" fill="#000"/><rect x="5" y="6" width="1" height="1" fill="#fff"/><rect x="6" y="6" width="3" height="1" fill="#000"/><rect x="9" y="6" width="2" height="1" fill="#fff"/><rect x="11" y="6" width="1" height="1" fill="#e0e0e0"/><rect x="12" y="6" width="1" height="1" fill="#fff"/><rect x="0" y="7" width="1" height="1" fill="#868686"/><rect x="1" y="7" width="1" height="1" fill="#000"/><rect x="2" y="7" width="1" height="1" fill="#fff"/><rect x="3" y="7" width="5" height="1" fill="#000"/><rect x="8" y="7" width="3" height="1" fill="#fff"/><rect x="11" y="7" width="1" height="1" fill="#e0e0e0"/><rect x="12" y="7" width="1" height="1" fill="#fff"/><rect x="0" y="8" width="1" height="1" fill="#868686"/><rect x="1" y="8" width="1" height="1" fill="#000"/><rect x="2" y="8" width="2" height="1" fill="#fff"/><rect x="4" y="8" width="3" height="1" fill="#000"/><rect x="7" y="8" width="4" height="1" fill="#fff"/><rect x="11" y="8" width="1" height="1" fill="#e0e0e0"/><rect x="12" y="8" width="1" height="1" fill="#fff"/><rect x="0" y="9" width="1" height="1" fill="#868686"/><rect x="1" y="9" width="1" height="1" fill="#000"/><rect x="2" y="9" width="3" height="1" fill="#fff"/><rect x="5" y="9" width="1" height="1" fill="#000"/><rect x="6" y="9" width="5" height="1" fill="#fff"/><rect x="11" y="9" width="1" height="1" fill="#e0e0e0"/><rect x="12" y="9" width="1" height="1" fill="#fff"/><rect x="0" y="10" width="1" height="1" fill="#868686"/><rect x="1" y="10" width="1" height="1" fill="#000"/><rect x="2" y="10" width="9" height="1" fill="#fff"/><rect x="11" y="10" width="1" height="1" fill="#e0e0e0"/><rect x="12" y="10" width="1" height="1" fill="#fff"/><rect x="0" y="11" width="1" height="1" fill="#868686"/><rect x="1" y="11" width="11" height="1" fill="#e0e0e0"/><rect x="12" y="11" width="1" height="1" fill="#fff"/><rect x="0" y="12" width="13" height="1" fill="#fff"/></svg>
<div style="left:524px;top:491px;width:1px;height:1px;background:#868686;"></div>
<div style="left:524px;top:493px;width:1px;height:1px;background:#868686;"></div>
<div style="left:520px;top:495px;width:9px;height:9px;background:#fff;"></div>
<div style="left:520px;top:495px;width:9px;height:1px;background:#868686;"></div>
<div style="left:520px;top:495px;width:1px;height:9px;background:#868686;"></div>
<div style="left:520px;top:503px;width:9px;height:1px;background:#868686;"></div>
<div style="left:528px;top:495px;width:1px;height:9px;background:#868686;"></div>
<div style="left:522px;top:499px;width:5px;height:1px;background:#000;"></div>
<div style="left:530px;top:499px;width:1px;height:1px;background:#868686;"></div>
<div style="left:532px;top:499px;width:1px;height:1px;background:#868686;"></div>
<div style="left:534px;top:499px;width:1px;height:1px;background:#868686;"></div>
<svg style="left:535px;top:491px" width="16" height="16" viewBox="0 0 16 16" shape-rendering="crispEdges"><rect x="0" y="0" width="16" height="1" fill="#00f"/><rect x="0" y="1" width="1" height="1" fill="#00f"/><rect x="1" y="1" width="14" height="1" fill="#fff"/><rect x="15" y="1" width="1" height="1" fill="#00f"/><rect x="0" y="2" width="1" height="1" fill="#00f"/><rect x="1" y="2" width="14" height="1" fill="#fff"/><rect x="15" y="2" width="1" height="1" fill="#00f"/><rect x="0" y="3" width="1" height="1" fill="#00f"/><rect x="1" y="3" width="2" height="1" fill="#fff"/><rect x="3" y="3" width="9" height="1" fill="#e0e0e0"/><rect x="12" y="3" width="3" height="1" fill="#fff"/><rect x="15" y="3" width="1" height="1" fill="#00f"/><rect x="0" y="4" width="1" height="1" fill="#00f"/><rect x="1" y="4" width="1" height="1" fill="#fff"/><rect x="2" y="4" width="10" height="1" fill="#c6c6c6"/><rect x="12" y="4" width="1" height="1" fill="#868686"/><rect x="13" y="4" width="2" height="1" fill="#fff"/><rect x="15" y="4" width="1" height="1" fill="#00f"/><rect x="0" y="5" width="1" height="1" fill="#00f"/><rect x="1" y="5" width="11" height="1" fill="#fff"/><rect x="12" y="5" width="1" height="1" fill="#e0e0e0"/><rect x="13" y="5" width="1" height="1" fill="#868686"/><rect x="14" y="5" width="1" height="1" fill="#fff"/><rect x="15" y="5" width="1" height="1" fill="#00f"/><rect x="0" y="6" width="1" height="1" fill="#00f"/><rect x="1" y="6" width="12" height="1" fill="#800000"/><rect x="13" y="6" width="1" height="1" fill="#e0e0e0"/><rect x="14" y="6" width="1" height="1" fill="#868686"/><rect x="15" y="6" width="1" height="1" fill="#00f"/><rect x="0" y="7" width="1" height="1" fill="#00f"/><rect x="1" y="7" width="4" height="1" fill="#800000"/><rect x="5" y="7" width="5" height="1" fill="#fff"/><rect x="10" y="7" width="4" height="1" fill="#800000"/><rect x="14" y="7" width="1" height="1" fill="#fff"/><rect x="15" y="7" width="1" height="1" fill="#00f"/><rect x="0" y="8" width="1" height="1" fill="#00f"/><rect x="1" y="8" width="3" height="1" fill="#800000"/><rect x="4" y="8" width="1" height="1" fill="#fff"/><rect x="5" y="8" width="10" height="1" fill="#800000"/><rect x="15" y="8" width="1" height="1" fill="#00f"/><rect x="0" y="9" width="1" height="1" fill="#00f"/><rect x="1" y="9" width="4" height="1" fill="#800000"/><rect x="5" y="9" width="4" height="1" fill="#fff"/><rect x="9" y="9" width="6" height="1" fill="#800000"/><rect x="15" y="9" width="1" height="1" fill="#00f"/><rect x="0" y="10" width="1" height="1" fill="#00f"/><rect x="1" y="10" width="8" height="1" fill="#800000"/><rect x="9" y="10" width="1" height="1" fill="#fff"/><rect x="10" y="10" width="4" height="1" fill="#800000"/><rect x="14" y="10" width="1" height="1" fill="#fff"/><rect x="15" y="10" width="1" height="1" fill="#00f"/><rect x="0" y="11" width="1" height="1" fill="#00f"/><rect x="1" y="11" width="3" height="1" fill="#800000"/><rect x="4" y="11" width="5" height="1" fill="#fff"/><rect x="9" y="11" width="4" height="1" fill="#800000"/><rect x="13" y="11" width="1" height="1" fill="#000"/><rect x="14" y="11" width="1" height="1" fill="#fff"/><rect x="15" y="11" width="1" height="1" fill="#00f"/><rect x="0" y="12" width="1" height="1" fill="#00f"/><rect x="1" y="12" width="12" height="1" fill="#000"/><rect x="13" y="12" width="2" height="1" fill="#fff"/><rect x="15" y="12" width="1" height="1" fill="#00f"/><rect x="0" y="13" width="1" height="1" fill="#00f"/><rect x="1" y="13" width="14" height="1" fill="#fff"/><rect x="15" y="13" width="1" height="1" fill="#00f"/><rect x="0" y="14" width="1" height="1" fill="#00f"/><rect x="1" y="14" width="14" height="1" fill="#fff"/><rect x="15" y="14" width="1" height="1" fill="#00f"/><rect x="0" y="15" width="16" height="1" fill="#00f"/></svg>
<div style="left:543px;top:507px;width:1px;height:1px;background:#868686;"></div>
<div style="left:543px;top:509px;width:1px;height:1px;background:#868686;"></div>
<div style="left:539px;top:511px;width:9px;height:9px;background:#fff;"></div>
<div style="left:539px;top:511px;width:9px;height:1px;background:#868686;"></div>
<div style="left:539px;top:511px;width:1px;height:9px;background:#868686;"></div>
<div style="left:539px;top:519px;width:9px;height:1px;background:#868686;"></div>
<div style="left:547px;top:511px;width:1px;height:9px;background:#868686;"></div>
<div style="left:541px;top:515px;width:5px;height:1px;background:#000;"></div>
<div style="left:549px;top:515px;width:1px;height:1px;background:#868686;"></div>
<div style="left:551px;top:515px;width:1px;height:1px;background:#868686;"></div>
<div style="left:553px;top:515px;width:1px;height:1px;background:#868686;"></div>
<svg style="left:554px;top:507px" width="16" height="16" viewBox="0 0 16 16" shape-rendering="crispEdges"><rect x="0" y="0" width="16" height="1" fill="#00f"/><rect x="0" y="1" width="1" height="1" fill="#00f"/><rect x="1" y="1" width="2" height="1" fill="#f00"/><rect x="3" y="1" width="3" height="1" fill="#fff"/><rect x="6" y="1" width="5" height="1" fill="#f00"/><rect x="11" y="1" width="4" height="1" fill="#fff"/><rect x="15" y="1" width="1" height="1" fill="#00f"/><rect x="0" y="2" width="1" height="1" fill="#00f"/><rect x="1" y="2" width="2" height="1" fill="#f00"/><rect x="3" y="2" width="3" height="1" fill="#fff"/><rect x="6" y="2" width="2" height="1" fill="#f00"/><rect x="8" y="2" width="1" height="1" fill="#fff"/><rect x="9" y="2" width="2" height="1" fill="#f00"/><rect x="11" y="2" width="4" height="1" fill="#fff"/><rect x="15" y="2" width="1" height="1" fill="#00f"/><rect x="0" y="3" width="1" height="1" fill="#00f"/><rect x="1" y="3" width="7" height="1" fill="#f00"/><rect x="8" y="3" width="2" height="1" fill="#fff"/><rect x="10" y="3" width="3" height="1" fill="#f00"/><rect x="13" y="3" width="2" height="1" fill="#fff"/><rect x="15" y="3" width="1" height="1" fill="#00f"/><rect x="0" y="4" width="1" height="1" fill="#00f"/><rect x="1" y="4" width="1" height="1" fill="#fff"/><rect x="2" y="4" width="5" height="1" fill="#f00"/><rect x="7" y="4" width="4" height="1" fill="#fff"/><rect x="11" y="4" width="2" height="1" fill="#f00"/><rect x="13" y="4" width="2" height="1" fill="#fff"/><rect x="15" y="4" width="1" height="1" fill="#00f"/><rect x="0" y="5" width="1" height="1" fill="#00f"/><rect x="1" y="5" width="6" height="1" fill="#fff"/><rect x="7" y="5" width="6" height="1" fill="#800000"/><rect x="13" y="5" width="2" height="1" fill="#fff"/><rect x="15" y="5" width="1" height="1" fill="#00f"/><rect x="0" y="6" width="1" height="1" fill="#00f"/><rect x="1" y="6" width="5" height="1" fill="#fff"/><rect x="6" y="6" width="8" height="1" fill="#800000"/><rect x="14" y="6" width="1" height="1" fill="#fff"/><rect x="15" y="6" width="1" height="1" fill="#00f"/><rect x="0" y="7" width="1" height="1" fill="#00f"/><rect x="1" y="7" width="4" height="1" fill="#fff"/><rect x="5" y="7" width="3" height="1" fill="#800000"/><rect x="8" y="7" width="1" height="1" fill="#e0ffff"/><rect x="9" y="7" width="2" height="1" fill="#800000"/><rect x="11" y="7" width="1" height="1" fill="#e0ffff"/><rect x="12" y="7" width="3" height="1" fill="#800000"/><rect x="15" y="7" width="1" height="1" fill="#00f"/><rect x="0" y="8" width="1" height="1" fill="#00f"/><rect x="1" y="8" width="4" height="1" fill="#fff"/><rect x="5" y="8" width="3" height="1" fill="#800000"/><rect x="8" y="8" width="1" height="1" fill="#e0ffff"/><rect x="9" y="8" width="2" height="1" fill="#800000"/><rect x="11" y="8" width="1" height="1" fill="#e0ffff"/><rect x="12" y="8" width="3" height="1" fill="#800000"/><rect x="15" y="8" width="1" height="1" fill="#00f"/><rect x="0" y="9" width="1" height="1" fill="#00f"/><rect x="1" y="9" width="3" height="1" fill="#fff"/><rect x="4" y="9" width="4" height="1" fill="#800000"/><rect x="8" y="9" width="1" height="1" fill="#e0ffff"/><rect x="9" y="9" width="2" height="1" fill="#800000"/><rect x="11" y="9" width="1" height="1" fill="#e0ffff"/><rect x="12" y="9" width="3" height="1" fill="#800000"/><rect x="15" y="9" width="1" height="1" fill="#00f"/><rect x="0" y="10" width="1" height="1" fill="#00f"/><rect x="1" y="10" width="3" height="1" fill="#fff"/><rect x="4" y="10" width="4" height="1" fill="#800000"/><rect x="8" y="10" width="1" height="1" fill="#e0ffff"/><rect x="9" y="10" width="2" height="1" fill="#800000"/><rect x="11" y="10" width="1" height="1" fill="#e0ffff"/><rect x="12" y="10" width="3" height="1" fill="#800000"/><rect x="15" y="10" width="1" height="1" fill="#00f"/><rect x="0" y="11" width="1" height="1" fill="#00f"/><rect x="1" y="11" width="4" height="1" fill="#fff"/><rect x="5" y="11" width="3" height="1" fill="#800000"/><rect x="8" y="11" width="1" height="1" fill="#e0ffff"/><rect x="9" y="11" width="2" height="1" fill="#800000"/><rect x="11" y="11" width="1" height="1" fill="#e0ffff"/><rect x="12" y="11" width="3" height="1" fill="#800000"/><rect x="15" y="11" width="1" height="1" fill="#00f"/><rect x="0" y="12" width="1" height="1" fill="#00f"/><rect x="1" y="12" width="4" height="1" fill="#fff"/><rect x="5" y="12" width="3" height="1" fill="#800000"/><rect x="8" y="12" width="1" height="1" fill="#e0ffff"/><rect x="9" y="12" width="2" height="1" fill="#800000"/><rect x="11" y="12" width="1" height="1" fill="#e0ffff"/><rect x="12" y="12" width="2" height="1" fill="#800000"/><rect x="14" y="12" width="1" height="1" fill="#fff"/><rect x="15" y="12" width="1" height="1" fill="#00f"/><rect x="0" y="13" width="1" height="1" fill="#00f"/><rect x="1" y="13" width="5" height="1" fill="#fff"/><rect x="6" y="13" width="7" height="1" fill="#800000"/><rect x="13" y="13" width="2" height="1" fill="#fff"/><rect x="15" y="13" width="1" height="1" fill="#00f"/><rect x="0" y="14" width="1" height="1" fill="#00f"/><rect x="1" y="14" width="6" height="1" fill="#fff"/><rect x="7" y="14" width="5" height="1" fill="#800000"/><rect x="12" y="14" width="3" height="1" fill="#fff"/><rect x="15" y="14" width="1" height="1" fill="#00f"/><rect x="0" y="15" width="16" height="1" fill="#00f"/></svg>
<div style="left:562px;top:523px;width:1px;height:1px;background:#868686;"></div>
<div style="left:562px;top:525px;width:1px;height:1px;background:#868686;"></div>
<div style="left:562px;top:527px;width:1px;height:1px;background:#868686;"></div>
<div style="left:562px;top:529px;width:1px;height:1px;background:#868686;"></div>
<div style="left:562px;top:531px;width:1px;height:1px;background:#868686;"></div>
<div style="left:562px;top:533px;width:1px;height:1px;background:#868686;"></div>
<div style="left:562px;top:535px;width:1px;height:1px;background:#868686;"></div>
<div style="left:562px;top:537px;width:1px;height:1px;background:#868686;"></div>
<div style="left:562px;top:539px;width:1px;height:1px;background:#868686;"></div>
<div style="left:562px;top:541px;width:1px;height:1px;background:#868686;"></div>
<div style="left:562px;top:543px;width:1px;height:1px;background:#868686;"></div>
<div style="left:562px;top:545px;width:1px;height:1px;background:#868686;"></div>
<div style="left:562px;top:547px;width:1px;height:1px;background:#868686;"></div>
<div style="left:562px;top:549px;width:1px;height:1px;background:#868686;"></div>
<div style="left:562px;top:551px;width:1px;height:1px;background:#868686;"></div>
<div style="left:562px;top:553px;width:1px;height:1px;background:#868686;"></div>
<div style="left:562px;top:555px;width:1px;height:1px;background:#868686;"></div>
<div style="left:562px;top:557px;width:1px;height:1px;background:#868686;"></div>
<div style="left:562px;top:559px;width:1px;height:1px;background:#868686;"></div>
<div style="left:562px;top:561px;width:1px;height:1px;background:#868686;"></div>
<div style="left:562px;top:563px;width:1px;height:1px;background:#868686;"></div>
<div style="left:562px;top:565px;width:1px;height:1px;background:#868686;"></div>
<div style="left:562px;top:567px;width:1px;height:1px;background:#868686;"></div>
<div style="left:562px;top:569px;width:1px;height:1px;background:#868686;"></div>
<div style="left:562px;top:571px;width:1px;height:1px;background:#868686;"></div>
<div style="left:562px;top:573px;width:1px;height:1px;background:#868686;"></div>
<div style="left:562px;top:575px;width:1px;height:1px;background:#868686;"></div>
<div style="left:562px;top:577px;width:1px;height:1px;background:#868686;"></div>
<div style="left:562px;top:579px;width:1px;height:1px;background:#868686;"></div>
<div style="left:563px;top:531px;width:1px;height:1px;background:#868686;"></div>
<div style="left:565px;top:531px;width:1px;height:1px;background:#868686;"></div>
<div style="left:567px;top:531px;width:1px;height:1px;background:#868686;"></div>
<div style="left:569px;top:531px;width:1px;height:1px;background:#868686;"></div>
<div style="left:571px;top:531px;width:1px;height:1px;background:#868686;"></div>
<div style="left:573px;top:531px;width:1px;height:1px;background:#868686;"></div>
<svg style="left:575px;top:525px" width="12" height="12" viewBox="0 0 12 12" shape-rendering="crispEdges"><rect x="2" y="0" width="7" height="1" fill="#000"/><rect x="2" y="1" width="1" height="1" fill="#000"/><rect x="3" y="1" width="1" height="1" fill="#fff"/><rect x="4" y="1" width="1" height="1" fill="#e0e0e0"/><rect x="5" y="1" width="1" height="1" fill="#fff"/><rect x="6" y="1" width="1" height="1" fill="#e0e0e0"/><rect x="7" y="1" width="1" height="1" fill="#fff"/><rect x="8" y="1" width="1" height="1" fill="#e0e0e0"/><rect x="9" y="1" width="1" height="1" fill="#000"/><rect x="2" y="2" width="1" height="1" fill="#000"/><rect x="3" y="2" width="1" height="1" fill="#e0e0e0"/><rect x="4" y="2" width="1" height="1" fill="#fff"/><rect x="5" y="2" width="1" height="1" fill="#e0e0e0"/><rect x="6" y="2" width="1" height="1" fill="#fff"/><rect x="7" y="2" width="1" height="1" fill="#e0e0e0"/><rect x="8" y="2" width="1" height="1" fill="#fff"/><rect x="9" y="2" width="2" height="1" fill="#000"/><rect x="2" y="3" width="1" height="1" fill="#000"/><rect x="3" y="3" width="1" height="1" fill="#fff"/><rect x="4" y="3" width="1" height="1" fill="#e0e0e0"/><rect x="5" y="3" width="1" height="1" fill="#fff"/><rect x="6" y="3" width="1" height="1" fill="#e0e0e0"/><rect x="7" y="3" width="1" height="1" fill="#fff"/><rect x="8" y="3" width="1" height="1" fill="#e0e0e0"/><rect x="9" y="3" width="1" height="1" fill="#fff"/><rect x="10" y="3" width="1" height="1" fill="#000"/><rect x="0" y="4" width="3" height="1" fill="#000"/><rect x="3" y="4" width="1" height="1" fill="#e0e0e0"/><rect x="4" y="4" width="1" height="1" fill="#fff"/><rect x="5" y="4" width="4" height="1" fill="#000"/><rect x="9" y="4" width="1" height="1" fill="#e0e0e0"/><rect x="10" y="4" width="1" height="1" fill="#000"/><rect x="0" y="5" width="3" height="1" fill="#000"/><rect x="3" y="5" width="1" height="1" fill="#fff"/><rect x="4" y="5" width="1" height="1" fill="#e0e0e0"/><rect x="5" y="5" width="4" height="1" fill="#000"/><rect x="9" y="5" width="1" height="1" fill="#fff"/><rect x="10" y="5" width="1" height="1" fill="#000"/><rect x="2" y="6" width="1" height="1" fill="#000"/><rect x="3" y="6" width="1" height="1" fill="#e0e0e0"/><rect x="4" y="6" width="1" height="1" fill="#fff"/><rect x="5" y="6" width="1" height="1" fill="#000"/><rect x="6" y="6" width="1" height="1" fill="#e0e0e0"/><rect x="7" y="6" width="1" height="1" fill="#fff"/><rect x="8" y="6" width="1" height="1" fill="#000"/><rect x="9" y="6" width="1" height="1" fill="#e0e0e0"/><rect x="10" y="6" width="1" height="1" fill="#000"/><rect x="1" y="7" width="5" height="1" fill="#000"/><rect x="6" y="7" width="1" height="1" fill="#e0e0e0"/><rect x="7" y="7" width="1" height="1" fill="#fff"/><rect x="8" y="7" width="4" height="1" fill="#000"/><rect x="1" y="8" width="5" height="1" fill="#000"/><rect x="6" y="8" width="1" height="1" fill="#fff"/><rect x="7" y="8" width="1" height="1" fill="#e0e0e0"/><rect x="8" y="8" width="4" height="1" fill="#000"/><rect x="2" y="9" width="1" height="1" fill="#000"/><rect x="3" y="9" width="1" height="1" fill="#fff"/><rect x="4" y="9" width="1" height="1" fill="#e0e0e0"/><rect x="5" y="9" width="1" height="1" fill="#fff"/><rect x="6" y="9" width="1" height="1" fill="#e0e0e0"/><rect x="7" y="9" width="1" height="1" fill="#fff"/><rect x="8" y="9" width="1" height="1" fill="#e0e0e0"/><rect x="9" y="9" width="1" height="1" fill="#fff"/><rect x="10" y="9" width="1" height="1" fill="#000"/><rect x="2" y="10" width="1" height="1" fill="#000"/><rect x="3" y="10" width="1" height="1" fill="#e0e0e0"/><rect x="4" y="10" width="1" height="1" fill="#fff"/><rect x="5" y="10" width="1" height="1" fill="#e0e0e0"/><rect x="6" y="10" width="1" height="1" fill="#fff"/><rect x="7" y="10" width="1" height="1" fill="#e0e0e0"/><rect x="8" y="10" width="1" height="1" fill="#fff"/><rect x="9" y="10" width="1" height="1" fill="#e0e0e0"/><rect x="10" y="10" width="1" height="1" fill="#000"/><rect x="2" y="11" width="9" height="1" fill="#000"/></svg>
<div style="left:563px;top:547px;width:1px;height:1px;background:#868686;"></div>
<div style="left:565px;top:547px;width:1px;height:1px;background:#868686;"></div>
<div style="left:567px;top:547px;width:1px;height:1px;background:#868686;"></div>
<div style="left:569px;top:547px;width:1px;height:1px;background:#868686;"></div>
<div style="left:571px;top:547px;width:1px;height:1px;background:#868686;"></div>
<div style="left:573px;top:547px;width:1px;height:1px;background:#868686;"></div>
<svg style="left:575px;top:541px" width="12" height="12" viewBox="0 0 12 12" shape-rendering="crispEdges"><rect x="2" y="0" width="7" height="1" fill="#000"/><rect x="2" y="1" width="1" height="1" fill="#000"/><rect x="3" y="1" width="1" height="1" fill="#fff"/><rect x="4" y="1" width="1" height="1" fill="#e0e0e0"/><rect x="5" y="1" width="1" height="1" fill="#fff"/><rect x="6" y="1" width="1" height="1" fill="#e0e0e0"/><rect x="7" y="1" width="1" height="1" fill="#fff"/><rect x="8" y="1" width="1" height="1" fill="#e0e0e0"/><rect x="9" y="1" width="1" height="1" fill="#000"/><rect x="2" y="2" width="1" height="1" fill="#000"/><rect x="3" y="2" width="1" height="1" fill="#e0e0e0"/><rect x="4" y="2" width="1" height="1" fill="#fff"/><rect x="5" y="2" width="1" height="1" fill="#e0e0e0"/><rect x="6" y="2" width="1" height="1" fill="#fff"/><rect x="7" y="2" width="1" height="1" fill="#e0e0e0"/><rect x="8" y="2" width="1" height="1" fill="#fff"/><rect x="9" y="2" width="2" height="1" fill="#000"/><rect x="2" y="3" width="1" height="1" fill="#000"/><rect x="3" y="3" width="1" height="1" fill="#fff"/><rect x="4" y="3" width="1" height="1" fill="#e0e0e0"/><rect x="5" y="3" width="1" height="1" fill="#fff"/><rect x="6" y="3" width="1" height="1" fill="#e0e0e0"/><rect x="7" y="3" width="1" height="1" fill="#fff"/><rect x="8" y="3" width="1" height="1" fill="#e0e0e0"/><rect x="9" y="3" width="1" height="1" fill="#fff"/><rect x="10" y="3" width="1" height="1" fill="#000"/><rect x="0" y="4" width="3" height="1" fill="#000"/><rect x="3" y="4" width="1" height="1" fill="#e0e0e0"/><rect x="4" y="4" width="1" height="1" fill="#fff"/><rect x="5" y="4" width="4" height="1" fill="#000"/><rect x="9" y="4" width="1" height="1" fill="#e0e0e0"/><rect x="10" y="4" width="1" height="1" fill="#000"/><rect x="0" y="5" width="3" height="1" fill="#000"/><rect x="3" y="5" width="1" height="1" fill="#fff"/><rect x="4" y="5" width="1" height="1" fill="#e0e0e0"/><rect x="5" y="5" width="4" height="1" fill="#000"/><rect x="9" y="5" width="1" height="1" fill="#fff"/><rect x="10" y="5" width="1" height="1" fill="#000"/><rect x="2" y="6" width="1" height="1" fill="#000"/><rect x="3" y="6" width="1" height="1" fill="#e0e0e0"/><rect x="4" y="6" width="1" height="1" fill="#fff"/><rect x="5" y="6" width="1" height="1" fill="#000"/><rect x="6" y="6" width="1" height="1" fill="#e0e0e0"/><rect x="7" y="6" width="1" height="1" fill="#fff"/><rect x="8" y="6" width="1" height="1" fill="#000"/><rect x="9" y="6" width="1" height="1" fill="#e0e0e0"/><rect x="10" y="6" width="1" height="1" fill="#000"/><rect x="1" y="7" width="5" height="1" fill="#000"/><rect x="6" y="7" width="1" height="1" fill="#e0e0e0"/><rect x="7" y="7" width="1" height="1" fill="#fff"/><rect x="8" y="7" width="4" height="1" fill="#000"/><rect x="1" y="8" width="5" height="1" fill="#000"/><rect x="6" y="8" width="1" height="1" fill="#fff"/><rect x="7" y="8" width="1" height="1" fill="#e0e0e0"/><rect x="8" y="8" width="4" height="1" fill="#000"/><rect x="2" y="9" width="1" height="1" fill="#000"/><rect x="3" y="9" width="1" height="1" fill="#fff"/><rect x="4" y="9" width="1" height="1" fill="#e0e0e0"/><rect x="5" y="9" width="1" height="1" fill="#fff"/><rect x="6" y="9" width="1" height="1" fill="#e0e0e0"/><rect x="7" y="9" width="1" height="1" fill="#fff"/><rect x="8" y="9" width="1" height="1" fill="#e0e0e0"/><rect x="9" y="9" width="1" height="1" fill="#fff"/><rect x="10" y="9" width="1" height="1" fill="#000"/><rect x="2" y="10" width="1" height="1" fill="#000"/><rect x="3" y="10" width="1" height="1" fill="#e0e0e0"/><rect x="4" y="10" width="1" height="1" fill="#fff"/><rect x="5" y="10" width="1" height="1" fill="#e0e0e0"/><rect x="6" y="10" width="1" height="1" fill="#fff"/><rect x="7" y="10" width="1" height="1" fill="#e0e0e0"/><rect x="8" y="10" width="1" height="1" fill="#fff"/><rect x="9" y="10" width="1" height="1" fill="#e0e0e0"/><rect x="10" y="10" width="1" height="1" fill="#000"/><rect x="2" y="11" width="9" height="1" fill="#000"/></svg>
<div style="left:563px;top:563px;width:1px;height:1px;background:#868686;"></div>
<div style="left:565px;top:563px;width:1px;height:1px;background:#868686;"></div>
<div style="left:567px;top:563px;width:1px;height:1px;background:#868686;"></div>
<div style="left:569px;top:563px;width:1px;height:1px;background:#868686;"></div>
<div style="left:571px;top:563px;width:1px;height:1px;background:#868686;"></div>
<div style="left:573px;top:563px;width:1px;height:1px;background:#868686;"></div>
<svg style="left:573px;top:555px" width="16" height="16" viewBox="0 0 16 16" shape-rendering="crispEdges"><rect x="0" y="0" width="16" height="1" fill="#00f"/><rect x="0" y="1" width="1" height="1" fill="#00f"/><rect x="1" y="1" width="14" height="1" fill="#fff"/><rect x="15" y="1" width="1" height="1" fill="#00f"/><rect x="0" y="2" width="1" height="1" fill="#00f"/><rect x="1" y="2" width="2" height="1" fill="#fff"/><rect x="3" y="2" width="7" height="1" fill="#000"/><rect x="10" y="2" width="5" height="1" fill="#fff"/><rect x="15" y="2" width="1" height="1" fill="#00f"/><rect x="0" y="3" width="1" height="1" fill="#00f"/><rect x="1" y="3" width="2" height="1" fill="#fff"/><rect x="3" y="3" width="1" height="1" fill="#000"/><rect x="4" y="3" width="1" height="1" fill="#fff"/><rect x="5" y="3" width="1" height="1" fill="#e0e0e0"/><rect x="6" y="3" width="1" height="1" fill="#fff"/><rect x="7" y="3" width="1" height="1" fill="#e0e0e0"/><rect x="8" y="3" width="1" height="1" fill="#fff"/><rect x="9" y="3" width="1" height="1" fill="#e0e0e0"/><rect x="10" y="3" width="1" height="1" fill="#000"/><rect x="11" y="3" width="4" height="1" fill="#fff"/><rect x="15" y="3" width="1" height="1" fill="#00f"/><rect x="0" y="4" width="1" height="1" fill="#00f"/><rect x="1" y="4" width="2" height="1" fill="#fff"/><rect x="3" y="4" width="1" height="1" fill="#000"/><rect x="4" y="4" width="1" height="1" fill="#e0e0e0"/><rect x="5" y="4" width="1" height="1" fill="#fff"/><rect x="6" y="4" width="1" height="1" fill="#e0e0e0"/><rect x="7" y="4" width="1" height="1" fill="#fff"/><rect x="8" y="4" width="1" height="1" fill="#e0e0e0"/><rect x="9" y="4" width="1" height="1" fill="#fff"/><rect x="10" y="4" width="2" height="1" fill="#000"/><rect x="12" y="4" width="3" height="1" fill="#fff"/><rect x="15" y="4" width="1" height="1" fill="#00f"/><rect x="0" y="5" width="1" height="1" fill="#00f"/><rect x="1" y="5" width="2" height="1" fill="#fff"/><rect x="3" y="5" width="1" height="1" fill="#000"/><rect x="4" y="5" width="1" height="1" fill="#fff"/><rect x="5" y="5" width="1" height="1" fill="#e0e0e0"/><rect x="6" y="5" width="1" height="1" fill="#fff"/><rect x="7" y="5" width="1" height="1" fill="#e0e0e0"/><rect x="8" y="5" width="1" height="1" fill="#fff"/><rect x="9" y="5" width="1" height="1" fill="#e0e0e0"/><rect x="10" y="5" width="1" height="1" fill="#fff"/><rect x="11" y="5" width="1" height="1" fill="#000"/><rect x="12" y="5" width="3" height="1" fill="#fff"/><rect x="15" y="5" width="1" height="1" fill="#00f"/><rect x="0" y="6" width="1" height="1" fill="#00f"/><rect x="1" y="6" width="2" height="1" fill="#f00"/><rect x="3" y="6" width="1" height="1" fill="#000"/><rect x="4" y="6" width="1" height="1" fill="#e0e0e0"/><rect x="5" y="6" width="1" height="1" fill="#fff"/><rect x="6" y="6" width="4" height="1" fill="#f00"/><rect x="10" y="6" width="1" height="1" fill="#e0e0e0"/><rect x="11" y="6" width="1" height="1" fill="#000"/><rect x="12" y="6" width="3" height="1" fill="#fff"/><rect x="15" y="6" width="1" height="1" fill="#00f"/><rect x="0" y="7" width="1" height="1" fill="#00f"/><rect x="1" y="7" width="2" height="1" fill="#f00"/><rect x="3" y="7" width="1" height="1" fill="#000"/><rect x="4" y="7" width="1" height="1" fill="#fff"/><rect x="5" y="7" width="1" height="1" fill="#e0e0e0"/><rect x="6" y="7" width="4" height="1" fill="#f00"/><rect x="10" y="7" width="1" height="1" fill="#fff"/><rect x="11" y="7" width="1" height="1" fill="#000"/><rect x="12" y="7" width="3" height="1" fill="#fff"/><rect x="15" y="7" width="1" height="1" fill="#00f"/><rect x="0" y="8" width="1" height="1" fill="#00f"/><rect x="1" y="8" width="2" height="1" fill="#fff"/><rect x="3" y="8" width="1" height="1" fill="#000"/><rect x="4" y="8" width="1" height="1" fill="#e0e0e0"/><rect x="5" y="8" width="1" height="1" fill="#fff"/><rect x="6" y="8" width="1" height="1" fill="#f00"/><rect x="7" y="8" width="1" height="1" fill="#e0e0e0"/><rect x="8" y="8" width="1" height="1" fill="#fff"/><rect x="9" y="8" width="1" height="1" fill="#f00"/><rect x="10" y="8" width="1" height="1" fill="#e0e0e0"/><rect x="11" y="8" width="1" height="1" fill="#000"/><rect x="12" y="8" width="3" height="1" fill="#fff"/><rect x="15" y="8" width="1" height="1" fill="#00f"/><rect x="0" y="9" width="1" height="1" fill="#00f"/><rect x="1" y="9" width="1" height="1" fill="#fff"/><rect x="2" y="9" width="5" height="1" fill="#f00"/><rect x="7" y="9" width="1" height="1" fill="#e0e0e0"/><rect x="8" y="9" width="1" height="1" fill="#fff"/><rect x="9" y="9" width="4" height="1" fill="#f00"/><rect x="13" y="9" width="2" height="1" fill="#fff"/><rect x="15" y="9" width="1" height="1" fill="#00f"/><rect x="0" y="10" width="1" height="1" fill="#00f"/><rect x="1" y="10" width="1" height="1" fill="#fff"/><rect x="2" y="10" width="5" height="1" fill="#f00"/><rect x="7" y="10" width="1" height="1" fill="#fff"/><rect x="8" y="10" width="1" height="1" fill="#e0e0e0"/><rect x="9" y="10" width="4" height="1" fill="#f00"/><rect x="13" y="10" width="2" height="1" fill="#fff"/><rect x="15" y="10" width="1" height="1" fill="#00f"/><rect x="0" y="11" width="1" height="1" fill="#00f"/><rect x="1" y="11" width="2" height="1" fill="#fff"/><rect x="3" y="11" width="1" height="1" fill="#000"/><rect x="4" y="11" width="1" height="1" fill="#fff"/><rect x="5" y="11" width="1" height="1" fill="#e0e0e0"/><rect x="6" y="11" width="1" height="1" fill="#fff"/><rect x="7" y="11" width="1" height="1" fill="#e0e0e0"/><rect x="8" y="11" width="1" height="1" fill="#fff"/><rect x="9" y="11" width="1" height="1" fill="#e0e0e0"/><rect x="10" y="11" width="1" height="1" fill="#fff"/><rect x="11" y="11" width="1" height="1" fill="#000"/><rect x="12" y="11" width="3" height="1" fill="#fff"/><rect x="15" y="11" width="1" height="1" fill="#00f"/><rect x="0" y="12" width="1" height="1" fill="#00f"/><rect x="1" y="12" width="2" height="1" fill="#fff"/><rect x="3" y="12" width="1" height="1" fill="#000"/><rect x="4" y="12" width="1" height="1" fill="#e0e0e0"/><rect x="5" y="12" width="1" height="1" fill="#fff"/><rect x="6" y="12" width="1" height="1" fill="#e0e0e0"/><rect x="7" y="12" width="1" height="1" fill="#fff"/><rect x="8" y="12" width="1" height="1" fill="#e0e0e0"/><rect x="9" y="12" width="1" height="1" fill="#fff"/><rect x="10" y="12" width="1" height="1" fill="#e0e0e0"/><rect x="11" y="12" width="1" height="1" fill="#000"/><rect x="12" y="12" width="3" height="1" fill="#fff"/><rect x="15" y="12" width="1" height="1" fill="#00f"/><rect x="0" y="13" width="1" height="1" fill="#00f"/><rect x="1" y="13" width="2" height="1" fill="#fff"/><rect x="3" y="13" width="9" height="1" fill="#000"/><rect x="12" y="13" width="3" height="1" fill="#fff"/><rect x="15" y="13" width="1" height="1" fill="#00f"/><rect x="0" y="14" width="1" height="1" fill="#00f"/><rect x="1" y="14" width="14" height="1" fill="#fff"/><rect x="15" y="14" width="1" height="1" fill="#00f"/><rect x="0" y="15" width="16" height="1" fill="#00f"/></svg>
<div style="left:563px;top:579px;width:1px;height:1px;background:#868686;"></div>
<div style="left:565px;top:579px;width:1px;height:1px;background:#868686;"></div>
<div style="left:567px;top:579px;width:1px;height:1px;background:#868686;"></div>
<div style="left:569px;top:579px;width:1px;height:1px;background:#868686;"></div>
<div style="left:571px;top:579px;width:1px;height:1px;background:#868686;"></div>
<div style="left:573px;top:579px;width:1px;height:1px;background:#868686;"></div>
<svg style="left:575px;top:573px" width="12" height="12" viewBox="0 0 12 12" shape-rendering="crispEdges"><rect x="2" y="0" width="7" height="1" fill="#000"/><rect x="2" y="1" width="1" height="1" fill="#000"/><rect x="3" y="1" width="1" height="1" fill="#fff"/><rect x="4" y="1" width="1" height="1" fill="#e0e0e0"/><rect x="5" y="1" width="1" height="1" fill="#fff"/><rect x="6" y="1" width="1" height="1" fill="#e0e0e0"/><rect x="7" y="1" width="1" height="1" fill="#fff"/><rect x="8" y="1" width="1" height="1" fill="#e0e0e0"/><rect x="9" y="1" width="1" height="1" fill="#000"/><rect x="2" y="2" width="1" height="1" fill="#000"/><rect x="3" y="2" width="1" height="1" fill="#e0e0e0"/><rect x="4" y="2" width="1" height="1" fill="#fff"/><rect x="5" y="2" width="1" height="1" fill="#e0e0e0"/><rect x="6" y="2" width="1" height="1" fill="#fff"/><rect x="7" y="2" width="1" height="1" fill="#e0e0e0"/><rect x="8" y="2" width="1" height="1" fill="#fff"/><rect x="9" y="2" width="2" height="1" fill="#000"/><rect x="2" y="3" width="1" height="1" fill="#000"/><rect x="3" y="3" width="1" height="1" fill="#fff"/><rect x="4" y="3" width="1" height="1" fill="#e0e0e0"/><rect x="5" y="3" width="1" height="1" fill="#fff"/><rect x="6" y="3" width="1" height="1" fill="#e0e0e0"/><rect x="7" y="3" width="1" height="1" fill="#fff"/><rect x="8" y="3" width="1" height="1" fill="#e0e0e0"/><rect x="9" y="3" width="1" height="1" fill="#fff"/><rect x="10" y="3" width="1" height="1" fill="#000"/><rect x="0" y="4" width="3" height="1" fill="#000"/><rect x="3" y="4" width="1" height="1" fill="#e0e0e0"/><rect x="4" y="4" width="1" height="1" fill="#fff"/><rect x="5" y="4" width="4" height="1" fill="#000"/><rect x="9" y="4" width="1" height="1" fill="#e0e0e0"/><rect x="10" y="4" width="1" height="1" fill="#000"/><rect x="0" y="5" width="3" height="1" fill="#000"/><rect x="3" y="5" width="1" height="1" fill="#fff"/><rect x="4" y="5" width="1" height="1" fill="#e0e0e0"/><rect x="5" y="5" width="4" height="1" fill="#000"/><rect x="9" y="5" width="1" height="1" fill="#fff"/><rect x="10" y="5" width="1" height="1" fill="#000"/><rect x="2" y="6" width="1" height="1" fill="#000"/><rect x="3" y="6" width="1" height="1" fill="#e0e0e0"/><rect x="4" y="6" width="1" height="1" fill="#fff"/><rect x="5" y="6" width="1" height="1" fill="#000"/><rect x="6" y="6" width="1" height="1" fill="#e0e0e0"/><rect x="7" y="6" width="1" height="1" fill="#fff"/><rect x="8" y="6" width="1" height="1" fill="#000"/><rect x="9" y="6" width="1" height="1" fill="#e0e0e0"/><rect x="10" y="6" width="1" height="1" fill="#000"/><rect x="1" y="7" width="5" height="1" fill="#000"/><rect x="6" y="7" width="1" height="1" fill="#e0e0e0"/><rect x="7" y="7" width="1" height="1" fill="#fff"/><rect x="8" y="7" width="4" height="1" fill="#000"/><rect x="1" y="8" width="5" height="1" fill="#000"/><rect x="6" y="8" width="1" height="1" fill="#fff"/><rect x="7" y="8" width="1" height="1" fill="#e0e0e0"/><rect x="8" y="8" width="4" height="1" fill="#000"/><rect x="2" y="9" width="1" height="1" fill="#000"/><rect x="3" y="9" width="1" height="1" fill="#fff"/><rect x="4" y="9" width="1" height="1" fill="#e0e0e0"/><rect x="5" y="9" width="1" height="1" fill="#fff"/><rect x="6" y="9" width="1" height="1" fill="#e0e0e0"/><rect x="7" y="9" width="1" height="1" fill="#fff"/><rect x="8" y="9" width="1" height="1" fill="#e0e0e0"/><rect x="9" y="9" width="1" height="1" fill="#fff"/><rect x="10" y="9" width="1" height="1" fill="#000"/><rect x="2" y="10" width="1" height="1" fill="#000"/><rect x="3" y="10" width="1" height="1" fill="#e0e0e0"/><rect x="4" y="10" width="1" height="1" fill="#fff"/><rect x="5" y="10" width="1" height="1" fill="#e0e0e0"/><rect x="6" y="10" width="1" height="1" fill="#fff"/><rect x="7" y="10" width="1" height="1" fill="#e0e0e0"/><rect x="8" y="10" width="1" height="1" fill="#fff"/><rect x="9" y="10" width="1" height="1" fill="#e0e0e0"/><rect x="10" y="10" width="1" height="1" fill="#000"/><rect x="2" y="11" width="9" height="1" fill="#000"/></svg>
<svg style="left:15px;top:444px" width="16" height="15" viewBox="0 0 16 15" shape-rendering="crispEdges"><rect x="2" y="0" width="14" height="1" fill="#000080"/><rect x="2" y="1" width="14" height="1" fill="#000080"/><rect x="2" y="2" width="1" height="1" fill="#000"/><rect x="3" y="2" width="12" height="1" fill="#fff"/><rect x="15" y="2" width="1" height="1" fill="#000"/><rect x="2" y="3" width="1" height="1" fill="#000"/><rect x="3" y="3" width="2" height="1" fill="#fff"/><rect x="5" y="3" width="4" height="1" fill="#000"/><rect x="9" y="3" width="6" height="1" fill="#fff"/><rect x="15" y="3" width="1" height="1" fill="#000"/><rect x="2" y="4" width="1" height="1" fill="#000"/><rect x="3" y="4" width="1" height="1" fill="#fff"/><rect x="4" y="4" width="1" height="1" fill="#000"/><rect x="5" y="4" width="3" height="1" fill="#808000"/><rect x="8" y="4" width="3" height="1" fill="#000"/><rect x="11" y="4" width="4" height="1" fill="#fff"/><rect x="15" y="4" width="1" height="1" fill="#000"/><rect x="2" y="5" width="1" height="1" fill="#000"/><rect x="3" y="5" width="2" height="1" fill="#fff"/><rect x="5" y="5" width="2" height="1" fill="#000"/><rect x="7" y="5" width="4" height="1" fill="#808000"/><rect x="11" y="5" width="1" height="1" fill="#000"/><rect x="12" y="5" width="3" height="1" fill="#fff"/><rect x="15" y="5" width="1" height="1" fill="#000"/><rect x="2" y="6" width="1" height="1" fill="#000"/><rect x="3" y="6" width="4" height="1" fill="#fff"/><rect x="7" y="6" width="1" height="1" fill="#000"/><rect x="8" y="6" width="4" height="1" fill="#808000"/><rect x="12" y="6" width="1" height="1" fill="#000"/><rect x="13" y="6" width="2" height="1" fill="#fff"/><rect x="15" y="6" width="1" height="1" fill="#000"/><rect x="2" y="7" width="1" height="1" fill="#000"/><rect x="3" y="7" width="4" height="1" fill="#fff"/><rect x="7" y="7" width="1" height="1" fill="#800000"/><rect x="8" y="7" width="1" height="1" fill="#000"/><rect x="9" y="7" width="4" height="1" fill="#808000"/><rect x="13" y="7" width="1" height="1" fill="#000"/><rect x="14" y="7" width="1" height="1" fill="#fff"/><rect x="15" y="7" width="1" height="1" fill="#000"/><rect x="2" y="8" width="1" height="1" fill="#000"/><rect x="3" y="8" width="3" height="1" fill="#fff"/><rect x="6" y="8" width="1" height="1" fill="#000"/><rect x="7" y="8" width="1" height="1" fill="#800000"/><rect x="8" y="8" width="1" height="1" fill="#000"/><rect x="9" y="8" width="1" height="1" fill="#fff"/><rect x="10" y="8" width="1" height="1" fill="#000"/><rect x="11" y="8" width="2" height="1" fill="#808000"/><rect x="13" y="8" width="1" height="1" fill="#000"/><rect x="14" y="8" width="1" height="1" fill="#fff"/><rect x="15" y="8" width="1" height="1" fill="#000"/><rect x="2" y="9" width="1" height="1" fill="#000"/><rect x="3" y="9" width="2" height="1" fill="#fff"/><rect x="5" y="9" width="1" height="1" fill="#000"/><rect x="6" y="9" width="1" height="1" fill="#800000"/><rect x="7" y="9" width="1" height="1" fill="#000"/><rect x="8" y="9" width="2" height="1" fill="#fff"/><rect x="10" y="9" width="1" height="1" fill="#000"/><rect x="11" y="9" width="1" height="1" fill="#808000"/><rect x="12" y="9" width="1" height="1" fill="#000"/><rect x="13" y="9" width="2" height="1" fill="#fff"/><rect x="15" y="9" width="1" height="1" fill="#000"/><rect x="2" y="10" width="1" height="1" fill="#000"/><rect x="3" y="10" width="1" height="1" fill="#fff"/><rect x="4" y="10" width="1" height="1" fill="#000"/><rect x="5" y="10" width="1" height="1" fill="#800000"/><rect x="6" y="10" width="1" height="1" fill="#000"/><rect x="7" y="10" width="4" height="1" fill="#fff"/><rect x="11" y="10" width="2" height="1" fill="#000"/><rect x="13" y="10" width="2" height="1" fill="#fff"/><rect x="15" y="10" width="1" height="1" fill="#000"/><rect x="2" y="11" width="1" height="1" fill="#000"/><rect x="3" y="11" width="1" height="1" fill="#800000"/><rect x="4" y="11" width="12" height="1" fill="#000"/><rect x="1" y="12" width="1" height="1" fill="#000"/><rect x="2" y="12" width="1" height="1" fill="#800000"/><rect x="3" y="12" width="1" height="1" fill="#000"/><rect x="0" y="13" width="1" height="1" fill="#000"/><rect x="1" y="13" width="1" height="1" fill="#800000"/><rect x="2" y="13" width="1" height="1" fill="#000"/><rect x="0" y="14" width="1" height="1" fill="#800000"/><rect x="1" y="14" width="1" height="1" fill="#000"/></svg>
<svg style="left:72px;top:442px" width="17" height="15" viewBox="0 0 17 15" shape-rendering="crispEdges"><rect x="3" y="0" width="14" height="1" fill="#000080"/><rect x="3" y="1" width="14" height="1" fill="#000080"/><rect x="3" y="2" width="1" height="1" fill="#000"/><rect x="4" y="2" width="12" height="1" fill="#fff"/><rect x="16" y="2" width="1" height="1" fill="#000"/><rect x="3" y="3" width="1" height="1" fill="#000"/><rect x="4" y="3" width="1" height="1" fill="#fff"/><rect x="5" y="3" width="4" height="1" fill="#868686"/><rect x="9" y="3" width="1" height="1" fill="#fff"/><rect x="10" y="3" width="2" height="1" fill="#868686"/><rect x="12" y="3" width="4" height="1" fill="#fff"/><rect x="16" y="3" width="1" height="1" fill="#000"/><rect x="3" y="4" width="1" height="1" fill="#000"/><rect x="4" y="4" width="12" height="1" fill="#fff"/><rect x="16" y="4" width="1" height="1" fill="#000"/><rect x="3" y="5" width="1" height="1" fill="#000"/><rect x="4" y="5" width="1" height="1" fill="#fff"/><rect x="5" y="5" width="3" height="1" fill="#868686"/><rect x="8" y="5" width="1" height="1" fill="#000"/><rect x="9" y="5" width="1" height="1" fill="#fff"/><rect x="10" y="5" width="2" height="1" fill="#868686"/><rect x="12" y="5" width="4" height="1" fill="#fff"/><rect x="16" y="5" width="1" height="1" fill="#000"/><rect x="3" y="6" width="1" height="1" fill="#000"/><rect x="4" y="6" width="3" height="1" fill="#fff"/><rect x="7" y="6" width="1" height="1" fill="#000"/><rect x="8" y="6" width="1" height="1" fill="#fff"/><rect x="9" y="6" width="2" height="1" fill="#000"/><rect x="11" y="6" width="5" height="1" fill="#fff"/><rect x="16" y="6" width="1" height="1" fill="#000"/><rect x="3" y="7" width="1" height="1" fill="#000"/><rect x="4" y="7" width="2" height="1" fill="#fff"/><rect x="6" y="7" width="1" height="1" fill="#000"/><rect x="7" y="7" width="3" height="1" fill="#fff"/><rect x="10" y="7" width="1" height="1" fill="#000"/><rect x="11" y="7" width="1" height="1" fill="#fff"/><rect x="12" y="7" width="1" height="1" fill="#868686"/><rect x="13" y="7" width="1" height="1" fill="#fff"/><rect x="14" y="7" width="3" height="1" fill="#000"/><rect x="3" y="8" width="1" height="1" fill="#000"/><rect x="4" y="8" width="1" height="1" fill="#fff"/><rect x="5" y="8" width="1" height="1" fill="#000"/><rect x="6" y="8" width="7" height="1" fill="#fff"/><rect x="13" y="8" width="1" height="1" fill="#000"/><rect x="14" y="8" width="2" height="1" fill="#fff"/><rect x="16" y="8" width="1" height="1" fill="#000"/><rect x="3" y="9" width="2" height="1" fill="#000"/><rect x="5" y="9" width="7" height="1" fill="#fff"/><rect x="12" y="9" width="1" height="1" fill="#000"/><rect x="13" y="9" width="3" height="1" fill="#fff"/><rect x="16" y="9" width="1" height="1" fill="#000"/><rect x="2" y="10" width="3" height="1" fill="#000"/><rect x="5" y="10" width="6" height="1" fill="#fff"/><rect x="11" y="10" width="1" height="1" fill="#000"/><rect x="12" y="10" width="4" height="1" fill="#fff"/><rect x="16" y="10" width="1" height="1" fill="#000"/><rect x="1" y="11" width="1" height="1" fill="#000"/><rect x="2" y="11" width="2" height="1" fill="#00ffff"/><rect x="4" y="11" width="5" height="1" fill="#000"/><rect x="9" y="11" width="2" height="1" fill="#00ffff"/><rect x="11" y="11" width="6" height="1" fill="#000"/><rect x="0" y="12" width="1" height="1" fill="#000"/><rect x="1" y="12" width="2" height="1" fill="#00ffff"/><rect x="3" y="12" width="1" height="1" fill="#e0e0e0"/><rect x="4" y="12" width="4" height="1" fill="#000"/><rect x="8" y="12" width="2" height="1" fill="#00ffff"/><rect x="10" y="12" width="1" height="1" fill="#e0e0e0"/><rect x="11" y="12" width="1" height="1" fill="#000"/><rect x="0" y="13" width="1" height="1" fill="#000"/><rect x="1" y="13" width="1" height="1" fill="#00ffff"/><rect x="2" y="13" width="2" height="1" fill="#e0e0e0"/><rect x="4" y="13" width="1" height="1" fill="#000"/><rect x="8" y="13" width="1" height="1" fill="#000"/><rect x="9" y="13" width="1" height="1" fill="#00ffff"/><rect x="10" y="13" width="2" height="1" fill="#e0e0e0"/><rect x="12" y="13" width="1" height="1" fill="#000"/><rect x="1" y="14" width="3" height="1" fill="#000"/><rect x="9" y="14" width="3" height="1" fill="#000"/></svg>
<div style="left:967px;top:491px;width:16px;height:16px;background:#c6c6c6;"></div>
<div style="left:967px;top:506px;width:16px;height:1px;background:#000;"></div>
<div style="left:982px;top:491px;width:1px;height:16px;background:#000;"></div>
<div style="left:968px;top:492px;width:14px;height:1px;background:#fff;"></div>
<div style="left:968px;top:492px;width:1px;height:14px;background:#fff;"></div>
<div style="left:968px;top:505px;width:14px;height:1px;background:#868686;"></div>
<div style="left:981px;top:492px;width:1px;height:14px;background:#868686;"></div>
<svg style="left:971px;top:497px" width="7" height="4" viewBox="0 0 7 4" shape-rendering="crispEdges"><g fill="#000"><rect x="3" y="0" width="1" height="1"/><rect x="2" y="1" width="3" height="1"/><rect x="1" y="2" width="5" height="1"/><rect x="0" y="3" width="7" height="1"/></g></svg>
<svg style="left:967px;top:507px" width="16" height="10" viewBox="0 0 16 10" shape-rendering="crispEdges"><defs><pattern id="p967_507" width="2" height="2" patternUnits="userSpaceOnUse" x="0"><rect width="2" height="2" fill="#c6c6c6"/><rect width="1" height="1" fill="#fff"/><rect x="1" y="1" width="1" height="1" fill="#fff"/></pattern></defs><rect width="16" height="10" fill="url(#p967_507)"/></svg>
<div style="left:967px;top:517px;width:16px;height:62px;background:#c6c6c6;"></div>
<div style="left:967px;top:578px;width:16px;height:1px;background:#000;"></div>
<div style="left:982px;top:517px;width:1px;height:62px;background:#000;"></div>
<div style="left:968px;top:518px;width:14px;height:1px;background:#fff;"></div>
<div style="left:968px;top:518px;width:1px;height:60px;background:#fff;"></div>
<div style="left:968px;top:577px;width:14px;height:1px;background:#868686;"></div>
<div style="left:981px;top:518px;width:1px;height:60px;background:#868686;"></div>
<div style="left:967px;top:579px;width:16px;height:16px;background:#c6c6c6;"></div>
<div style="left:967px;top:594px;width:16px;height:1px;background:#000;"></div>
<div style="left:982px;top:579px;width:1px;height:16px;background:#000;"></div>
<div style="left:968px;top:580px;width:14px;height:1px;background:#fff;"></div>
<div style="left:968px;top:580px;width:1px;height:14px;background:#fff;"></div>
<div style="left:968px;top:593px;width:14px;height:1px;background:#868686;"></div>
<div style="left:981px;top:580px;width:1px;height:14px;background:#868686;"></div>
<svg style="left:971px;top:585px" width="7" height="4" viewBox="0 0 7 4" shape-rendering="crispEdges"><g fill="#000"><rect x="0" y="0" width="7" height="1"/><rect x="1" y="1" width="5" height="1"/><rect x="2" y="2" width="3" height="1"/><rect x="3" y="3" width="1" height="1"/></g></svg>
<svg style="left:592px;top:555px" width="146" height="16" viewBox="0 0 146 16" shape-rendering="crispEdges"><rect x="0.5" y="0.5" width="145" height="15" fill="none" stroke="#000" stroke-dasharray="1 1"/></svg>
<div style="left:109px;top:598px;width:115px;height:21px;background:#c6c6c6;"></div>
<div style="left:6px;top:600px;width:1px;height:17px;background:#fff;"></div>
<div style="left:108px;top:599px;width:1px;height:19px;background:#868686;"></div>
<div style="left:6px;top:617px;width:103px;height:1px;background:#868686;"></div>
<div style="left:109px;top:598px;width:1px;height:22px;background:#fff;"></div>
<div style="left:223px;top:598px;width:1px;height:22px;background:#868686;"></div>
<div style="left:109px;top:619px;width:115px;height:1px;background:#868686;"></div>
<svg style="left:112px;top:603px" width="16" height="16" viewBox="0 0 16 16" shape-rendering="crispEdges"><rect x="0" y="0" width="16" height="1" fill="#00f"/><rect x="0" y="1" width="1" height="1" fill="#00f"/><rect x="1" y="1" width="14" height="1" fill="#fff"/><rect x="15" y="1" width="1" height="1" fill="#00f"/><rect x="0" y="2" width="1" height="1" fill="#00f"/><rect x="1" y="2" width="4" height="1" fill="#fff"/><rect x="5" y="2" width="3" height="1" fill="#000080"/><rect x="8" y="2" width="7" height="1" fill="#fff"/><rect x="15" y="2" width="1" height="1" fill="#00f"/><rect x="0" y="3" width="1" height="1" fill="#00f"/><rect x="1" y="3" width="4" height="1" fill="#fff"/><rect x="5" y="3" width="5" height="1" fill="#000080"/><rect x="10" y="3" width="5" height="1" fill="#fff"/><rect x="15" y="3" width="1" height="1" fill="#00f"/><rect x="0" y="4" width="1" height="1" fill="#00f"/><rect x="1" y="4" width="1" height="1" fill="#fff"/><rect x="2" y="4" width="9" height="1" fill="#000080"/><rect x="11" y="4" width="4" height="1" fill="#fff"/><rect x="15" y="4" width="1" height="1" fill="#00f"/><rect x="0" y="5" width="1" height="1" fill="#00f"/><rect x="1" y="5" width="4" height="1" fill="#fff"/><rect x="5" y="5" width="6" height="1" fill="#000080"/><rect x="11" y="5" width="4" height="1" fill="#fff"/><rect x="15" y="5" width="1" height="1" fill="#00f"/><rect x="0" y="6" width="1" height="1" fill="#00f"/><rect x="1" y="6" width="1" height="1" fill="#fff"/><rect x="2" y="6" width="9" height="1" fill="#000080"/><rect x="11" y="6" width="4" height="1" fill="#fff"/><rect x="15" y="6" width="1" height="1" fill="#00f"/><rect x="0" y="7" width="1" height="1" fill="#00f"/><rect x="1" y="7" width="4" height="1" fill="#fff"/><rect x="5" y="7" width="5" height="1" fill="#000080"/><rect x="10" y="7" width="5" height="1" fill="#fff"/><rect x="15" y="7" width="1" height="1" fill="#00f"/><rect x="0" y="8" width="1" height="1" fill="#00f"/><rect x="1" y="8" width="4" height="1" fill="#fff"/><rect x="5" y="8" width="3" height="1" fill="#000080"/><rect x="8" y="8" width="7" height="1" fill="#fff"/><rect x="15" y="8" width="1" height="1" fill="#00f"/><rect x="0" y="9" width="1" height="1" fill="#00f"/><rect x="1" y="9" width="1" height="1" fill="#fff"/><rect x="2" y="9" width="3" height="1" fill="#f00"/><rect x="5" y="9" width="2" height="1" fill="#fff"/><rect x="7" y="9" width="5" height="1" fill="#f00"/><rect x="12" y="9" width="3" height="1" fill="#fff"/><rect x="15" y="9" width="1" height="1" fill="#00f"/><rect x="0" y="10" width="1" height="1" fill="#00f"/><rect x="1" y="10" width="1" height="1" fill="#fff"/><rect x="2" y="10" width="3" height="1" fill="#f00"/><rect x="5" y="10" width="5" height="1" fill="#fff"/><rect x="10" y="10" width="2" height="1" fill="#f00"/><rect x="12" y="10" width="3" height="1" fill="#fff"/><rect x="15" y="10" width="1" height="1" fill="#00f"/><rect x="0" y="11" width="1" height="1" fill="#00f"/><rect x="1" y="11" width="3" height="1" fill="#fff"/><rect x="4" y="11" width="5" height="1" fill="#f00"/><rect x="9" y="11" width="1" height="1" fill="#fff"/><rect x="10" y="11" width="2" height="1" fill="#f00"/><rect x="12" y="11" width="3" height="1" fill="#fff"/><rect x="15" y="11" width="1" height="1" fill="#00f"/><rect x="0" y="12" width="1" height="1" fill="#00f"/><rect x="1" y="12" width="3" height="1" fill="#fff"/><rect x="4" y="12" width="5" height="1" fill="#f00"/><rect x="9" y="12" width="1" height="1" fill="#fff"/><rect x="10" y="12" width="4" height="1" fill="#f00"/><rect x="14" y="12" width="1" height="1" fill="#fff"/><rect x="15" y="12" width="1" height="1" fill="#00f"/><rect x="0" y="13" width="1" height="1" fill="#00f"/><rect x="1" y="13" width="3" height="1" fill="#fff"/><rect x="4" y="13" width="5" height="1" fill="#f00"/><rect x="9" y="13" width="2" height="1" fill="#fff"/><rect x="11" y="13" width="3" height="1" fill="#f00"/><rect x="14" y="13" width="1" height="1" fill="#fff"/><rect x="15" y="13" width="1" height="1" fill="#00f"/><rect x="0" y="14" width="1" height="1" fill="#00f"/><rect x="1" y="14" width="14" height="1" fill="#fff"/><rect x="15" y="14" width="1" height="1" fill="#00f"/><rect x="0" y="15" width="16" height="1" fill="#00f"/></svg>
<span class="t" style="left:32px;top:602px;font-size:11px;font-weight:normal;color:#000;letter-spacing:-0.231px;">auto_signaltap</span>
<span class="t" style="left:135px;top:604px;font-size:11px;font-weight:normal;color:#000;letter-spacing:-0.267px;">auto_signaltap_1</span>
</body></html>
